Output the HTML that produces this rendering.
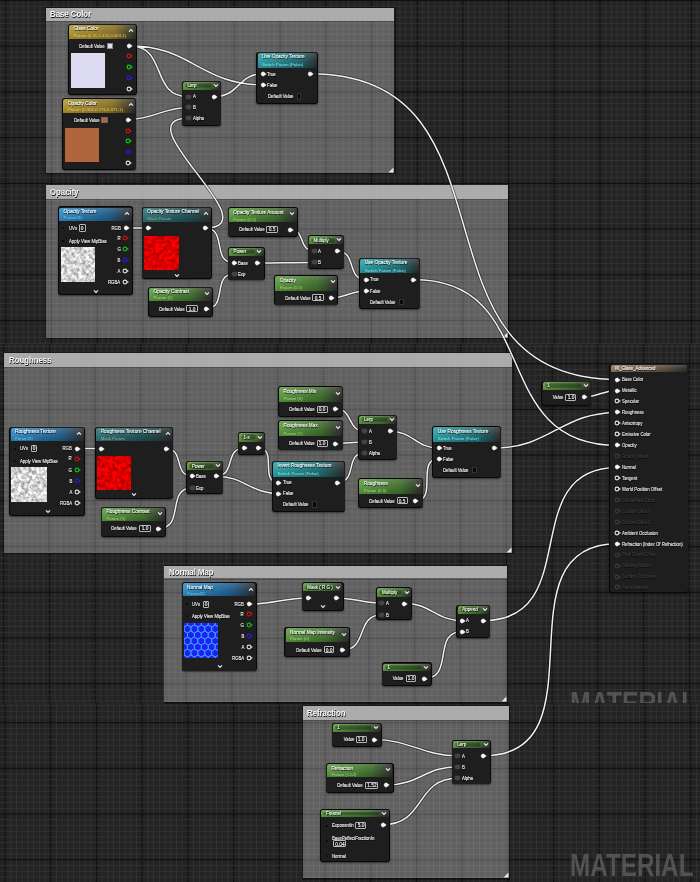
<!DOCTYPE html>
<html><head><meta charset="utf-8"><style>
html,body{margin:0;padding:0;}
body{width:700px;height:882px;overflow:hidden;position:relative;background:#232323;font-family:"Liberation Sans", sans-serif;}
div,svg{position:absolute;}
.t{white-space:nowrap;}
.L{left:0;top:0;width:700px;height:882px;will-change:transform;}
</style></head><body>
<svg style="left:0;top:0px" width="700" height="344"><line x1="-0.01" y1="0" x2="-0.01" y2="344" stroke="#383838" stroke-width="0.7"/><line x1="5.7" y1="0" x2="5.7" y2="344" stroke="#0f0f0f" stroke-width="1.0"/><line x1="11.41" y1="0" x2="11.41" y2="344" stroke="#383838" stroke-width="0.7"/><line x1="17.13" y1="0" x2="17.13" y2="344" stroke="#383838" stroke-width="0.7"/><line x1="22.84" y1="0" x2="22.84" y2="344" stroke="#383838" stroke-width="0.7"/><line x1="28.56" y1="0" x2="28.56" y2="344" stroke="#383838" stroke-width="0.7"/><line x1="34.27" y1="0" x2="34.27" y2="344" stroke="#383838" stroke-width="0.7"/><line x1="39.99" y1="0" x2="39.99" y2="344" stroke="#383838" stroke-width="0.7"/><line x1="45.7" y1="0" x2="45.7" y2="344" stroke="#383838" stroke-width="0.7"/><line x1="51.41" y1="0" x2="51.41" y2="344" stroke="#0f0f0f" stroke-width="1.0"/><line x1="57.13" y1="0" x2="57.13" y2="344" stroke="#383838" stroke-width="0.7"/><line x1="62.84" y1="0" x2="62.84" y2="344" stroke="#383838" stroke-width="0.7"/><line x1="68.56" y1="0" x2="68.56" y2="344" stroke="#383838" stroke-width="0.7"/><line x1="74.27" y1="0" x2="74.27" y2="344" stroke="#383838" stroke-width="0.7"/><line x1="79.99" y1="0" x2="79.99" y2="344" stroke="#383838" stroke-width="0.7"/><line x1="85.7" y1="0" x2="85.7" y2="344" stroke="#383838" stroke-width="0.7"/><line x1="91.41" y1="0" x2="91.41" y2="344" stroke="#383838" stroke-width="0.7"/><line x1="97.13" y1="0" x2="97.13" y2="344" stroke="#0f0f0f" stroke-width="1.0"/><line x1="102.84" y1="0" x2="102.84" y2="344" stroke="#383838" stroke-width="0.7"/><line x1="108.56" y1="0" x2="108.56" y2="344" stroke="#383838" stroke-width="0.7"/><line x1="114.27" y1="0" x2="114.27" y2="344" stroke="#383838" stroke-width="0.7"/><line x1="119.98" y1="0" x2="119.98" y2="344" stroke="#383838" stroke-width="0.7"/><line x1="125.7" y1="0" x2="125.7" y2="344" stroke="#383838" stroke-width="0.7"/><line x1="131.41" y1="0" x2="131.41" y2="344" stroke="#383838" stroke-width="0.7"/><line x1="137.13" y1="0" x2="137.13" y2="344" stroke="#383838" stroke-width="0.7"/><line x1="142.84" y1="0" x2="142.84" y2="344" stroke="#0f0f0f" stroke-width="1.0"/><line x1="148.56" y1="0" x2="148.56" y2="344" stroke="#383838" stroke-width="0.7"/><line x1="154.27" y1="0" x2="154.27" y2="344" stroke="#383838" stroke-width="0.7"/><line x1="159.98" y1="0" x2="159.98" y2="344" stroke="#383838" stroke-width="0.7"/><line x1="165.7" y1="0" x2="165.7" y2="344" stroke="#383838" stroke-width="0.7"/><line x1="171.41" y1="0" x2="171.41" y2="344" stroke="#383838" stroke-width="0.7"/><line x1="177.13" y1="0" x2="177.13" y2="344" stroke="#383838" stroke-width="0.7"/><line x1="182.84" y1="0" x2="182.84" y2="344" stroke="#383838" stroke-width="0.7"/><line x1="188.56" y1="0" x2="188.56" y2="344" stroke="#0f0f0f" stroke-width="1.0"/><line x1="194.27" y1="0" x2="194.27" y2="344" stroke="#383838" stroke-width="0.7"/><line x1="199.98" y1="0" x2="199.98" y2="344" stroke="#383838" stroke-width="0.7"/><line x1="205.7" y1="0" x2="205.7" y2="344" stroke="#383838" stroke-width="0.7"/><line x1="211.41" y1="0" x2="211.41" y2="344" stroke="#383838" stroke-width="0.7"/><line x1="217.13" y1="0" x2="217.13" y2="344" stroke="#383838" stroke-width="0.7"/><line x1="222.84" y1="0" x2="222.84" y2="344" stroke="#383838" stroke-width="0.7"/><line x1="228.56" y1="0" x2="228.56" y2="344" stroke="#383838" stroke-width="0.7"/><line x1="234.27" y1="0" x2="234.27" y2="344" stroke="#0f0f0f" stroke-width="1.0"/><line x1="239.98" y1="0" x2="239.98" y2="344" stroke="#383838" stroke-width="0.7"/><line x1="245.7" y1="0" x2="245.7" y2="344" stroke="#383838" stroke-width="0.7"/><line x1="251.41" y1="0" x2="251.41" y2="344" stroke="#383838" stroke-width="0.7"/><line x1="257.13" y1="0" x2="257.13" y2="344" stroke="#383838" stroke-width="0.7"/><line x1="262.84" y1="0" x2="262.84" y2="344" stroke="#383838" stroke-width="0.7"/><line x1="268.56" y1="0" x2="268.56" y2="344" stroke="#383838" stroke-width="0.7"/><line x1="274.27" y1="0" x2="274.27" y2="344" stroke="#383838" stroke-width="0.7"/><line x1="279.98" y1="0" x2="279.98" y2="344" stroke="#0f0f0f" stroke-width="1.0"/><line x1="285.7" y1="0" x2="285.7" y2="344" stroke="#383838" stroke-width="0.7"/><line x1="291.41" y1="0" x2="291.41" y2="344" stroke="#383838" stroke-width="0.7"/><line x1="297.13" y1="0" x2="297.13" y2="344" stroke="#383838" stroke-width="0.7"/><line x1="302.84" y1="0" x2="302.84" y2="344" stroke="#383838" stroke-width="0.7"/><line x1="308.56" y1="0" x2="308.56" y2="344" stroke="#383838" stroke-width="0.7"/><line x1="314.27" y1="0" x2="314.27" y2="344" stroke="#383838" stroke-width="0.7"/><line x1="319.98" y1="0" x2="319.98" y2="344" stroke="#383838" stroke-width="0.7"/><line x1="325.7" y1="0" x2="325.7" y2="344" stroke="#0f0f0f" stroke-width="1.0"/><line x1="331.41" y1="0" x2="331.41" y2="344" stroke="#383838" stroke-width="0.7"/><line x1="337.13" y1="0" x2="337.13" y2="344" stroke="#383838" stroke-width="0.7"/><line x1="342.84" y1="0" x2="342.84" y2="344" stroke="#383838" stroke-width="0.7"/><line x1="348.55" y1="0" x2="348.55" y2="344" stroke="#383838" stroke-width="0.7"/><line x1="354.27" y1="0" x2="354.27" y2="344" stroke="#383838" stroke-width="0.7"/><line x1="359.98" y1="0" x2="359.98" y2="344" stroke="#383838" stroke-width="0.7"/><line x1="365.7" y1="0" x2="365.7" y2="344" stroke="#383838" stroke-width="0.7"/><line x1="371.41" y1="0" x2="371.41" y2="344" stroke="#0f0f0f" stroke-width="1.0"/><line x1="377.13" y1="0" x2="377.13" y2="344" stroke="#383838" stroke-width="0.7"/><line x1="382.84" y1="0" x2="382.84" y2="344" stroke="#383838" stroke-width="0.7"/><line x1="388.55" y1="0" x2="388.55" y2="344" stroke="#383838" stroke-width="0.7"/><line x1="394.27" y1="0" x2="394.27" y2="344" stroke="#383838" stroke-width="0.7"/><line x1="399.98" y1="0" x2="399.98" y2="344" stroke="#383838" stroke-width="0.7"/><line x1="405.7" y1="0" x2="405.7" y2="344" stroke="#383838" stroke-width="0.7"/><line x1="411.41" y1="0" x2="411.41" y2="344" stroke="#383838" stroke-width="0.7"/><line x1="417.13" y1="0" x2="417.13" y2="344" stroke="#0f0f0f" stroke-width="1.0"/><line x1="422.84" y1="0" x2="422.84" y2="344" stroke="#383838" stroke-width="0.7"/><line x1="428.55" y1="0" x2="428.55" y2="344" stroke="#383838" stroke-width="0.7"/><line x1="434.27" y1="0" x2="434.27" y2="344" stroke="#383838" stroke-width="0.7"/><line x1="439.98" y1="0" x2="439.98" y2="344" stroke="#383838" stroke-width="0.7"/><line x1="445.7" y1="0" x2="445.7" y2="344" stroke="#383838" stroke-width="0.7"/><line x1="451.41" y1="0" x2="451.41" y2="344" stroke="#383838" stroke-width="0.7"/><line x1="457.13" y1="0" x2="457.13" y2="344" stroke="#383838" stroke-width="0.7"/><line x1="462.84" y1="0" x2="462.84" y2="344" stroke="#0f0f0f" stroke-width="1.0"/><line x1="468.55" y1="0" x2="468.55" y2="344" stroke="#383838" stroke-width="0.7"/><line x1="474.27" y1="0" x2="474.27" y2="344" stroke="#383838" stroke-width="0.7"/><line x1="479.98" y1="0" x2="479.98" y2="344" stroke="#383838" stroke-width="0.7"/><line x1="485.7" y1="0" x2="485.7" y2="344" stroke="#383838" stroke-width="0.7"/><line x1="491.41" y1="0" x2="491.41" y2="344" stroke="#383838" stroke-width="0.7"/><line x1="497.13" y1="0" x2="497.13" y2="344" stroke="#383838" stroke-width="0.7"/><line x1="502.84" y1="0" x2="502.84" y2="344" stroke="#383838" stroke-width="0.7"/><line x1="508.55" y1="0" x2="508.55" y2="344" stroke="#0f0f0f" stroke-width="1.0"/><line x1="514.27" y1="0" x2="514.27" y2="344" stroke="#383838" stroke-width="0.7"/><line x1="519.98" y1="0" x2="519.98" y2="344" stroke="#383838" stroke-width="0.7"/><line x1="525.7" y1="0" x2="525.7" y2="344" stroke="#383838" stroke-width="0.7"/><line x1="531.41" y1="0" x2="531.41" y2="344" stroke="#383838" stroke-width="0.7"/><line x1="537.13" y1="0" x2="537.13" y2="344" stroke="#383838" stroke-width="0.7"/><line x1="542.84" y1="0" x2="542.84" y2="344" stroke="#383838" stroke-width="0.7"/><line x1="548.55" y1="0" x2="548.55" y2="344" stroke="#383838" stroke-width="0.7"/><line x1="554.27" y1="0" x2="554.27" y2="344" stroke="#0f0f0f" stroke-width="1.0"/><line x1="559.98" y1="0" x2="559.98" y2="344" stroke="#383838" stroke-width="0.7"/><line x1="565.7" y1="0" x2="565.7" y2="344" stroke="#383838" stroke-width="0.7"/><line x1="571.41" y1="0" x2="571.41" y2="344" stroke="#383838" stroke-width="0.7"/><line x1="577.12" y1="0" x2="577.12" y2="344" stroke="#383838" stroke-width="0.7"/><line x1="582.84" y1="0" x2="582.84" y2="344" stroke="#383838" stroke-width="0.7"/><line x1="588.55" y1="0" x2="588.55" y2="344" stroke="#383838" stroke-width="0.7"/><line x1="594.27" y1="0" x2="594.27" y2="344" stroke="#383838" stroke-width="0.7"/><line x1="599.98" y1="0" x2="599.98" y2="344" stroke="#0f0f0f" stroke-width="1.0"/><line x1="605.7" y1="0" x2="605.7" y2="344" stroke="#383838" stroke-width="0.7"/><line x1="611.41" y1="0" x2="611.41" y2="344" stroke="#383838" stroke-width="0.7"/><line x1="617.12" y1="0" x2="617.12" y2="344" stroke="#383838" stroke-width="0.7"/><line x1="622.84" y1="0" x2="622.84" y2="344" stroke="#383838" stroke-width="0.7"/><line x1="628.55" y1="0" x2="628.55" y2="344" stroke="#383838" stroke-width="0.7"/><line x1="634.27" y1="0" x2="634.27" y2="344" stroke="#383838" stroke-width="0.7"/><line x1="639.98" y1="0" x2="639.98" y2="344" stroke="#383838" stroke-width="0.7"/><line x1="645.7" y1="0" x2="645.7" y2="344" stroke="#0f0f0f" stroke-width="1.0"/><line x1="651.41" y1="0" x2="651.41" y2="344" stroke="#383838" stroke-width="0.7"/><line x1="657.12" y1="0" x2="657.12" y2="344" stroke="#383838" stroke-width="0.7"/><line x1="662.84" y1="0" x2="662.84" y2="344" stroke="#383838" stroke-width="0.7"/><line x1="668.55" y1="0" x2="668.55" y2="344" stroke="#383838" stroke-width="0.7"/><line x1="674.27" y1="0" x2="674.27" y2="344" stroke="#383838" stroke-width="0.7"/><line x1="679.98" y1="0" x2="679.98" y2="344" stroke="#383838" stroke-width="0.7"/><line x1="685.7" y1="0" x2="685.7" y2="344" stroke="#383838" stroke-width="0.7"/><line x1="691.41" y1="0" x2="691.41" y2="344" stroke="#0f0f0f" stroke-width="1.0"/><line x1="697.12" y1="0" x2="697.12" y2="344" stroke="#383838" stroke-width="0.7"/><line x1="0" y1="0.5" x2="700" y2="0.5" stroke="#0f0f0f" stroke-width="1.0"/><line x1="0" y1="6.21" x2="700" y2="6.21" stroke="#383838" stroke-width="0.7"/><line x1="0" y1="11.93" x2="700" y2="11.93" stroke="#383838" stroke-width="0.7"/><line x1="0" y1="17.64" x2="700" y2="17.64" stroke="#383838" stroke-width="0.7"/><line x1="0" y1="23.36" x2="700" y2="23.36" stroke="#383838" stroke-width="0.7"/><line x1="0" y1="29.07" x2="700" y2="29.07" stroke="#383838" stroke-width="0.7"/><line x1="0" y1="34.79" x2="700" y2="34.79" stroke="#383838" stroke-width="0.7"/><line x1="0" y1="40.5" x2="700" y2="40.5" stroke="#383838" stroke-width="0.7"/><line x1="0" y1="46.21" x2="700" y2="46.21" stroke="#0f0f0f" stroke-width="1.0"/><line x1="0" y1="51.93" x2="700" y2="51.93" stroke="#383838" stroke-width="0.7"/><line x1="0" y1="57.64" x2="700" y2="57.64" stroke="#383838" stroke-width="0.7"/><line x1="0" y1="63.36" x2="700" y2="63.36" stroke="#383838" stroke-width="0.7"/><line x1="0" y1="69.07" x2="700" y2="69.07" stroke="#383838" stroke-width="0.7"/><line x1="0" y1="74.79" x2="700" y2="74.79" stroke="#383838" stroke-width="0.7"/><line x1="0" y1="80.5" x2="700" y2="80.5" stroke="#383838" stroke-width="0.7"/><line x1="0" y1="86.21" x2="700" y2="86.21" stroke="#383838" stroke-width="0.7"/><line x1="0" y1="91.93" x2="700" y2="91.93" stroke="#0f0f0f" stroke-width="1.0"/><line x1="0" y1="97.64" x2="700" y2="97.64" stroke="#383838" stroke-width="0.7"/><line x1="0" y1="103.36" x2="700" y2="103.36" stroke="#383838" stroke-width="0.7"/><line x1="0" y1="109.07" x2="700" y2="109.07" stroke="#383838" stroke-width="0.7"/><line x1="0" y1="114.78" x2="700" y2="114.78" stroke="#383838" stroke-width="0.7"/><line x1="0" y1="120.5" x2="700" y2="120.5" stroke="#383838" stroke-width="0.7"/><line x1="0" y1="126.21" x2="700" y2="126.21" stroke="#383838" stroke-width="0.7"/><line x1="0" y1="131.93" x2="700" y2="131.93" stroke="#383838" stroke-width="0.7"/><line x1="0" y1="137.64" x2="700" y2="137.64" stroke="#0f0f0f" stroke-width="1.0"/><line x1="0" y1="143.36" x2="700" y2="143.36" stroke="#383838" stroke-width="0.7"/><line x1="0" y1="149.07" x2="700" y2="149.07" stroke="#383838" stroke-width="0.7"/><line x1="0" y1="154.78" x2="700" y2="154.78" stroke="#383838" stroke-width="0.7"/><line x1="0" y1="160.5" x2="700" y2="160.5" stroke="#383838" stroke-width="0.7"/><line x1="0" y1="166.21" x2="700" y2="166.21" stroke="#383838" stroke-width="0.7"/><line x1="0" y1="171.93" x2="700" y2="171.93" stroke="#383838" stroke-width="0.7"/><line x1="0" y1="177.64" x2="700" y2="177.64" stroke="#383838" stroke-width="0.7"/><line x1="0" y1="183.36" x2="700" y2="183.36" stroke="#0f0f0f" stroke-width="1.0"/><line x1="0" y1="189.07" x2="700" y2="189.07" stroke="#383838" stroke-width="0.7"/><line x1="0" y1="194.78" x2="700" y2="194.78" stroke="#383838" stroke-width="0.7"/><line x1="0" y1="200.5" x2="700" y2="200.5" stroke="#383838" stroke-width="0.7"/><line x1="0" y1="206.21" x2="700" y2="206.21" stroke="#383838" stroke-width="0.7"/><line x1="0" y1="211.93" x2="700" y2="211.93" stroke="#383838" stroke-width="0.7"/><line x1="0" y1="217.64" x2="700" y2="217.64" stroke="#383838" stroke-width="0.7"/><line x1="0" y1="223.36" x2="700" y2="223.36" stroke="#383838" stroke-width="0.7"/><line x1="0" y1="229.07" x2="700" y2="229.07" stroke="#0f0f0f" stroke-width="1.0"/><line x1="0" y1="234.78" x2="700" y2="234.78" stroke="#383838" stroke-width="0.7"/><line x1="0" y1="240.5" x2="700" y2="240.5" stroke="#383838" stroke-width="0.7"/><line x1="0" y1="246.21" x2="700" y2="246.21" stroke="#383838" stroke-width="0.7"/><line x1="0" y1="251.93" x2="700" y2="251.93" stroke="#383838" stroke-width="0.7"/><line x1="0" y1="257.64" x2="700" y2="257.64" stroke="#383838" stroke-width="0.7"/><line x1="0" y1="263.36" x2="700" y2="263.36" stroke="#383838" stroke-width="0.7"/><line x1="0" y1="269.07" x2="700" y2="269.07" stroke="#383838" stroke-width="0.7"/><line x1="0" y1="274.78" x2="700" y2="274.78" stroke="#0f0f0f" stroke-width="1.0"/><line x1="0" y1="280.5" x2="700" y2="280.5" stroke="#383838" stroke-width="0.7"/><line x1="0" y1="286.21" x2="700" y2="286.21" stroke="#383838" stroke-width="0.7"/><line x1="0" y1="291.93" x2="700" y2="291.93" stroke="#383838" stroke-width="0.7"/><line x1="0" y1="297.64" x2="700" y2="297.64" stroke="#383838" stroke-width="0.7"/><line x1="0" y1="303.36" x2="700" y2="303.36" stroke="#383838" stroke-width="0.7"/><line x1="0" y1="309.07" x2="700" y2="309.07" stroke="#383838" stroke-width="0.7"/><line x1="0" y1="314.78" x2="700" y2="314.78" stroke="#383838" stroke-width="0.7"/><line x1="0" y1="320.5" x2="700" y2="320.5" stroke="#0f0f0f" stroke-width="1.0"/><line x1="0" y1="326.21" x2="700" y2="326.21" stroke="#383838" stroke-width="0.7"/><line x1="0" y1="331.93" x2="700" y2="331.93" stroke="#383838" stroke-width="0.7"/><line x1="0" y1="337.64" x2="700" y2="337.64" stroke="#383838" stroke-width="0.7"/><line x1="0" y1="343.35" x2="700" y2="343.35" stroke="#383838" stroke-width="0.7"/></svg><svg style="left:0;top:344px" width="700" height="359"><line x1="3.6" y1="0" x2="3.6" y2="359" stroke="#0f0f0f" stroke-width="1.0"/><line x1="9.31" y1="0" x2="9.31" y2="359" stroke="#383838" stroke-width="0.7"/><line x1="15.03" y1="0" x2="15.03" y2="359" stroke="#383838" stroke-width="0.7"/><line x1="20.74" y1="0" x2="20.74" y2="359" stroke="#383838" stroke-width="0.7"/><line x1="26.46" y1="0" x2="26.46" y2="359" stroke="#383838" stroke-width="0.7"/><line x1="32.17" y1="0" x2="32.17" y2="359" stroke="#383838" stroke-width="0.7"/><line x1="37.89" y1="0" x2="37.89" y2="359" stroke="#383838" stroke-width="0.7"/><line x1="43.6" y1="0" x2="43.6" y2="359" stroke="#383838" stroke-width="0.7"/><line x1="49.31" y1="0" x2="49.31" y2="359" stroke="#0f0f0f" stroke-width="1.0"/><line x1="55.03" y1="0" x2="55.03" y2="359" stroke="#383838" stroke-width="0.7"/><line x1="60.74" y1="0" x2="60.74" y2="359" stroke="#383838" stroke-width="0.7"/><line x1="66.46" y1="0" x2="66.46" y2="359" stroke="#383838" stroke-width="0.7"/><line x1="72.17" y1="0" x2="72.17" y2="359" stroke="#383838" stroke-width="0.7"/><line x1="77.89" y1="0" x2="77.89" y2="359" stroke="#383838" stroke-width="0.7"/><line x1="83.6" y1="0" x2="83.6" y2="359" stroke="#383838" stroke-width="0.7"/><line x1="89.31" y1="0" x2="89.31" y2="359" stroke="#383838" stroke-width="0.7"/><line x1="95.03" y1="0" x2="95.03" y2="359" stroke="#0f0f0f" stroke-width="1.0"/><line x1="100.74" y1="0" x2="100.74" y2="359" stroke="#383838" stroke-width="0.7"/><line x1="106.46" y1="0" x2="106.46" y2="359" stroke="#383838" stroke-width="0.7"/><line x1="112.17" y1="0" x2="112.17" y2="359" stroke="#383838" stroke-width="0.7"/><line x1="117.88" y1="0" x2="117.88" y2="359" stroke="#383838" stroke-width="0.7"/><line x1="123.6" y1="0" x2="123.6" y2="359" stroke="#383838" stroke-width="0.7"/><line x1="129.31" y1="0" x2="129.31" y2="359" stroke="#383838" stroke-width="0.7"/><line x1="135.03" y1="0" x2="135.03" y2="359" stroke="#383838" stroke-width="0.7"/><line x1="140.74" y1="0" x2="140.74" y2="359" stroke="#0f0f0f" stroke-width="1.0"/><line x1="146.46" y1="0" x2="146.46" y2="359" stroke="#383838" stroke-width="0.7"/><line x1="152.17" y1="0" x2="152.17" y2="359" stroke="#383838" stroke-width="0.7"/><line x1="157.88" y1="0" x2="157.88" y2="359" stroke="#383838" stroke-width="0.7"/><line x1="163.6" y1="0" x2="163.6" y2="359" stroke="#383838" stroke-width="0.7"/><line x1="169.31" y1="0" x2="169.31" y2="359" stroke="#383838" stroke-width="0.7"/><line x1="175.03" y1="0" x2="175.03" y2="359" stroke="#383838" stroke-width="0.7"/><line x1="180.74" y1="0" x2="180.74" y2="359" stroke="#383838" stroke-width="0.7"/><line x1="186.46" y1="0" x2="186.46" y2="359" stroke="#0f0f0f" stroke-width="1.0"/><line x1="192.17" y1="0" x2="192.17" y2="359" stroke="#383838" stroke-width="0.7"/><line x1="197.88" y1="0" x2="197.88" y2="359" stroke="#383838" stroke-width="0.7"/><line x1="203.6" y1="0" x2="203.6" y2="359" stroke="#383838" stroke-width="0.7"/><line x1="209.31" y1="0" x2="209.31" y2="359" stroke="#383838" stroke-width="0.7"/><line x1="215.03" y1="0" x2="215.03" y2="359" stroke="#383838" stroke-width="0.7"/><line x1="220.74" y1="0" x2="220.74" y2="359" stroke="#383838" stroke-width="0.7"/><line x1="226.46" y1="0" x2="226.46" y2="359" stroke="#383838" stroke-width="0.7"/><line x1="232.17" y1="0" x2="232.17" y2="359" stroke="#0f0f0f" stroke-width="1.0"/><line x1="237.88" y1="0" x2="237.88" y2="359" stroke="#383838" stroke-width="0.7"/><line x1="243.6" y1="0" x2="243.6" y2="359" stroke="#383838" stroke-width="0.7"/><line x1="249.31" y1="0" x2="249.31" y2="359" stroke="#383838" stroke-width="0.7"/><line x1="255.03" y1="0" x2="255.03" y2="359" stroke="#383838" stroke-width="0.7"/><line x1="260.74" y1="0" x2="260.74" y2="359" stroke="#383838" stroke-width="0.7"/><line x1="266.46" y1="0" x2="266.46" y2="359" stroke="#383838" stroke-width="0.7"/><line x1="272.17" y1="0" x2="272.17" y2="359" stroke="#383838" stroke-width="0.7"/><line x1="277.88" y1="0" x2="277.88" y2="359" stroke="#0f0f0f" stroke-width="1.0"/><line x1="283.6" y1="0" x2="283.6" y2="359" stroke="#383838" stroke-width="0.7"/><line x1="289.31" y1="0" x2="289.31" y2="359" stroke="#383838" stroke-width="0.7"/><line x1="295.03" y1="0" x2="295.03" y2="359" stroke="#383838" stroke-width="0.7"/><line x1="300.74" y1="0" x2="300.74" y2="359" stroke="#383838" stroke-width="0.7"/><line x1="306.46" y1="0" x2="306.46" y2="359" stroke="#383838" stroke-width="0.7"/><line x1="312.17" y1="0" x2="312.17" y2="359" stroke="#383838" stroke-width="0.7"/><line x1="317.88" y1="0" x2="317.88" y2="359" stroke="#383838" stroke-width="0.7"/><line x1="323.6" y1="0" x2="323.6" y2="359" stroke="#0f0f0f" stroke-width="1.0"/><line x1="329.31" y1="0" x2="329.31" y2="359" stroke="#383838" stroke-width="0.7"/><line x1="335.03" y1="0" x2="335.03" y2="359" stroke="#383838" stroke-width="0.7"/><line x1="340.74" y1="0" x2="340.74" y2="359" stroke="#383838" stroke-width="0.7"/><line x1="346.45" y1="0" x2="346.45" y2="359" stroke="#383838" stroke-width="0.7"/><line x1="352.17" y1="0" x2="352.17" y2="359" stroke="#383838" stroke-width="0.7"/><line x1="357.88" y1="0" x2="357.88" y2="359" stroke="#383838" stroke-width="0.7"/><line x1="363.6" y1="0" x2="363.6" y2="359" stroke="#383838" stroke-width="0.7"/><line x1="369.31" y1="0" x2="369.31" y2="359" stroke="#0f0f0f" stroke-width="1.0"/><line x1="375.03" y1="0" x2="375.03" y2="359" stroke="#383838" stroke-width="0.7"/><line x1="380.74" y1="0" x2="380.74" y2="359" stroke="#383838" stroke-width="0.7"/><line x1="386.45" y1="0" x2="386.45" y2="359" stroke="#383838" stroke-width="0.7"/><line x1="392.17" y1="0" x2="392.17" y2="359" stroke="#383838" stroke-width="0.7"/><line x1="397.88" y1="0" x2="397.88" y2="359" stroke="#383838" stroke-width="0.7"/><line x1="403.6" y1="0" x2="403.6" y2="359" stroke="#383838" stroke-width="0.7"/><line x1="409.31" y1="0" x2="409.31" y2="359" stroke="#383838" stroke-width="0.7"/><line x1="415.03" y1="0" x2="415.03" y2="359" stroke="#0f0f0f" stroke-width="1.0"/><line x1="420.74" y1="0" x2="420.74" y2="359" stroke="#383838" stroke-width="0.7"/><line x1="426.45" y1="0" x2="426.45" y2="359" stroke="#383838" stroke-width="0.7"/><line x1="432.17" y1="0" x2="432.17" y2="359" stroke="#383838" stroke-width="0.7"/><line x1="437.88" y1="0" x2="437.88" y2="359" stroke="#383838" stroke-width="0.7"/><line x1="443.6" y1="0" x2="443.6" y2="359" stroke="#383838" stroke-width="0.7"/><line x1="449.31" y1="0" x2="449.31" y2="359" stroke="#383838" stroke-width="0.7"/><line x1="455.03" y1="0" x2="455.03" y2="359" stroke="#383838" stroke-width="0.7"/><line x1="460.74" y1="0" x2="460.74" y2="359" stroke="#0f0f0f" stroke-width="1.0"/><line x1="466.45" y1="0" x2="466.45" y2="359" stroke="#383838" stroke-width="0.7"/><line x1="472.17" y1="0" x2="472.17" y2="359" stroke="#383838" stroke-width="0.7"/><line x1="477.88" y1="0" x2="477.88" y2="359" stroke="#383838" stroke-width="0.7"/><line x1="483.6" y1="0" x2="483.6" y2="359" stroke="#383838" stroke-width="0.7"/><line x1="489.31" y1="0" x2="489.31" y2="359" stroke="#383838" stroke-width="0.7"/><line x1="495.03" y1="0" x2="495.03" y2="359" stroke="#383838" stroke-width="0.7"/><line x1="500.74" y1="0" x2="500.74" y2="359" stroke="#383838" stroke-width="0.7"/><line x1="506.45" y1="0" x2="506.45" y2="359" stroke="#0f0f0f" stroke-width="1.0"/><line x1="512.17" y1="0" x2="512.17" y2="359" stroke="#383838" stroke-width="0.7"/><line x1="517.88" y1="0" x2="517.88" y2="359" stroke="#383838" stroke-width="0.7"/><line x1="523.6" y1="0" x2="523.6" y2="359" stroke="#383838" stroke-width="0.7"/><line x1="529.31" y1="0" x2="529.31" y2="359" stroke="#383838" stroke-width="0.7"/><line x1="535.03" y1="0" x2="535.03" y2="359" stroke="#383838" stroke-width="0.7"/><line x1="540.74" y1="0" x2="540.74" y2="359" stroke="#383838" stroke-width="0.7"/><line x1="546.45" y1="0" x2="546.45" y2="359" stroke="#383838" stroke-width="0.7"/><line x1="552.17" y1="0" x2="552.17" y2="359" stroke="#0f0f0f" stroke-width="1.0"/><line x1="557.88" y1="0" x2="557.88" y2="359" stroke="#383838" stroke-width="0.7"/><line x1="563.6" y1="0" x2="563.6" y2="359" stroke="#383838" stroke-width="0.7"/><line x1="569.31" y1="0" x2="569.31" y2="359" stroke="#383838" stroke-width="0.7"/><line x1="575.02" y1="0" x2="575.02" y2="359" stroke="#383838" stroke-width="0.7"/><line x1="580.74" y1="0" x2="580.74" y2="359" stroke="#383838" stroke-width="0.7"/><line x1="586.45" y1="0" x2="586.45" y2="359" stroke="#383838" stroke-width="0.7"/><line x1="592.17" y1="0" x2="592.17" y2="359" stroke="#383838" stroke-width="0.7"/><line x1="597.88" y1="0" x2="597.88" y2="359" stroke="#0f0f0f" stroke-width="1.0"/><line x1="603.6" y1="0" x2="603.6" y2="359" stroke="#383838" stroke-width="0.7"/><line x1="609.31" y1="0" x2="609.31" y2="359" stroke="#383838" stroke-width="0.7"/><line x1="615.02" y1="0" x2="615.02" y2="359" stroke="#383838" stroke-width="0.7"/><line x1="620.74" y1="0" x2="620.74" y2="359" stroke="#383838" stroke-width="0.7"/><line x1="626.45" y1="0" x2="626.45" y2="359" stroke="#383838" stroke-width="0.7"/><line x1="632.17" y1="0" x2="632.17" y2="359" stroke="#383838" stroke-width="0.7"/><line x1="637.88" y1="0" x2="637.88" y2="359" stroke="#383838" stroke-width="0.7"/><line x1="643.6" y1="0" x2="643.6" y2="359" stroke="#0f0f0f" stroke-width="1.0"/><line x1="649.31" y1="0" x2="649.31" y2="359" stroke="#383838" stroke-width="0.7"/><line x1="655.02" y1="0" x2="655.02" y2="359" stroke="#383838" stroke-width="0.7"/><line x1="660.74" y1="0" x2="660.74" y2="359" stroke="#383838" stroke-width="0.7"/><line x1="666.45" y1="0" x2="666.45" y2="359" stroke="#383838" stroke-width="0.7"/><line x1="672.17" y1="0" x2="672.17" y2="359" stroke="#383838" stroke-width="0.7"/><line x1="677.88" y1="0" x2="677.88" y2="359" stroke="#383838" stroke-width="0.7"/><line x1="683.6" y1="0" x2="683.6" y2="359" stroke="#383838" stroke-width="0.7"/><line x1="689.31" y1="0" x2="689.31" y2="359" stroke="#0f0f0f" stroke-width="1.0"/><line x1="695.02" y1="0" x2="695.02" y2="359" stroke="#383838" stroke-width="0.7"/><line x1="700.74" y1="0" x2="700.74" y2="359" stroke="#383838" stroke-width="0.7"/><line x1="0" y1="2.57" x2="700" y2="2.57" stroke="#383838" stroke-width="0.7"/><line x1="0" y1="8.28" x2="700" y2="8.28" stroke="#383838" stroke-width="0.7"/><line x1="0" y1="14" x2="700" y2="14" stroke="#383838" stroke-width="0.7"/><line x1="0" y1="19.71" x2="700" y2="19.71" stroke="#0f0f0f" stroke-width="1.0"/><line x1="0" y1="25.43" x2="700" y2="25.43" stroke="#383838" stroke-width="0.7"/><line x1="0" y1="31.14" x2="700" y2="31.14" stroke="#383838" stroke-width="0.7"/><line x1="0" y1="36.85" x2="700" y2="36.85" stroke="#383838" stroke-width="0.7"/><line x1="0" y1="42.57" x2="700" y2="42.57" stroke="#383838" stroke-width="0.7"/><line x1="0" y1="48.28" x2="700" y2="48.28" stroke="#383838" stroke-width="0.7"/><line x1="0" y1="54" x2="700" y2="54" stroke="#383838" stroke-width="0.7"/><line x1="0" y1="59.71" x2="700" y2="59.71" stroke="#383838" stroke-width="0.7"/><line x1="0" y1="65.43" x2="700" y2="65.43" stroke="#0f0f0f" stroke-width="1.0"/><line x1="0" y1="71.14" x2="700" y2="71.14" stroke="#383838" stroke-width="0.7"/><line x1="0" y1="76.85" x2="700" y2="76.85" stroke="#383838" stroke-width="0.7"/><line x1="0" y1="82.57" x2="700" y2="82.57" stroke="#383838" stroke-width="0.7"/><line x1="0" y1="88.28" x2="700" y2="88.28" stroke="#383838" stroke-width="0.7"/><line x1="0" y1="94" x2="700" y2="94" stroke="#383838" stroke-width="0.7"/><line x1="0" y1="99.71" x2="700" y2="99.71" stroke="#383838" stroke-width="0.7"/><line x1="0" y1="105.43" x2="700" y2="105.43" stroke="#383838" stroke-width="0.7"/><line x1="0" y1="111.14" x2="700" y2="111.14" stroke="#0f0f0f" stroke-width="1.0"/><line x1="0" y1="116.85" x2="700" y2="116.85" stroke="#383838" stroke-width="0.7"/><line x1="0" y1="122.57" x2="700" y2="122.57" stroke="#383838" stroke-width="0.7"/><line x1="0" y1="128.28" x2="700" y2="128.28" stroke="#383838" stroke-width="0.7"/><line x1="0" y1="134" x2="700" y2="134" stroke="#383838" stroke-width="0.7"/><line x1="0" y1="139.71" x2="700" y2="139.71" stroke="#383838" stroke-width="0.7"/><line x1="0" y1="145.43" x2="700" y2="145.43" stroke="#383838" stroke-width="0.7"/><line x1="0" y1="151.14" x2="700" y2="151.14" stroke="#383838" stroke-width="0.7"/><line x1="0" y1="156.85" x2="700" y2="156.85" stroke="#0f0f0f" stroke-width="1.0"/><line x1="0" y1="162.57" x2="700" y2="162.57" stroke="#383838" stroke-width="0.7"/><line x1="0" y1="168.28" x2="700" y2="168.28" stroke="#383838" stroke-width="0.7"/><line x1="0" y1="174" x2="700" y2="174" stroke="#383838" stroke-width="0.7"/><line x1="0" y1="179.71" x2="700" y2="179.71" stroke="#383838" stroke-width="0.7"/><line x1="0" y1="185.43" x2="700" y2="185.43" stroke="#383838" stroke-width="0.7"/><line x1="0" y1="191.14" x2="700" y2="191.14" stroke="#383838" stroke-width="0.7"/><line x1="0" y1="196.85" x2="700" y2="196.85" stroke="#383838" stroke-width="0.7"/><line x1="0" y1="202.57" x2="700" y2="202.57" stroke="#0f0f0f" stroke-width="1.0"/><line x1="0" y1="208.28" x2="700" y2="208.28" stroke="#383838" stroke-width="0.7"/><line x1="0" y1="214" x2="700" y2="214" stroke="#383838" stroke-width="0.7"/><line x1="0" y1="219.71" x2="700" y2="219.71" stroke="#383838" stroke-width="0.7"/><line x1="0" y1="225.42" x2="700" y2="225.42" stroke="#383838" stroke-width="0.7"/><line x1="0" y1="231.14" x2="700" y2="231.14" stroke="#383838" stroke-width="0.7"/><line x1="0" y1="236.85" x2="700" y2="236.85" stroke="#383838" stroke-width="0.7"/><line x1="0" y1="242.57" x2="700" y2="242.57" stroke="#383838" stroke-width="0.7"/><line x1="0" y1="248.28" x2="700" y2="248.28" stroke="#0f0f0f" stroke-width="1.0"/><line x1="0" y1="254" x2="700" y2="254" stroke="#383838" stroke-width="0.7"/><line x1="0" y1="259.71" x2="700" y2="259.71" stroke="#383838" stroke-width="0.7"/><line x1="0" y1="265.42" x2="700" y2="265.42" stroke="#383838" stroke-width="0.7"/><line x1="0" y1="271.14" x2="700" y2="271.14" stroke="#383838" stroke-width="0.7"/><line x1="0" y1="276.85" x2="700" y2="276.85" stroke="#383838" stroke-width="0.7"/><line x1="0" y1="282.57" x2="700" y2="282.57" stroke="#383838" stroke-width="0.7"/><line x1="0" y1="288.28" x2="700" y2="288.28" stroke="#383838" stroke-width="0.7"/><line x1="0" y1="294" x2="700" y2="294" stroke="#0f0f0f" stroke-width="1.0"/><line x1="0" y1="299.71" x2="700" y2="299.71" stroke="#383838" stroke-width="0.7"/><line x1="0" y1="305.42" x2="700" y2="305.42" stroke="#383838" stroke-width="0.7"/><line x1="0" y1="311.14" x2="700" y2="311.14" stroke="#383838" stroke-width="0.7"/><line x1="0" y1="316.85" x2="700" y2="316.85" stroke="#383838" stroke-width="0.7"/><line x1="0" y1="322.57" x2="700" y2="322.57" stroke="#383838" stroke-width="0.7"/><line x1="0" y1="328.28" x2="700" y2="328.28" stroke="#383838" stroke-width="0.7"/><line x1="0" y1="334" x2="700" y2="334" stroke="#383838" stroke-width="0.7"/><line x1="0" y1="339.71" x2="700" y2="339.71" stroke="#0f0f0f" stroke-width="1.0"/><line x1="0" y1="345.42" x2="700" y2="345.42" stroke="#383838" stroke-width="0.7"/><line x1="0" y1="351.14" x2="700" y2="351.14" stroke="#383838" stroke-width="0.7"/><line x1="0" y1="356.85" x2="700" y2="356.85" stroke="#383838" stroke-width="0.7"/></svg><svg style="left:0;top:703px" width="700" height="179"><line x1="-0.71" y1="0" x2="-0.71" y2="179" stroke="#383838" stroke-width="0.7"/><line x1="5" y1="0" x2="5" y2="179" stroke="#0f0f0f" stroke-width="1.0"/><line x1="10.71" y1="0" x2="10.71" y2="179" stroke="#383838" stroke-width="0.7"/><line x1="16.43" y1="0" x2="16.43" y2="179" stroke="#383838" stroke-width="0.7"/><line x1="22.14" y1="0" x2="22.14" y2="179" stroke="#383838" stroke-width="0.7"/><line x1="27.86" y1="0" x2="27.86" y2="179" stroke="#383838" stroke-width="0.7"/><line x1="33.57" y1="0" x2="33.57" y2="179" stroke="#383838" stroke-width="0.7"/><line x1="39.29" y1="0" x2="39.29" y2="179" stroke="#383838" stroke-width="0.7"/><line x1="45" y1="0" x2="45" y2="179" stroke="#383838" stroke-width="0.7"/><line x1="50.71" y1="0" x2="50.71" y2="179" stroke="#0f0f0f" stroke-width="1.0"/><line x1="56.43" y1="0" x2="56.43" y2="179" stroke="#383838" stroke-width="0.7"/><line x1="62.14" y1="0" x2="62.14" y2="179" stroke="#383838" stroke-width="0.7"/><line x1="67.86" y1="0" x2="67.86" y2="179" stroke="#383838" stroke-width="0.7"/><line x1="73.57" y1="0" x2="73.57" y2="179" stroke="#383838" stroke-width="0.7"/><line x1="79.29" y1="0" x2="79.29" y2="179" stroke="#383838" stroke-width="0.7"/><line x1="85" y1="0" x2="85" y2="179" stroke="#383838" stroke-width="0.7"/><line x1="90.71" y1="0" x2="90.71" y2="179" stroke="#383838" stroke-width="0.7"/><line x1="96.43" y1="0" x2="96.43" y2="179" stroke="#0f0f0f" stroke-width="1.0"/><line x1="102.14" y1="0" x2="102.14" y2="179" stroke="#383838" stroke-width="0.7"/><line x1="107.86" y1="0" x2="107.86" y2="179" stroke="#383838" stroke-width="0.7"/><line x1="113.57" y1="0" x2="113.57" y2="179" stroke="#383838" stroke-width="0.7"/><line x1="119.28" y1="0" x2="119.28" y2="179" stroke="#383838" stroke-width="0.7"/><line x1="125" y1="0" x2="125" y2="179" stroke="#383838" stroke-width="0.7"/><line x1="130.71" y1="0" x2="130.71" y2="179" stroke="#383838" stroke-width="0.7"/><line x1="136.43" y1="0" x2="136.43" y2="179" stroke="#383838" stroke-width="0.7"/><line x1="142.14" y1="0" x2="142.14" y2="179" stroke="#0f0f0f" stroke-width="1.0"/><line x1="147.86" y1="0" x2="147.86" y2="179" stroke="#383838" stroke-width="0.7"/><line x1="153.57" y1="0" x2="153.57" y2="179" stroke="#383838" stroke-width="0.7"/><line x1="159.28" y1="0" x2="159.28" y2="179" stroke="#383838" stroke-width="0.7"/><line x1="165" y1="0" x2="165" y2="179" stroke="#383838" stroke-width="0.7"/><line x1="170.71" y1="0" x2="170.71" y2="179" stroke="#383838" stroke-width="0.7"/><line x1="176.43" y1="0" x2="176.43" y2="179" stroke="#383838" stroke-width="0.7"/><line x1="182.14" y1="0" x2="182.14" y2="179" stroke="#383838" stroke-width="0.7"/><line x1="187.86" y1="0" x2="187.86" y2="179" stroke="#0f0f0f" stroke-width="1.0"/><line x1="193.57" y1="0" x2="193.57" y2="179" stroke="#383838" stroke-width="0.7"/><line x1="199.28" y1="0" x2="199.28" y2="179" stroke="#383838" stroke-width="0.7"/><line x1="205" y1="0" x2="205" y2="179" stroke="#383838" stroke-width="0.7"/><line x1="210.71" y1="0" x2="210.71" y2="179" stroke="#383838" stroke-width="0.7"/><line x1="216.43" y1="0" x2="216.43" y2="179" stroke="#383838" stroke-width="0.7"/><line x1="222.14" y1="0" x2="222.14" y2="179" stroke="#383838" stroke-width="0.7"/><line x1="227.86" y1="0" x2="227.86" y2="179" stroke="#383838" stroke-width="0.7"/><line x1="233.57" y1="0" x2="233.57" y2="179" stroke="#0f0f0f" stroke-width="1.0"/><line x1="239.28" y1="0" x2="239.28" y2="179" stroke="#383838" stroke-width="0.7"/><line x1="245" y1="0" x2="245" y2="179" stroke="#383838" stroke-width="0.7"/><line x1="250.71" y1="0" x2="250.71" y2="179" stroke="#383838" stroke-width="0.7"/><line x1="256.43" y1="0" x2="256.43" y2="179" stroke="#383838" stroke-width="0.7"/><line x1="262.14" y1="0" x2="262.14" y2="179" stroke="#383838" stroke-width="0.7"/><line x1="267.86" y1="0" x2="267.86" y2="179" stroke="#383838" stroke-width="0.7"/><line x1="273.57" y1="0" x2="273.57" y2="179" stroke="#383838" stroke-width="0.7"/><line x1="279.28" y1="0" x2="279.28" y2="179" stroke="#0f0f0f" stroke-width="1.0"/><line x1="285" y1="0" x2="285" y2="179" stroke="#383838" stroke-width="0.7"/><line x1="290.71" y1="0" x2="290.71" y2="179" stroke="#383838" stroke-width="0.7"/><line x1="296.43" y1="0" x2="296.43" y2="179" stroke="#383838" stroke-width="0.7"/><line x1="302.14" y1="0" x2="302.14" y2="179" stroke="#383838" stroke-width="0.7"/><line x1="307.86" y1="0" x2="307.86" y2="179" stroke="#383838" stroke-width="0.7"/><line x1="313.57" y1="0" x2="313.57" y2="179" stroke="#383838" stroke-width="0.7"/><line x1="319.28" y1="0" x2="319.28" y2="179" stroke="#383838" stroke-width="0.7"/><line x1="325" y1="0" x2="325" y2="179" stroke="#0f0f0f" stroke-width="1.0"/><line x1="330.71" y1="0" x2="330.71" y2="179" stroke="#383838" stroke-width="0.7"/><line x1="336.43" y1="0" x2="336.43" y2="179" stroke="#383838" stroke-width="0.7"/><line x1="342.14" y1="0" x2="342.14" y2="179" stroke="#383838" stroke-width="0.7"/><line x1="347.85" y1="0" x2="347.85" y2="179" stroke="#383838" stroke-width="0.7"/><line x1="353.57" y1="0" x2="353.57" y2="179" stroke="#383838" stroke-width="0.7"/><line x1="359.28" y1="0" x2="359.28" y2="179" stroke="#383838" stroke-width="0.7"/><line x1="365" y1="0" x2="365" y2="179" stroke="#383838" stroke-width="0.7"/><line x1="370.71" y1="0" x2="370.71" y2="179" stroke="#0f0f0f" stroke-width="1.0"/><line x1="376.43" y1="0" x2="376.43" y2="179" stroke="#383838" stroke-width="0.7"/><line x1="382.14" y1="0" x2="382.14" y2="179" stroke="#383838" stroke-width="0.7"/><line x1="387.85" y1="0" x2="387.85" y2="179" stroke="#383838" stroke-width="0.7"/><line x1="393.57" y1="0" x2="393.57" y2="179" stroke="#383838" stroke-width="0.7"/><line x1="399.28" y1="0" x2="399.28" y2="179" stroke="#383838" stroke-width="0.7"/><line x1="405" y1="0" x2="405" y2="179" stroke="#383838" stroke-width="0.7"/><line x1="410.71" y1="0" x2="410.71" y2="179" stroke="#383838" stroke-width="0.7"/><line x1="416.43" y1="0" x2="416.43" y2="179" stroke="#0f0f0f" stroke-width="1.0"/><line x1="422.14" y1="0" x2="422.14" y2="179" stroke="#383838" stroke-width="0.7"/><line x1="427.85" y1="0" x2="427.85" y2="179" stroke="#383838" stroke-width="0.7"/><line x1="433.57" y1="0" x2="433.57" y2="179" stroke="#383838" stroke-width="0.7"/><line x1="439.28" y1="0" x2="439.28" y2="179" stroke="#383838" stroke-width="0.7"/><line x1="445" y1="0" x2="445" y2="179" stroke="#383838" stroke-width="0.7"/><line x1="450.71" y1="0" x2="450.71" y2="179" stroke="#383838" stroke-width="0.7"/><line x1="456.43" y1="0" x2="456.43" y2="179" stroke="#383838" stroke-width="0.7"/><line x1="462.14" y1="0" x2="462.14" y2="179" stroke="#0f0f0f" stroke-width="1.0"/><line x1="467.85" y1="0" x2="467.85" y2="179" stroke="#383838" stroke-width="0.7"/><line x1="473.57" y1="0" x2="473.57" y2="179" stroke="#383838" stroke-width="0.7"/><line x1="479.28" y1="0" x2="479.28" y2="179" stroke="#383838" stroke-width="0.7"/><line x1="485" y1="0" x2="485" y2="179" stroke="#383838" stroke-width="0.7"/><line x1="490.71" y1="0" x2="490.71" y2="179" stroke="#383838" stroke-width="0.7"/><line x1="496.43" y1="0" x2="496.43" y2="179" stroke="#383838" stroke-width="0.7"/><line x1="502.14" y1="0" x2="502.14" y2="179" stroke="#383838" stroke-width="0.7"/><line x1="507.85" y1="0" x2="507.85" y2="179" stroke="#0f0f0f" stroke-width="1.0"/><line x1="513.57" y1="0" x2="513.57" y2="179" stroke="#383838" stroke-width="0.7"/><line x1="519.28" y1="0" x2="519.28" y2="179" stroke="#383838" stroke-width="0.7"/><line x1="525" y1="0" x2="525" y2="179" stroke="#383838" stroke-width="0.7"/><line x1="530.71" y1="0" x2="530.71" y2="179" stroke="#383838" stroke-width="0.7"/><line x1="536.43" y1="0" x2="536.43" y2="179" stroke="#383838" stroke-width="0.7"/><line x1="542.14" y1="0" x2="542.14" y2="179" stroke="#383838" stroke-width="0.7"/><line x1="547.85" y1="0" x2="547.85" y2="179" stroke="#383838" stroke-width="0.7"/><line x1="553.57" y1="0" x2="553.57" y2="179" stroke="#0f0f0f" stroke-width="1.0"/><line x1="559.28" y1="0" x2="559.28" y2="179" stroke="#383838" stroke-width="0.7"/><line x1="565" y1="0" x2="565" y2="179" stroke="#383838" stroke-width="0.7"/><line x1="570.71" y1="0" x2="570.71" y2="179" stroke="#383838" stroke-width="0.7"/><line x1="576.42" y1="0" x2="576.42" y2="179" stroke="#383838" stroke-width="0.7"/><line x1="582.14" y1="0" x2="582.14" y2="179" stroke="#383838" stroke-width="0.7"/><line x1="587.85" y1="0" x2="587.85" y2="179" stroke="#383838" stroke-width="0.7"/><line x1="593.57" y1="0" x2="593.57" y2="179" stroke="#383838" stroke-width="0.7"/><line x1="599.28" y1="0" x2="599.28" y2="179" stroke="#0f0f0f" stroke-width="1.0"/><line x1="605" y1="0" x2="605" y2="179" stroke="#383838" stroke-width="0.7"/><line x1="610.71" y1="0" x2="610.71" y2="179" stroke="#383838" stroke-width="0.7"/><line x1="616.42" y1="0" x2="616.42" y2="179" stroke="#383838" stroke-width="0.7"/><line x1="622.14" y1="0" x2="622.14" y2="179" stroke="#383838" stroke-width="0.7"/><line x1="627.85" y1="0" x2="627.85" y2="179" stroke="#383838" stroke-width="0.7"/><line x1="633.57" y1="0" x2="633.57" y2="179" stroke="#383838" stroke-width="0.7"/><line x1="639.28" y1="0" x2="639.28" y2="179" stroke="#383838" stroke-width="0.7"/><line x1="645" y1="0" x2="645" y2="179" stroke="#0f0f0f" stroke-width="1.0"/><line x1="650.71" y1="0" x2="650.71" y2="179" stroke="#383838" stroke-width="0.7"/><line x1="656.42" y1="0" x2="656.42" y2="179" stroke="#383838" stroke-width="0.7"/><line x1="662.14" y1="0" x2="662.14" y2="179" stroke="#383838" stroke-width="0.7"/><line x1="667.85" y1="0" x2="667.85" y2="179" stroke="#383838" stroke-width="0.7"/><line x1="673.57" y1="0" x2="673.57" y2="179" stroke="#383838" stroke-width="0.7"/><line x1="679.28" y1="0" x2="679.28" y2="179" stroke="#383838" stroke-width="0.7"/><line x1="685" y1="0" x2="685" y2="179" stroke="#383838" stroke-width="0.7"/><line x1="690.71" y1="0" x2="690.71" y2="179" stroke="#0f0f0f" stroke-width="1.0"/><line x1="696.42" y1="0" x2="696.42" y2="179" stroke="#383838" stroke-width="0.7"/><line x1="0" y1="2.47" x2="700" y2="2.47" stroke="#383838" stroke-width="0.7"/><line x1="0" y1="8.18" x2="700" y2="8.18" stroke="#383838" stroke-width="0.7"/><line x1="0" y1="13.9" x2="700" y2="13.9" stroke="#383838" stroke-width="0.7"/><line x1="0" y1="19.61" x2="700" y2="19.61" stroke="#0f0f0f" stroke-width="1.0"/><line x1="0" y1="25.32" x2="700" y2="25.32" stroke="#383838" stroke-width="0.7"/><line x1="0" y1="31.04" x2="700" y2="31.04" stroke="#383838" stroke-width="0.7"/><line x1="0" y1="36.75" x2="700" y2="36.75" stroke="#383838" stroke-width="0.7"/><line x1="0" y1="42.47" x2="700" y2="42.47" stroke="#383838" stroke-width="0.7"/><line x1="0" y1="48.18" x2="700" y2="48.18" stroke="#383838" stroke-width="0.7"/><line x1="0" y1="53.9" x2="700" y2="53.9" stroke="#383838" stroke-width="0.7"/><line x1="0" y1="59.61" x2="700" y2="59.61" stroke="#383838" stroke-width="0.7"/><line x1="0" y1="65.32" x2="700" y2="65.32" stroke="#0f0f0f" stroke-width="1.0"/><line x1="0" y1="71.04" x2="700" y2="71.04" stroke="#383838" stroke-width="0.7"/><line x1="0" y1="76.75" x2="700" y2="76.75" stroke="#383838" stroke-width="0.7"/><line x1="0" y1="82.47" x2="700" y2="82.47" stroke="#383838" stroke-width="0.7"/><line x1="0" y1="88.18" x2="700" y2="88.18" stroke="#383838" stroke-width="0.7"/><line x1="0" y1="93.9" x2="700" y2="93.9" stroke="#383838" stroke-width="0.7"/><line x1="0" y1="99.61" x2="700" y2="99.61" stroke="#383838" stroke-width="0.7"/><line x1="0" y1="105.32" x2="700" y2="105.32" stroke="#383838" stroke-width="0.7"/><line x1="0" y1="111.04" x2="700" y2="111.04" stroke="#0f0f0f" stroke-width="1.0"/><line x1="0" y1="116.75" x2="700" y2="116.75" stroke="#383838" stroke-width="0.7"/><line x1="0" y1="122.47" x2="700" y2="122.47" stroke="#383838" stroke-width="0.7"/><line x1="0" y1="128.18" x2="700" y2="128.18" stroke="#383838" stroke-width="0.7"/><line x1="0" y1="133.89" x2="700" y2="133.89" stroke="#383838" stroke-width="0.7"/><line x1="0" y1="139.61" x2="700" y2="139.61" stroke="#383838" stroke-width="0.7"/><line x1="0" y1="145.32" x2="700" y2="145.32" stroke="#383838" stroke-width="0.7"/><line x1="0" y1="151.04" x2="700" y2="151.04" stroke="#383838" stroke-width="0.7"/><line x1="0" y1="156.75" x2="700" y2="156.75" stroke="#0f0f0f" stroke-width="1.0"/><line x1="0" y1="162.47" x2="700" y2="162.47" stroke="#383838" stroke-width="0.7"/><line x1="0" y1="168.18" x2="700" y2="168.18" stroke="#383838" stroke-width="0.7"/><line x1="0" y1="173.89" x2="700" y2="173.89" stroke="#383838" stroke-width="0.7"/><line x1="0" y1="179.61" x2="700" y2="179.61" stroke="#383838" stroke-width="0.7"/></svg>
<div class="L">
<div style="left:560px;top:680px;width:140px;height:23px;overflow:hidden;"><div class="t" id="wm1" style="left:9.8px;top:8px;font-size:31px;line-height:31px;font-weight:bold;color:rgba(120,120,120,.55);transform:scaleX(0.8);transform-origin:0 0;">MATERIAL</div></div>
<div class="t" id="wm2" style="left:570px;top:850px;font-size:31px;line-height:31px;font-weight:bold;color:rgba(120,120,120,.55);transform:scaleX(0.782);transform-origin:0 0;">MATERIAL</div>
</div>
<div class="L"><div style="left:44.9px;top:6.8px;width:351px;height:167.5px;background:rgba(0,0,0,.45)"></div><div style="left:45.7px;top:7.6px;width:348.6px;height:165.1px;background:rgba(190,190,190,.45)"></div><svg style="left:45.7px;top:21.2px" width="348.6" height="151.5" viewBox="45.7 21.2 348.6 151.5"><line x1="45.7" y1="21.2" x2="45.7" y2="172.7" stroke="rgba(255,255,255,.07)" stroke-width="0.7"/><line x1="51.41" y1="21.2" x2="51.41" y2="172.7" stroke="rgba(0,0,0,.12)" stroke-width="1.0"/><line x1="57.13" y1="21.2" x2="57.13" y2="172.7" stroke="rgba(255,255,255,.07)" stroke-width="0.7"/><line x1="62.84" y1="21.2" x2="62.84" y2="172.7" stroke="rgba(255,255,255,.07)" stroke-width="0.7"/><line x1="68.56" y1="21.2" x2="68.56" y2="172.7" stroke="rgba(255,255,255,.07)" stroke-width="0.7"/><line x1="74.27" y1="21.2" x2="74.27" y2="172.7" stroke="rgba(255,255,255,.07)" stroke-width="0.7"/><line x1="79.99" y1="21.2" x2="79.99" y2="172.7" stroke="rgba(255,255,255,.07)" stroke-width="0.7"/><line x1="85.7" y1="21.2" x2="85.7" y2="172.7" stroke="rgba(255,255,255,.07)" stroke-width="0.7"/><line x1="91.41" y1="21.2" x2="91.41" y2="172.7" stroke="rgba(255,255,255,.07)" stroke-width="0.7"/><line x1="97.13" y1="21.2" x2="97.13" y2="172.7" stroke="rgba(0,0,0,.12)" stroke-width="1.0"/><line x1="102.84" y1="21.2" x2="102.84" y2="172.7" stroke="rgba(255,255,255,.07)" stroke-width="0.7"/><line x1="108.56" y1="21.2" x2="108.56" y2="172.7" stroke="rgba(255,255,255,.07)" stroke-width="0.7"/><line x1="114.27" y1="21.2" x2="114.27" y2="172.7" stroke="rgba(255,255,255,.07)" stroke-width="0.7"/><line x1="119.98" y1="21.2" x2="119.98" y2="172.7" stroke="rgba(255,255,255,.07)" stroke-width="0.7"/><line x1="125.7" y1="21.2" x2="125.7" y2="172.7" stroke="rgba(255,255,255,.07)" stroke-width="0.7"/><line x1="131.41" y1="21.2" x2="131.41" y2="172.7" stroke="rgba(255,255,255,.07)" stroke-width="0.7"/><line x1="137.13" y1="21.2" x2="137.13" y2="172.7" stroke="rgba(255,255,255,.07)" stroke-width="0.7"/><line x1="142.84" y1="21.2" x2="142.84" y2="172.7" stroke="rgba(0,0,0,.12)" stroke-width="1.0"/><line x1="148.56" y1="21.2" x2="148.56" y2="172.7" stroke="rgba(255,255,255,.07)" stroke-width="0.7"/><line x1="154.27" y1="21.2" x2="154.27" y2="172.7" stroke="rgba(255,255,255,.07)" stroke-width="0.7"/><line x1="159.98" y1="21.2" x2="159.98" y2="172.7" stroke="rgba(255,255,255,.07)" stroke-width="0.7"/><line x1="165.7" y1="21.2" x2="165.7" y2="172.7" stroke="rgba(255,255,255,.07)" stroke-width="0.7"/><line x1="171.41" y1="21.2" x2="171.41" y2="172.7" stroke="rgba(255,255,255,.07)" stroke-width="0.7"/><line x1="177.13" y1="21.2" x2="177.13" y2="172.7" stroke="rgba(255,255,255,.07)" stroke-width="0.7"/><line x1="182.84" y1="21.2" x2="182.84" y2="172.7" stroke="rgba(255,255,255,.07)" stroke-width="0.7"/><line x1="188.56" y1="21.2" x2="188.56" y2="172.7" stroke="rgba(0,0,0,.12)" stroke-width="1.0"/><line x1="194.27" y1="21.2" x2="194.27" y2="172.7" stroke="rgba(255,255,255,.07)" stroke-width="0.7"/><line x1="199.98" y1="21.2" x2="199.98" y2="172.7" stroke="rgba(255,255,255,.07)" stroke-width="0.7"/><line x1="205.7" y1="21.2" x2="205.7" y2="172.7" stroke="rgba(255,255,255,.07)" stroke-width="0.7"/><line x1="211.41" y1="21.2" x2="211.41" y2="172.7" stroke="rgba(255,255,255,.07)" stroke-width="0.7"/><line x1="217.13" y1="21.2" x2="217.13" y2="172.7" stroke="rgba(255,255,255,.07)" stroke-width="0.7"/><line x1="222.84" y1="21.2" x2="222.84" y2="172.7" stroke="rgba(255,255,255,.07)" stroke-width="0.7"/><line x1="228.56" y1="21.2" x2="228.56" y2="172.7" stroke="rgba(255,255,255,.07)" stroke-width="0.7"/><line x1="234.27" y1="21.2" x2="234.27" y2="172.7" stroke="rgba(0,0,0,.12)" stroke-width="1.0"/><line x1="239.98" y1="21.2" x2="239.98" y2="172.7" stroke="rgba(255,255,255,.07)" stroke-width="0.7"/><line x1="245.7" y1="21.2" x2="245.7" y2="172.7" stroke="rgba(255,255,255,.07)" stroke-width="0.7"/><line x1="251.41" y1="21.2" x2="251.41" y2="172.7" stroke="rgba(255,255,255,.07)" stroke-width="0.7"/><line x1="257.13" y1="21.2" x2="257.13" y2="172.7" stroke="rgba(255,255,255,.07)" stroke-width="0.7"/><line x1="262.84" y1="21.2" x2="262.84" y2="172.7" stroke="rgba(255,255,255,.07)" stroke-width="0.7"/><line x1="268.56" y1="21.2" x2="268.56" y2="172.7" stroke="rgba(255,255,255,.07)" stroke-width="0.7"/><line x1="274.27" y1="21.2" x2="274.27" y2="172.7" stroke="rgba(255,255,255,.07)" stroke-width="0.7"/><line x1="279.98" y1="21.2" x2="279.98" y2="172.7" stroke="rgba(0,0,0,.12)" stroke-width="1.0"/><line x1="285.7" y1="21.2" x2="285.7" y2="172.7" stroke="rgba(255,255,255,.07)" stroke-width="0.7"/><line x1="291.41" y1="21.2" x2="291.41" y2="172.7" stroke="rgba(255,255,255,.07)" stroke-width="0.7"/><line x1="297.13" y1="21.2" x2="297.13" y2="172.7" stroke="rgba(255,255,255,.07)" stroke-width="0.7"/><line x1="302.84" y1="21.2" x2="302.84" y2="172.7" stroke="rgba(255,255,255,.07)" stroke-width="0.7"/><line x1="308.56" y1="21.2" x2="308.56" y2="172.7" stroke="rgba(255,255,255,.07)" stroke-width="0.7"/><line x1="314.27" y1="21.2" x2="314.27" y2="172.7" stroke="rgba(255,255,255,.07)" stroke-width="0.7"/><line x1="319.98" y1="21.2" x2="319.98" y2="172.7" stroke="rgba(255,255,255,.07)" stroke-width="0.7"/><line x1="325.7" y1="21.2" x2="325.7" y2="172.7" stroke="rgba(0,0,0,.12)" stroke-width="1.0"/><line x1="331.41" y1="21.2" x2="331.41" y2="172.7" stroke="rgba(255,255,255,.07)" stroke-width="0.7"/><line x1="337.13" y1="21.2" x2="337.13" y2="172.7" stroke="rgba(255,255,255,.07)" stroke-width="0.7"/><line x1="342.84" y1="21.2" x2="342.84" y2="172.7" stroke="rgba(255,255,255,.07)" stroke-width="0.7"/><line x1="348.55" y1="21.2" x2="348.55" y2="172.7" stroke="rgba(255,255,255,.07)" stroke-width="0.7"/><line x1="354.27" y1="21.2" x2="354.27" y2="172.7" stroke="rgba(255,255,255,.07)" stroke-width="0.7"/><line x1="359.98" y1="21.2" x2="359.98" y2="172.7" stroke="rgba(255,255,255,.07)" stroke-width="0.7"/><line x1="365.7" y1="21.2" x2="365.7" y2="172.7" stroke="rgba(255,255,255,.07)" stroke-width="0.7"/><line x1="371.41" y1="21.2" x2="371.41" y2="172.7" stroke="rgba(0,0,0,.12)" stroke-width="1.0"/><line x1="377.13" y1="21.2" x2="377.13" y2="172.7" stroke="rgba(255,255,255,.07)" stroke-width="0.7"/><line x1="382.84" y1="21.2" x2="382.84" y2="172.7" stroke="rgba(255,255,255,.07)" stroke-width="0.7"/><line x1="388.55" y1="21.2" x2="388.55" y2="172.7" stroke="rgba(255,255,255,.07)" stroke-width="0.7"/><line x1="394.27" y1="21.2" x2="394.27" y2="172.7" stroke="rgba(255,255,255,.07)" stroke-width="0.7"/><line x1="45.7" y1="23.36" x2="394.3" y2="23.36" stroke="rgba(255,255,255,.07)" stroke-width="0.7"/><line x1="45.7" y1="29.07" x2="394.3" y2="29.07" stroke="rgba(255,255,255,.07)" stroke-width="0.7"/><line x1="45.7" y1="34.79" x2="394.3" y2="34.79" stroke="rgba(255,255,255,.07)" stroke-width="0.7"/><line x1="45.7" y1="40.5" x2="394.3" y2="40.5" stroke="rgba(255,255,255,.07)" stroke-width="0.7"/><line x1="45.7" y1="46.21" x2="394.3" y2="46.21" stroke="rgba(0,0,0,.12)" stroke-width="1.0"/><line x1="45.7" y1="51.93" x2="394.3" y2="51.93" stroke="rgba(255,255,255,.07)" stroke-width="0.7"/><line x1="45.7" y1="57.64" x2="394.3" y2="57.64" stroke="rgba(255,255,255,.07)" stroke-width="0.7"/><line x1="45.7" y1="63.36" x2="394.3" y2="63.36" stroke="rgba(255,255,255,.07)" stroke-width="0.7"/><line x1="45.7" y1="69.07" x2="394.3" y2="69.07" stroke="rgba(255,255,255,.07)" stroke-width="0.7"/><line x1="45.7" y1="74.79" x2="394.3" y2="74.79" stroke="rgba(255,255,255,.07)" stroke-width="0.7"/><line x1="45.7" y1="80.5" x2="394.3" y2="80.5" stroke="rgba(255,255,255,.07)" stroke-width="0.7"/><line x1="45.7" y1="86.21" x2="394.3" y2="86.21" stroke="rgba(255,255,255,.07)" stroke-width="0.7"/><line x1="45.7" y1="91.93" x2="394.3" y2="91.93" stroke="rgba(0,0,0,.12)" stroke-width="1.0"/><line x1="45.7" y1="97.64" x2="394.3" y2="97.64" stroke="rgba(255,255,255,.07)" stroke-width="0.7"/><line x1="45.7" y1="103.36" x2="394.3" y2="103.36" stroke="rgba(255,255,255,.07)" stroke-width="0.7"/><line x1="45.7" y1="109.07" x2="394.3" y2="109.07" stroke="rgba(255,255,255,.07)" stroke-width="0.7"/><line x1="45.7" y1="114.78" x2="394.3" y2="114.78" stroke="rgba(255,255,255,.07)" stroke-width="0.7"/><line x1="45.7" y1="120.5" x2="394.3" y2="120.5" stroke="rgba(255,255,255,.07)" stroke-width="0.7"/><line x1="45.7" y1="126.21" x2="394.3" y2="126.21" stroke="rgba(255,255,255,.07)" stroke-width="0.7"/><line x1="45.7" y1="131.93" x2="394.3" y2="131.93" stroke="rgba(255,255,255,.07)" stroke-width="0.7"/><line x1="45.7" y1="137.64" x2="394.3" y2="137.64" stroke="rgba(0,0,0,.12)" stroke-width="1.0"/><line x1="45.7" y1="143.36" x2="394.3" y2="143.36" stroke="rgba(255,255,255,.07)" stroke-width="0.7"/><line x1="45.7" y1="149.07" x2="394.3" y2="149.07" stroke="rgba(255,255,255,.07)" stroke-width="0.7"/><line x1="45.7" y1="154.78" x2="394.3" y2="154.78" stroke="rgba(255,255,255,.07)" stroke-width="0.7"/><line x1="45.7" y1="160.5" x2="394.3" y2="160.5" stroke="rgba(255,255,255,.07)" stroke-width="0.7"/><line x1="45.7" y1="166.21" x2="394.3" y2="166.21" stroke="rgba(255,255,255,.07)" stroke-width="0.7"/><line x1="45.7" y1="171.93" x2="394.3" y2="171.93" stroke="rgba(255,255,255,.07)" stroke-width="0.7"/></svg><div style="left:45.7px;top:7.6px;width:348.6px;height:13.6px;background:rgba(178,178,178,.92)"></div><div style="left:45.7px;top:21.2px;width:348.6px;height:1px;background:rgba(0,0,0,.18)"></div><div class="t" style="left:49.9px;top:9.41px;font-size:8.3px;line-height:10.38px;color:#f8f8f8;font-weight:bold;transform:scaleX(0.94);transform-origin:0 50%;text-shadow:0.5px 0.6px 0.5px #111;">Base Color</div><svg style="left:388.3px;top:166.7px" width="6" height="6"><path d="M5.5 0.5 L5.5 5.5 L0.5 5.5Z" fill="#e8e8e8"/></svg><div style="left:45.1px;top:184.6px;width:464.4px;height:154.9px;background:rgba(0,0,0,.45)"></div><div style="left:45.9px;top:185.4px;width:462px;height:152.5px;background:rgba(190,190,190,.45)"></div><svg style="left:45.9px;top:199px" width="462" height="138.9" viewBox="45.9 199 462 138.9"><line x1="45.7" y1="199" x2="45.7" y2="337.9" stroke="rgba(255,255,255,.07)" stroke-width="0.7"/><line x1="51.41" y1="199" x2="51.41" y2="337.9" stroke="rgba(0,0,0,.12)" stroke-width="1.0"/><line x1="57.13" y1="199" x2="57.13" y2="337.9" stroke="rgba(255,255,255,.07)" stroke-width="0.7"/><line x1="62.84" y1="199" x2="62.84" y2="337.9" stroke="rgba(255,255,255,.07)" stroke-width="0.7"/><line x1="68.56" y1="199" x2="68.56" y2="337.9" stroke="rgba(255,255,255,.07)" stroke-width="0.7"/><line x1="74.27" y1="199" x2="74.27" y2="337.9" stroke="rgba(255,255,255,.07)" stroke-width="0.7"/><line x1="79.99" y1="199" x2="79.99" y2="337.9" stroke="rgba(255,255,255,.07)" stroke-width="0.7"/><line x1="85.7" y1="199" x2="85.7" y2="337.9" stroke="rgba(255,255,255,.07)" stroke-width="0.7"/><line x1="91.41" y1="199" x2="91.41" y2="337.9" stroke="rgba(255,255,255,.07)" stroke-width="0.7"/><line x1="97.13" y1="199" x2="97.13" y2="337.9" stroke="rgba(0,0,0,.12)" stroke-width="1.0"/><line x1="102.84" y1="199" x2="102.84" y2="337.9" stroke="rgba(255,255,255,.07)" stroke-width="0.7"/><line x1="108.56" y1="199" x2="108.56" y2="337.9" stroke="rgba(255,255,255,.07)" stroke-width="0.7"/><line x1="114.27" y1="199" x2="114.27" y2="337.9" stroke="rgba(255,255,255,.07)" stroke-width="0.7"/><line x1="119.98" y1="199" x2="119.98" y2="337.9" stroke="rgba(255,255,255,.07)" stroke-width="0.7"/><line x1="125.7" y1="199" x2="125.7" y2="337.9" stroke="rgba(255,255,255,.07)" stroke-width="0.7"/><line x1="131.41" y1="199" x2="131.41" y2="337.9" stroke="rgba(255,255,255,.07)" stroke-width="0.7"/><line x1="137.13" y1="199" x2="137.13" y2="337.9" stroke="rgba(255,255,255,.07)" stroke-width="0.7"/><line x1="142.84" y1="199" x2="142.84" y2="337.9" stroke="rgba(0,0,0,.12)" stroke-width="1.0"/><line x1="148.56" y1="199" x2="148.56" y2="337.9" stroke="rgba(255,255,255,.07)" stroke-width="0.7"/><line x1="154.27" y1="199" x2="154.27" y2="337.9" stroke="rgba(255,255,255,.07)" stroke-width="0.7"/><line x1="159.98" y1="199" x2="159.98" y2="337.9" stroke="rgba(255,255,255,.07)" stroke-width="0.7"/><line x1="165.7" y1="199" x2="165.7" y2="337.9" stroke="rgba(255,255,255,.07)" stroke-width="0.7"/><line x1="171.41" y1="199" x2="171.41" y2="337.9" stroke="rgba(255,255,255,.07)" stroke-width="0.7"/><line x1="177.13" y1="199" x2="177.13" y2="337.9" stroke="rgba(255,255,255,.07)" stroke-width="0.7"/><line x1="182.84" y1="199" x2="182.84" y2="337.9" stroke="rgba(255,255,255,.07)" stroke-width="0.7"/><line x1="188.56" y1="199" x2="188.56" y2="337.9" stroke="rgba(0,0,0,.12)" stroke-width="1.0"/><line x1="194.27" y1="199" x2="194.27" y2="337.9" stroke="rgba(255,255,255,.07)" stroke-width="0.7"/><line x1="199.98" y1="199" x2="199.98" y2="337.9" stroke="rgba(255,255,255,.07)" stroke-width="0.7"/><line x1="205.7" y1="199" x2="205.7" y2="337.9" stroke="rgba(255,255,255,.07)" stroke-width="0.7"/><line x1="211.41" y1="199" x2="211.41" y2="337.9" stroke="rgba(255,255,255,.07)" stroke-width="0.7"/><line x1="217.13" y1="199" x2="217.13" y2="337.9" stroke="rgba(255,255,255,.07)" stroke-width="0.7"/><line x1="222.84" y1="199" x2="222.84" y2="337.9" stroke="rgba(255,255,255,.07)" stroke-width="0.7"/><line x1="228.56" y1="199" x2="228.56" y2="337.9" stroke="rgba(255,255,255,.07)" stroke-width="0.7"/><line x1="234.27" y1="199" x2="234.27" y2="337.9" stroke="rgba(0,0,0,.12)" stroke-width="1.0"/><line x1="239.98" y1="199" x2="239.98" y2="337.9" stroke="rgba(255,255,255,.07)" stroke-width="0.7"/><line x1="245.7" y1="199" x2="245.7" y2="337.9" stroke="rgba(255,255,255,.07)" stroke-width="0.7"/><line x1="251.41" y1="199" x2="251.41" y2="337.9" stroke="rgba(255,255,255,.07)" stroke-width="0.7"/><line x1="257.13" y1="199" x2="257.13" y2="337.9" stroke="rgba(255,255,255,.07)" stroke-width="0.7"/><line x1="262.84" y1="199" x2="262.84" y2="337.9" stroke="rgba(255,255,255,.07)" stroke-width="0.7"/><line x1="268.56" y1="199" x2="268.56" y2="337.9" stroke="rgba(255,255,255,.07)" stroke-width="0.7"/><line x1="274.27" y1="199" x2="274.27" y2="337.9" stroke="rgba(255,255,255,.07)" stroke-width="0.7"/><line x1="279.98" y1="199" x2="279.98" y2="337.9" stroke="rgba(0,0,0,.12)" stroke-width="1.0"/><line x1="285.7" y1="199" x2="285.7" y2="337.9" stroke="rgba(255,255,255,.07)" stroke-width="0.7"/><line x1="291.41" y1="199" x2="291.41" y2="337.9" stroke="rgba(255,255,255,.07)" stroke-width="0.7"/><line x1="297.13" y1="199" x2="297.13" y2="337.9" stroke="rgba(255,255,255,.07)" stroke-width="0.7"/><line x1="302.84" y1="199" x2="302.84" y2="337.9" stroke="rgba(255,255,255,.07)" stroke-width="0.7"/><line x1="308.56" y1="199" x2="308.56" y2="337.9" stroke="rgba(255,255,255,.07)" stroke-width="0.7"/><line x1="314.27" y1="199" x2="314.27" y2="337.9" stroke="rgba(255,255,255,.07)" stroke-width="0.7"/><line x1="319.98" y1="199" x2="319.98" y2="337.9" stroke="rgba(255,255,255,.07)" stroke-width="0.7"/><line x1="325.7" y1="199" x2="325.7" y2="337.9" stroke="rgba(0,0,0,.12)" stroke-width="1.0"/><line x1="331.41" y1="199" x2="331.41" y2="337.9" stroke="rgba(255,255,255,.07)" stroke-width="0.7"/><line x1="337.13" y1="199" x2="337.13" y2="337.9" stroke="rgba(255,255,255,.07)" stroke-width="0.7"/><line x1="342.84" y1="199" x2="342.84" y2="337.9" stroke="rgba(255,255,255,.07)" stroke-width="0.7"/><line x1="348.55" y1="199" x2="348.55" y2="337.9" stroke="rgba(255,255,255,.07)" stroke-width="0.7"/><line x1="354.27" y1="199" x2="354.27" y2="337.9" stroke="rgba(255,255,255,.07)" stroke-width="0.7"/><line x1="359.98" y1="199" x2="359.98" y2="337.9" stroke="rgba(255,255,255,.07)" stroke-width="0.7"/><line x1="365.7" y1="199" x2="365.7" y2="337.9" stroke="rgba(255,255,255,.07)" stroke-width="0.7"/><line x1="371.41" y1="199" x2="371.41" y2="337.9" stroke="rgba(0,0,0,.12)" stroke-width="1.0"/><line x1="377.13" y1="199" x2="377.13" y2="337.9" stroke="rgba(255,255,255,.07)" stroke-width="0.7"/><line x1="382.84" y1="199" x2="382.84" y2="337.9" stroke="rgba(255,255,255,.07)" stroke-width="0.7"/><line x1="388.55" y1="199" x2="388.55" y2="337.9" stroke="rgba(255,255,255,.07)" stroke-width="0.7"/><line x1="394.27" y1="199" x2="394.27" y2="337.9" stroke="rgba(255,255,255,.07)" stroke-width="0.7"/><line x1="399.98" y1="199" x2="399.98" y2="337.9" stroke="rgba(255,255,255,.07)" stroke-width="0.7"/><line x1="405.7" y1="199" x2="405.7" y2="337.9" stroke="rgba(255,255,255,.07)" stroke-width="0.7"/><line x1="411.41" y1="199" x2="411.41" y2="337.9" stroke="rgba(255,255,255,.07)" stroke-width="0.7"/><line x1="417.13" y1="199" x2="417.13" y2="337.9" stroke="rgba(0,0,0,.12)" stroke-width="1.0"/><line x1="422.84" y1="199" x2="422.84" y2="337.9" stroke="rgba(255,255,255,.07)" stroke-width="0.7"/><line x1="428.55" y1="199" x2="428.55" y2="337.9" stroke="rgba(255,255,255,.07)" stroke-width="0.7"/><line x1="434.27" y1="199" x2="434.27" y2="337.9" stroke="rgba(255,255,255,.07)" stroke-width="0.7"/><line x1="439.98" y1="199" x2="439.98" y2="337.9" stroke="rgba(255,255,255,.07)" stroke-width="0.7"/><line x1="445.7" y1="199" x2="445.7" y2="337.9" stroke="rgba(255,255,255,.07)" stroke-width="0.7"/><line x1="451.41" y1="199" x2="451.41" y2="337.9" stroke="rgba(255,255,255,.07)" stroke-width="0.7"/><line x1="457.13" y1="199" x2="457.13" y2="337.9" stroke="rgba(255,255,255,.07)" stroke-width="0.7"/><line x1="462.84" y1="199" x2="462.84" y2="337.9" stroke="rgba(0,0,0,.12)" stroke-width="1.0"/><line x1="468.55" y1="199" x2="468.55" y2="337.9" stroke="rgba(255,255,255,.07)" stroke-width="0.7"/><line x1="474.27" y1="199" x2="474.27" y2="337.9" stroke="rgba(255,255,255,.07)" stroke-width="0.7"/><line x1="479.98" y1="199" x2="479.98" y2="337.9" stroke="rgba(255,255,255,.07)" stroke-width="0.7"/><line x1="485.7" y1="199" x2="485.7" y2="337.9" stroke="rgba(255,255,255,.07)" stroke-width="0.7"/><line x1="491.41" y1="199" x2="491.41" y2="337.9" stroke="rgba(255,255,255,.07)" stroke-width="0.7"/><line x1="497.13" y1="199" x2="497.13" y2="337.9" stroke="rgba(255,255,255,.07)" stroke-width="0.7"/><line x1="502.84" y1="199" x2="502.84" y2="337.9" stroke="rgba(255,255,255,.07)" stroke-width="0.7"/><line x1="508.55" y1="199" x2="508.55" y2="337.9" stroke="rgba(0,0,0,.12)" stroke-width="1.0"/><line x1="45.9" y1="200.5" x2="507.9" y2="200.5" stroke="rgba(255,255,255,.07)" stroke-width="0.7"/><line x1="45.9" y1="206.21" x2="507.9" y2="206.21" stroke="rgba(255,255,255,.07)" stroke-width="0.7"/><line x1="45.9" y1="211.93" x2="507.9" y2="211.93" stroke="rgba(255,255,255,.07)" stroke-width="0.7"/><line x1="45.9" y1="217.64" x2="507.9" y2="217.64" stroke="rgba(255,255,255,.07)" stroke-width="0.7"/><line x1="45.9" y1="223.36" x2="507.9" y2="223.36" stroke="rgba(255,255,255,.07)" stroke-width="0.7"/><line x1="45.9" y1="229.07" x2="507.9" y2="229.07" stroke="rgba(0,0,0,.12)" stroke-width="1.0"/><line x1="45.9" y1="234.78" x2="507.9" y2="234.78" stroke="rgba(255,255,255,.07)" stroke-width="0.7"/><line x1="45.9" y1="240.5" x2="507.9" y2="240.5" stroke="rgba(255,255,255,.07)" stroke-width="0.7"/><line x1="45.9" y1="246.21" x2="507.9" y2="246.21" stroke="rgba(255,255,255,.07)" stroke-width="0.7"/><line x1="45.9" y1="251.93" x2="507.9" y2="251.93" stroke="rgba(255,255,255,.07)" stroke-width="0.7"/><line x1="45.9" y1="257.64" x2="507.9" y2="257.64" stroke="rgba(255,255,255,.07)" stroke-width="0.7"/><line x1="45.9" y1="263.36" x2="507.9" y2="263.36" stroke="rgba(255,255,255,.07)" stroke-width="0.7"/><line x1="45.9" y1="269.07" x2="507.9" y2="269.07" stroke="rgba(255,255,255,.07)" stroke-width="0.7"/><line x1="45.9" y1="274.78" x2="507.9" y2="274.78" stroke="rgba(0,0,0,.12)" stroke-width="1.0"/><line x1="45.9" y1="280.5" x2="507.9" y2="280.5" stroke="rgba(255,255,255,.07)" stroke-width="0.7"/><line x1="45.9" y1="286.21" x2="507.9" y2="286.21" stroke="rgba(255,255,255,.07)" stroke-width="0.7"/><line x1="45.9" y1="291.93" x2="507.9" y2="291.93" stroke="rgba(255,255,255,.07)" stroke-width="0.7"/><line x1="45.9" y1="297.64" x2="507.9" y2="297.64" stroke="rgba(255,255,255,.07)" stroke-width="0.7"/><line x1="45.9" y1="303.36" x2="507.9" y2="303.36" stroke="rgba(255,255,255,.07)" stroke-width="0.7"/><line x1="45.9" y1="309.07" x2="507.9" y2="309.07" stroke="rgba(255,255,255,.07)" stroke-width="0.7"/><line x1="45.9" y1="314.78" x2="507.9" y2="314.78" stroke="rgba(255,255,255,.07)" stroke-width="0.7"/><line x1="45.9" y1="320.5" x2="507.9" y2="320.5" stroke="rgba(0,0,0,.12)" stroke-width="1.0"/><line x1="45.9" y1="326.21" x2="507.9" y2="326.21" stroke="rgba(255,255,255,.07)" stroke-width="0.7"/><line x1="45.9" y1="331.93" x2="507.9" y2="331.93" stroke="rgba(255,255,255,.07)" stroke-width="0.7"/><line x1="45.9" y1="337.64" x2="507.9" y2="337.64" stroke="rgba(255,255,255,.07)" stroke-width="0.7"/></svg><div style="left:45.9px;top:185.4px;width:462px;height:13.6px;background:rgba(178,178,178,.92)"></div><div style="left:45.9px;top:199px;width:462px;height:1px;background:rgba(0,0,0,.18)"></div><div class="t" style="left:50.1px;top:187.21px;font-size:8.3px;line-height:10.38px;color:#f8f8f8;font-weight:bold;transform:scaleX(0.94);transform-origin:0 50%;text-shadow:0.5px 0.6px 0.5px #111;">Opacity</div><svg style="left:501.9px;top:331.9px" width="6" height="6"><path d="M5.5 0.5 L5.5 5.5 L0.5 5.5Z" fill="#e8e8e8"/></svg><div style="left:3.5px;top:352.2px;width:510.1px;height:201.9px;background:rgba(0,0,0,.45)"></div><div style="left:4.3px;top:353px;width:507.7px;height:199.5px;background:rgba(190,190,190,.45)"></div><svg style="left:4.3px;top:367.2px" width="507.7" height="185.3" viewBox="4.3 367.2 507.7 185.3"><line x1="3.6" y1="367.2" x2="3.6" y2="552.5" stroke="rgba(0,0,0,.12)" stroke-width="1.0"/><line x1="9.31" y1="367.2" x2="9.31" y2="552.5" stroke="rgba(255,255,255,.07)" stroke-width="0.7"/><line x1="15.03" y1="367.2" x2="15.03" y2="552.5" stroke="rgba(255,255,255,.07)" stroke-width="0.7"/><line x1="20.74" y1="367.2" x2="20.74" y2="552.5" stroke="rgba(255,255,255,.07)" stroke-width="0.7"/><line x1="26.46" y1="367.2" x2="26.46" y2="552.5" stroke="rgba(255,255,255,.07)" stroke-width="0.7"/><line x1="32.17" y1="367.2" x2="32.17" y2="552.5" stroke="rgba(255,255,255,.07)" stroke-width="0.7"/><line x1="37.89" y1="367.2" x2="37.89" y2="552.5" stroke="rgba(255,255,255,.07)" stroke-width="0.7"/><line x1="43.6" y1="367.2" x2="43.6" y2="552.5" stroke="rgba(255,255,255,.07)" stroke-width="0.7"/><line x1="49.31" y1="367.2" x2="49.31" y2="552.5" stroke="rgba(0,0,0,.12)" stroke-width="1.0"/><line x1="55.03" y1="367.2" x2="55.03" y2="552.5" stroke="rgba(255,255,255,.07)" stroke-width="0.7"/><line x1="60.74" y1="367.2" x2="60.74" y2="552.5" stroke="rgba(255,255,255,.07)" stroke-width="0.7"/><line x1="66.46" y1="367.2" x2="66.46" y2="552.5" stroke="rgba(255,255,255,.07)" stroke-width="0.7"/><line x1="72.17" y1="367.2" x2="72.17" y2="552.5" stroke="rgba(255,255,255,.07)" stroke-width="0.7"/><line x1="77.89" y1="367.2" x2="77.89" y2="552.5" stroke="rgba(255,255,255,.07)" stroke-width="0.7"/><line x1="83.6" y1="367.2" x2="83.6" y2="552.5" stroke="rgba(255,255,255,.07)" stroke-width="0.7"/><line x1="89.31" y1="367.2" x2="89.31" y2="552.5" stroke="rgba(255,255,255,.07)" stroke-width="0.7"/><line x1="95.03" y1="367.2" x2="95.03" y2="552.5" stroke="rgba(0,0,0,.12)" stroke-width="1.0"/><line x1="100.74" y1="367.2" x2="100.74" y2="552.5" stroke="rgba(255,255,255,.07)" stroke-width="0.7"/><line x1="106.46" y1="367.2" x2="106.46" y2="552.5" stroke="rgba(255,255,255,.07)" stroke-width="0.7"/><line x1="112.17" y1="367.2" x2="112.17" y2="552.5" stroke="rgba(255,255,255,.07)" stroke-width="0.7"/><line x1="117.88" y1="367.2" x2="117.88" y2="552.5" stroke="rgba(255,255,255,.07)" stroke-width="0.7"/><line x1="123.6" y1="367.2" x2="123.6" y2="552.5" stroke="rgba(255,255,255,.07)" stroke-width="0.7"/><line x1="129.31" y1="367.2" x2="129.31" y2="552.5" stroke="rgba(255,255,255,.07)" stroke-width="0.7"/><line x1="135.03" y1="367.2" x2="135.03" y2="552.5" stroke="rgba(255,255,255,.07)" stroke-width="0.7"/><line x1="140.74" y1="367.2" x2="140.74" y2="552.5" stroke="rgba(0,0,0,.12)" stroke-width="1.0"/><line x1="146.46" y1="367.2" x2="146.46" y2="552.5" stroke="rgba(255,255,255,.07)" stroke-width="0.7"/><line x1="152.17" y1="367.2" x2="152.17" y2="552.5" stroke="rgba(255,255,255,.07)" stroke-width="0.7"/><line x1="157.88" y1="367.2" x2="157.88" y2="552.5" stroke="rgba(255,255,255,.07)" stroke-width="0.7"/><line x1="163.6" y1="367.2" x2="163.6" y2="552.5" stroke="rgba(255,255,255,.07)" stroke-width="0.7"/><line x1="169.31" y1="367.2" x2="169.31" y2="552.5" stroke="rgba(255,255,255,.07)" stroke-width="0.7"/><line x1="175.03" y1="367.2" x2="175.03" y2="552.5" stroke="rgba(255,255,255,.07)" stroke-width="0.7"/><line x1="180.74" y1="367.2" x2="180.74" y2="552.5" stroke="rgba(255,255,255,.07)" stroke-width="0.7"/><line x1="186.46" y1="367.2" x2="186.46" y2="552.5" stroke="rgba(0,0,0,.12)" stroke-width="1.0"/><line x1="192.17" y1="367.2" x2="192.17" y2="552.5" stroke="rgba(255,255,255,.07)" stroke-width="0.7"/><line x1="197.88" y1="367.2" x2="197.88" y2="552.5" stroke="rgba(255,255,255,.07)" stroke-width="0.7"/><line x1="203.6" y1="367.2" x2="203.6" y2="552.5" stroke="rgba(255,255,255,.07)" stroke-width="0.7"/><line x1="209.31" y1="367.2" x2="209.31" y2="552.5" stroke="rgba(255,255,255,.07)" stroke-width="0.7"/><line x1="215.03" y1="367.2" x2="215.03" y2="552.5" stroke="rgba(255,255,255,.07)" stroke-width="0.7"/><line x1="220.74" y1="367.2" x2="220.74" y2="552.5" stroke="rgba(255,255,255,.07)" stroke-width="0.7"/><line x1="226.46" y1="367.2" x2="226.46" y2="552.5" stroke="rgba(255,255,255,.07)" stroke-width="0.7"/><line x1="232.17" y1="367.2" x2="232.17" y2="552.5" stroke="rgba(0,0,0,.12)" stroke-width="1.0"/><line x1="237.88" y1="367.2" x2="237.88" y2="552.5" stroke="rgba(255,255,255,.07)" stroke-width="0.7"/><line x1="243.6" y1="367.2" x2="243.6" y2="552.5" stroke="rgba(255,255,255,.07)" stroke-width="0.7"/><line x1="249.31" y1="367.2" x2="249.31" y2="552.5" stroke="rgba(255,255,255,.07)" stroke-width="0.7"/><line x1="255.03" y1="367.2" x2="255.03" y2="552.5" stroke="rgba(255,255,255,.07)" stroke-width="0.7"/><line x1="260.74" y1="367.2" x2="260.74" y2="552.5" stroke="rgba(255,255,255,.07)" stroke-width="0.7"/><line x1="266.46" y1="367.2" x2="266.46" y2="552.5" stroke="rgba(255,255,255,.07)" stroke-width="0.7"/><line x1="272.17" y1="367.2" x2="272.17" y2="552.5" stroke="rgba(255,255,255,.07)" stroke-width="0.7"/><line x1="277.88" y1="367.2" x2="277.88" y2="552.5" stroke="rgba(0,0,0,.12)" stroke-width="1.0"/><line x1="283.6" y1="367.2" x2="283.6" y2="552.5" stroke="rgba(255,255,255,.07)" stroke-width="0.7"/><line x1="289.31" y1="367.2" x2="289.31" y2="552.5" stroke="rgba(255,255,255,.07)" stroke-width="0.7"/><line x1="295.03" y1="367.2" x2="295.03" y2="552.5" stroke="rgba(255,255,255,.07)" stroke-width="0.7"/><line x1="300.74" y1="367.2" x2="300.74" y2="552.5" stroke="rgba(255,255,255,.07)" stroke-width="0.7"/><line x1="306.46" y1="367.2" x2="306.46" y2="552.5" stroke="rgba(255,255,255,.07)" stroke-width="0.7"/><line x1="312.17" y1="367.2" x2="312.17" y2="552.5" stroke="rgba(255,255,255,.07)" stroke-width="0.7"/><line x1="317.88" y1="367.2" x2="317.88" y2="552.5" stroke="rgba(255,255,255,.07)" stroke-width="0.7"/><line x1="323.6" y1="367.2" x2="323.6" y2="552.5" stroke="rgba(0,0,0,.12)" stroke-width="1.0"/><line x1="329.31" y1="367.2" x2="329.31" y2="552.5" stroke="rgba(255,255,255,.07)" stroke-width="0.7"/><line x1="335.03" y1="367.2" x2="335.03" y2="552.5" stroke="rgba(255,255,255,.07)" stroke-width="0.7"/><line x1="340.74" y1="367.2" x2="340.74" y2="552.5" stroke="rgba(255,255,255,.07)" stroke-width="0.7"/><line x1="346.45" y1="367.2" x2="346.45" y2="552.5" stroke="rgba(255,255,255,.07)" stroke-width="0.7"/><line x1="352.17" y1="367.2" x2="352.17" y2="552.5" stroke="rgba(255,255,255,.07)" stroke-width="0.7"/><line x1="357.88" y1="367.2" x2="357.88" y2="552.5" stroke="rgba(255,255,255,.07)" stroke-width="0.7"/><line x1="363.6" y1="367.2" x2="363.6" y2="552.5" stroke="rgba(255,255,255,.07)" stroke-width="0.7"/><line x1="369.31" y1="367.2" x2="369.31" y2="552.5" stroke="rgba(0,0,0,.12)" stroke-width="1.0"/><line x1="375.03" y1="367.2" x2="375.03" y2="552.5" stroke="rgba(255,255,255,.07)" stroke-width="0.7"/><line x1="380.74" y1="367.2" x2="380.74" y2="552.5" stroke="rgba(255,255,255,.07)" stroke-width="0.7"/><line x1="386.45" y1="367.2" x2="386.45" y2="552.5" stroke="rgba(255,255,255,.07)" stroke-width="0.7"/><line x1="392.17" y1="367.2" x2="392.17" y2="552.5" stroke="rgba(255,255,255,.07)" stroke-width="0.7"/><line x1="397.88" y1="367.2" x2="397.88" y2="552.5" stroke="rgba(255,255,255,.07)" stroke-width="0.7"/><line x1="403.6" y1="367.2" x2="403.6" y2="552.5" stroke="rgba(255,255,255,.07)" stroke-width="0.7"/><line x1="409.31" y1="367.2" x2="409.31" y2="552.5" stroke="rgba(255,255,255,.07)" stroke-width="0.7"/><line x1="415.03" y1="367.2" x2="415.03" y2="552.5" stroke="rgba(0,0,0,.12)" stroke-width="1.0"/><line x1="420.74" y1="367.2" x2="420.74" y2="552.5" stroke="rgba(255,255,255,.07)" stroke-width="0.7"/><line x1="426.45" y1="367.2" x2="426.45" y2="552.5" stroke="rgba(255,255,255,.07)" stroke-width="0.7"/><line x1="432.17" y1="367.2" x2="432.17" y2="552.5" stroke="rgba(255,255,255,.07)" stroke-width="0.7"/><line x1="437.88" y1="367.2" x2="437.88" y2="552.5" stroke="rgba(255,255,255,.07)" stroke-width="0.7"/><line x1="443.6" y1="367.2" x2="443.6" y2="552.5" stroke="rgba(255,255,255,.07)" stroke-width="0.7"/><line x1="449.31" y1="367.2" x2="449.31" y2="552.5" stroke="rgba(255,255,255,.07)" stroke-width="0.7"/><line x1="455.03" y1="367.2" x2="455.03" y2="552.5" stroke="rgba(255,255,255,.07)" stroke-width="0.7"/><line x1="460.74" y1="367.2" x2="460.74" y2="552.5" stroke="rgba(0,0,0,.12)" stroke-width="1.0"/><line x1="466.45" y1="367.2" x2="466.45" y2="552.5" stroke="rgba(255,255,255,.07)" stroke-width="0.7"/><line x1="472.17" y1="367.2" x2="472.17" y2="552.5" stroke="rgba(255,255,255,.07)" stroke-width="0.7"/><line x1="477.88" y1="367.2" x2="477.88" y2="552.5" stroke="rgba(255,255,255,.07)" stroke-width="0.7"/><line x1="483.6" y1="367.2" x2="483.6" y2="552.5" stroke="rgba(255,255,255,.07)" stroke-width="0.7"/><line x1="489.31" y1="367.2" x2="489.31" y2="552.5" stroke="rgba(255,255,255,.07)" stroke-width="0.7"/><line x1="495.03" y1="367.2" x2="495.03" y2="552.5" stroke="rgba(255,255,255,.07)" stroke-width="0.7"/><line x1="500.74" y1="367.2" x2="500.74" y2="552.5" stroke="rgba(255,255,255,.07)" stroke-width="0.7"/><line x1="506.45" y1="367.2" x2="506.45" y2="552.5" stroke="rgba(0,0,0,.12)" stroke-width="1.0"/><line x1="512.17" y1="367.2" x2="512.17" y2="552.5" stroke="rgba(255,255,255,.07)" stroke-width="0.7"/><line x1="4.3" y1="369.43" x2="512" y2="369.43" stroke="rgba(255,255,255,.07)" stroke-width="0.7"/><line x1="4.3" y1="375.14" x2="512" y2="375.14" stroke="rgba(255,255,255,.07)" stroke-width="0.7"/><line x1="4.3" y1="380.85" x2="512" y2="380.85" stroke="rgba(255,255,255,.07)" stroke-width="0.7"/><line x1="4.3" y1="386.57" x2="512" y2="386.57" stroke="rgba(255,255,255,.07)" stroke-width="0.7"/><line x1="4.3" y1="392.28" x2="512" y2="392.28" stroke="rgba(255,255,255,.07)" stroke-width="0.7"/><line x1="4.3" y1="398" x2="512" y2="398" stroke="rgba(255,255,255,.07)" stroke-width="0.7"/><line x1="4.3" y1="403.71" x2="512" y2="403.71" stroke="rgba(255,255,255,.07)" stroke-width="0.7"/><line x1="4.3" y1="409.43" x2="512" y2="409.43" stroke="rgba(0,0,0,.12)" stroke-width="1.0"/><line x1="4.3" y1="415.14" x2="512" y2="415.14" stroke="rgba(255,255,255,.07)" stroke-width="0.7"/><line x1="4.3" y1="420.85" x2="512" y2="420.85" stroke="rgba(255,255,255,.07)" stroke-width="0.7"/><line x1="4.3" y1="426.57" x2="512" y2="426.57" stroke="rgba(255,255,255,.07)" stroke-width="0.7"/><line x1="4.3" y1="432.28" x2="512" y2="432.28" stroke="rgba(255,255,255,.07)" stroke-width="0.7"/><line x1="4.3" y1="438" x2="512" y2="438" stroke="rgba(255,255,255,.07)" stroke-width="0.7"/><line x1="4.3" y1="443.71" x2="512" y2="443.71" stroke="rgba(255,255,255,.07)" stroke-width="0.7"/><line x1="4.3" y1="449.43" x2="512" y2="449.43" stroke="rgba(255,255,255,.07)" stroke-width="0.7"/><line x1="4.3" y1="455.14" x2="512" y2="455.14" stroke="rgba(0,0,0,.12)" stroke-width="1.0"/><line x1="4.3" y1="460.85" x2="512" y2="460.85" stroke="rgba(255,255,255,.07)" stroke-width="0.7"/><line x1="4.3" y1="466.57" x2="512" y2="466.57" stroke="rgba(255,255,255,.07)" stroke-width="0.7"/><line x1="4.3" y1="472.28" x2="512" y2="472.28" stroke="rgba(255,255,255,.07)" stroke-width="0.7"/><line x1="4.3" y1="478" x2="512" y2="478" stroke="rgba(255,255,255,.07)" stroke-width="0.7"/><line x1="4.3" y1="483.71" x2="512" y2="483.71" stroke="rgba(255,255,255,.07)" stroke-width="0.7"/><line x1="4.3" y1="489.43" x2="512" y2="489.43" stroke="rgba(255,255,255,.07)" stroke-width="0.7"/><line x1="4.3" y1="495.14" x2="512" y2="495.14" stroke="rgba(255,255,255,.07)" stroke-width="0.7"/><line x1="4.3" y1="500.85" x2="512" y2="500.85" stroke="rgba(0,0,0,.12)" stroke-width="1.0"/><line x1="4.3" y1="506.57" x2="512" y2="506.57" stroke="rgba(255,255,255,.07)" stroke-width="0.7"/><line x1="4.3" y1="512.28" x2="512" y2="512.28" stroke="rgba(255,255,255,.07)" stroke-width="0.7"/><line x1="4.3" y1="518" x2="512" y2="518" stroke="rgba(255,255,255,.07)" stroke-width="0.7"/><line x1="4.3" y1="523.71" x2="512" y2="523.71" stroke="rgba(255,255,255,.07)" stroke-width="0.7"/><line x1="4.3" y1="529.43" x2="512" y2="529.43" stroke="rgba(255,255,255,.07)" stroke-width="0.7"/><line x1="4.3" y1="535.14" x2="512" y2="535.14" stroke="rgba(255,255,255,.07)" stroke-width="0.7"/><line x1="4.3" y1="540.85" x2="512" y2="540.85" stroke="rgba(255,255,255,.07)" stroke-width="0.7"/><line x1="4.3" y1="546.57" x2="512" y2="546.57" stroke="rgba(0,0,0,.12)" stroke-width="1.0"/><line x1="4.3" y1="552.28" x2="512" y2="552.28" stroke="rgba(255,255,255,.07)" stroke-width="0.7"/></svg><div style="left:4.3px;top:353px;width:507.7px;height:14.2px;background:rgba(178,178,178,.92)"></div><div style="left:4.3px;top:367.2px;width:507.7px;height:1px;background:rgba(0,0,0,.18)"></div><div class="t" style="left:8.5px;top:355.11px;font-size:8.3px;line-height:10.38px;color:#f8f8f8;font-weight:bold;transform:scaleX(0.94);transform-origin:0 50%;text-shadow:0.5px 0.6px 0.5px #111;">Roughness</div><svg style="left:506px;top:546.5px" width="6" height="6"><path d="M5.5 0.5 L5.5 5.5 L0.5 5.5Z" fill="#e8e8e8"/></svg><div style="left:163.6px;top:564.8px;width:344.8px;height:139px;background:rgba(0,0,0,.45)"></div><div style="left:164.4px;top:565.6px;width:342.4px;height:136.6px;background:rgba(190,190,190,.45)"></div><svg style="left:164.4px;top:578.5px" width="342.4" height="123.7" viewBox="164.4 578.5 342.4 123.7"><line x1="163.6" y1="578.5" x2="163.6" y2="702.2" stroke="rgba(255,255,255,.07)" stroke-width="0.7"/><line x1="169.31" y1="578.5" x2="169.31" y2="702.2" stroke="rgba(255,255,255,.07)" stroke-width="0.7"/><line x1="175.03" y1="578.5" x2="175.03" y2="702.2" stroke="rgba(255,255,255,.07)" stroke-width="0.7"/><line x1="180.74" y1="578.5" x2="180.74" y2="702.2" stroke="rgba(255,255,255,.07)" stroke-width="0.7"/><line x1="186.46" y1="578.5" x2="186.46" y2="702.2" stroke="rgba(0,0,0,.12)" stroke-width="1.0"/><line x1="192.17" y1="578.5" x2="192.17" y2="702.2" stroke="rgba(255,255,255,.07)" stroke-width="0.7"/><line x1="197.88" y1="578.5" x2="197.88" y2="702.2" stroke="rgba(255,255,255,.07)" stroke-width="0.7"/><line x1="203.6" y1="578.5" x2="203.6" y2="702.2" stroke="rgba(255,255,255,.07)" stroke-width="0.7"/><line x1="209.31" y1="578.5" x2="209.31" y2="702.2" stroke="rgba(255,255,255,.07)" stroke-width="0.7"/><line x1="215.03" y1="578.5" x2="215.03" y2="702.2" stroke="rgba(255,255,255,.07)" stroke-width="0.7"/><line x1="220.74" y1="578.5" x2="220.74" y2="702.2" stroke="rgba(255,255,255,.07)" stroke-width="0.7"/><line x1="226.46" y1="578.5" x2="226.46" y2="702.2" stroke="rgba(255,255,255,.07)" stroke-width="0.7"/><line x1="232.17" y1="578.5" x2="232.17" y2="702.2" stroke="rgba(0,0,0,.12)" stroke-width="1.0"/><line x1="237.88" y1="578.5" x2="237.88" y2="702.2" stroke="rgba(255,255,255,.07)" stroke-width="0.7"/><line x1="243.6" y1="578.5" x2="243.6" y2="702.2" stroke="rgba(255,255,255,.07)" stroke-width="0.7"/><line x1="249.31" y1="578.5" x2="249.31" y2="702.2" stroke="rgba(255,255,255,.07)" stroke-width="0.7"/><line x1="255.03" y1="578.5" x2="255.03" y2="702.2" stroke="rgba(255,255,255,.07)" stroke-width="0.7"/><line x1="260.74" y1="578.5" x2="260.74" y2="702.2" stroke="rgba(255,255,255,.07)" stroke-width="0.7"/><line x1="266.46" y1="578.5" x2="266.46" y2="702.2" stroke="rgba(255,255,255,.07)" stroke-width="0.7"/><line x1="272.17" y1="578.5" x2="272.17" y2="702.2" stroke="rgba(255,255,255,.07)" stroke-width="0.7"/><line x1="277.88" y1="578.5" x2="277.88" y2="702.2" stroke="rgba(0,0,0,.12)" stroke-width="1.0"/><line x1="283.6" y1="578.5" x2="283.6" y2="702.2" stroke="rgba(255,255,255,.07)" stroke-width="0.7"/><line x1="289.31" y1="578.5" x2="289.31" y2="702.2" stroke="rgba(255,255,255,.07)" stroke-width="0.7"/><line x1="295.03" y1="578.5" x2="295.03" y2="702.2" stroke="rgba(255,255,255,.07)" stroke-width="0.7"/><line x1="300.74" y1="578.5" x2="300.74" y2="702.2" stroke="rgba(255,255,255,.07)" stroke-width="0.7"/><line x1="306.46" y1="578.5" x2="306.46" y2="702.2" stroke="rgba(255,255,255,.07)" stroke-width="0.7"/><line x1="312.17" y1="578.5" x2="312.17" y2="702.2" stroke="rgba(255,255,255,.07)" stroke-width="0.7"/><line x1="317.88" y1="578.5" x2="317.88" y2="702.2" stroke="rgba(255,255,255,.07)" stroke-width="0.7"/><line x1="323.6" y1="578.5" x2="323.6" y2="702.2" stroke="rgba(0,0,0,.12)" stroke-width="1.0"/><line x1="329.31" y1="578.5" x2="329.31" y2="702.2" stroke="rgba(255,255,255,.07)" stroke-width="0.7"/><line x1="335.03" y1="578.5" x2="335.03" y2="702.2" stroke="rgba(255,255,255,.07)" stroke-width="0.7"/><line x1="340.74" y1="578.5" x2="340.74" y2="702.2" stroke="rgba(255,255,255,.07)" stroke-width="0.7"/><line x1="346.45" y1="578.5" x2="346.45" y2="702.2" stroke="rgba(255,255,255,.07)" stroke-width="0.7"/><line x1="352.17" y1="578.5" x2="352.17" y2="702.2" stroke="rgba(255,255,255,.07)" stroke-width="0.7"/><line x1="357.88" y1="578.5" x2="357.88" y2="702.2" stroke="rgba(255,255,255,.07)" stroke-width="0.7"/><line x1="363.6" y1="578.5" x2="363.6" y2="702.2" stroke="rgba(255,255,255,.07)" stroke-width="0.7"/><line x1="369.31" y1="578.5" x2="369.31" y2="702.2" stroke="rgba(0,0,0,.12)" stroke-width="1.0"/><line x1="375.03" y1="578.5" x2="375.03" y2="702.2" stroke="rgba(255,255,255,.07)" stroke-width="0.7"/><line x1="380.74" y1="578.5" x2="380.74" y2="702.2" stroke="rgba(255,255,255,.07)" stroke-width="0.7"/><line x1="386.45" y1="578.5" x2="386.45" y2="702.2" stroke="rgba(255,255,255,.07)" stroke-width="0.7"/><line x1="392.17" y1="578.5" x2="392.17" y2="702.2" stroke="rgba(255,255,255,.07)" stroke-width="0.7"/><line x1="397.88" y1="578.5" x2="397.88" y2="702.2" stroke="rgba(255,255,255,.07)" stroke-width="0.7"/><line x1="403.6" y1="578.5" x2="403.6" y2="702.2" stroke="rgba(255,255,255,.07)" stroke-width="0.7"/><line x1="409.31" y1="578.5" x2="409.31" y2="702.2" stroke="rgba(255,255,255,.07)" stroke-width="0.7"/><line x1="415.03" y1="578.5" x2="415.03" y2="702.2" stroke="rgba(0,0,0,.12)" stroke-width="1.0"/><line x1="420.74" y1="578.5" x2="420.74" y2="702.2" stroke="rgba(255,255,255,.07)" stroke-width="0.7"/><line x1="426.45" y1="578.5" x2="426.45" y2="702.2" stroke="rgba(255,255,255,.07)" stroke-width="0.7"/><line x1="432.17" y1="578.5" x2="432.17" y2="702.2" stroke="rgba(255,255,255,.07)" stroke-width="0.7"/><line x1="437.88" y1="578.5" x2="437.88" y2="702.2" stroke="rgba(255,255,255,.07)" stroke-width="0.7"/><line x1="443.6" y1="578.5" x2="443.6" y2="702.2" stroke="rgba(255,255,255,.07)" stroke-width="0.7"/><line x1="449.31" y1="578.5" x2="449.31" y2="702.2" stroke="rgba(255,255,255,.07)" stroke-width="0.7"/><line x1="455.03" y1="578.5" x2="455.03" y2="702.2" stroke="rgba(255,255,255,.07)" stroke-width="0.7"/><line x1="460.74" y1="578.5" x2="460.74" y2="702.2" stroke="rgba(0,0,0,.12)" stroke-width="1.0"/><line x1="466.45" y1="578.5" x2="466.45" y2="702.2" stroke="rgba(255,255,255,.07)" stroke-width="0.7"/><line x1="472.17" y1="578.5" x2="472.17" y2="702.2" stroke="rgba(255,255,255,.07)" stroke-width="0.7"/><line x1="477.88" y1="578.5" x2="477.88" y2="702.2" stroke="rgba(255,255,255,.07)" stroke-width="0.7"/><line x1="483.6" y1="578.5" x2="483.6" y2="702.2" stroke="rgba(255,255,255,.07)" stroke-width="0.7"/><line x1="489.31" y1="578.5" x2="489.31" y2="702.2" stroke="rgba(255,255,255,.07)" stroke-width="0.7"/><line x1="495.03" y1="578.5" x2="495.03" y2="702.2" stroke="rgba(255,255,255,.07)" stroke-width="0.7"/><line x1="500.74" y1="578.5" x2="500.74" y2="702.2" stroke="rgba(255,255,255,.07)" stroke-width="0.7"/><line x1="506.45" y1="578.5" x2="506.45" y2="702.2" stroke="rgba(0,0,0,.12)" stroke-width="1.0"/><line x1="164.4" y1="580.85" x2="506.8" y2="580.85" stroke="rgba(255,255,255,.07)" stroke-width="0.7"/><line x1="164.4" y1="586.57" x2="506.8" y2="586.57" stroke="rgba(255,255,255,.07)" stroke-width="0.7"/><line x1="164.4" y1="592.28" x2="506.8" y2="592.28" stroke="rgba(0,0,0,.12)" stroke-width="1.0"/><line x1="164.4" y1="598" x2="506.8" y2="598" stroke="rgba(255,255,255,.07)" stroke-width="0.7"/><line x1="164.4" y1="603.71" x2="506.8" y2="603.71" stroke="rgba(255,255,255,.07)" stroke-width="0.7"/><line x1="164.4" y1="609.42" x2="506.8" y2="609.42" stroke="rgba(255,255,255,.07)" stroke-width="0.7"/><line x1="164.4" y1="615.14" x2="506.8" y2="615.14" stroke="rgba(255,255,255,.07)" stroke-width="0.7"/><line x1="164.4" y1="620.85" x2="506.8" y2="620.85" stroke="rgba(255,255,255,.07)" stroke-width="0.7"/><line x1="164.4" y1="626.57" x2="506.8" y2="626.57" stroke="rgba(255,255,255,.07)" stroke-width="0.7"/><line x1="164.4" y1="632.28" x2="506.8" y2="632.28" stroke="rgba(255,255,255,.07)" stroke-width="0.7"/><line x1="164.4" y1="638" x2="506.8" y2="638" stroke="rgba(0,0,0,.12)" stroke-width="1.0"/><line x1="164.4" y1="643.71" x2="506.8" y2="643.71" stroke="rgba(255,255,255,.07)" stroke-width="0.7"/><line x1="164.4" y1="649.42" x2="506.8" y2="649.42" stroke="rgba(255,255,255,.07)" stroke-width="0.7"/><line x1="164.4" y1="655.14" x2="506.8" y2="655.14" stroke="rgba(255,255,255,.07)" stroke-width="0.7"/><line x1="164.4" y1="660.85" x2="506.8" y2="660.85" stroke="rgba(255,255,255,.07)" stroke-width="0.7"/><line x1="164.4" y1="666.57" x2="506.8" y2="666.57" stroke="rgba(255,255,255,.07)" stroke-width="0.7"/><line x1="164.4" y1="672.28" x2="506.8" y2="672.28" stroke="rgba(255,255,255,.07)" stroke-width="0.7"/><line x1="164.4" y1="678" x2="506.8" y2="678" stroke="rgba(255,255,255,.07)" stroke-width="0.7"/><line x1="164.4" y1="683.71" x2="506.8" y2="683.71" stroke="rgba(0,0,0,.12)" stroke-width="1.0"/><line x1="164.4" y1="689.42" x2="506.8" y2="689.42" stroke="rgba(255,255,255,.07)" stroke-width="0.7"/><line x1="164.4" y1="695.14" x2="506.8" y2="695.14" stroke="rgba(255,255,255,.07)" stroke-width="0.7"/><line x1="164.4" y1="700.85" x2="506.8" y2="700.85" stroke="rgba(255,255,255,.07)" stroke-width="0.7"/></svg><div style="left:164.4px;top:565.6px;width:342.4px;height:12.9px;background:rgba(178,178,178,.92)"></div><div style="left:164.4px;top:578.5px;width:342.4px;height:1px;background:rgba(0,0,0,.18)"></div><div class="t" style="left:168.6px;top:567.06px;font-size:8.3px;line-height:10.38px;color:#f8f8f8;font-weight:bold;transform:scaleX(0.94);transform-origin:0 50%;text-shadow:0.5px 0.6px 0.5px #111;">Normal Map</div><svg style="left:500.8px;top:696.2px" width="6" height="6"><path d="M5.5 0.5 L5.5 5.5 L0.5 5.5Z" fill="#e8e8e8"/></svg><div style="left:302px;top:705.4px;width:208.4px;height:174.2px;background:rgba(0,0,0,.45)"></div><div style="left:302.8px;top:706.2px;width:206px;height:171.8px;background:rgba(190,190,190,.45)"></div><svg style="left:302.8px;top:719.6px" width="206" height="158.4" viewBox="302.8 719.6 206 158.4"><line x1="302.14" y1="719.6" x2="302.14" y2="878" stroke="rgba(255,255,255,.07)" stroke-width="0.7"/><line x1="307.86" y1="719.6" x2="307.86" y2="878" stroke="rgba(255,255,255,.07)" stroke-width="0.7"/><line x1="313.57" y1="719.6" x2="313.57" y2="878" stroke="rgba(255,255,255,.07)" stroke-width="0.7"/><line x1="319.28" y1="719.6" x2="319.28" y2="878" stroke="rgba(255,255,255,.07)" stroke-width="0.7"/><line x1="325" y1="719.6" x2="325" y2="878" stroke="rgba(0,0,0,.12)" stroke-width="1.0"/><line x1="330.71" y1="719.6" x2="330.71" y2="878" stroke="rgba(255,255,255,.07)" stroke-width="0.7"/><line x1="336.43" y1="719.6" x2="336.43" y2="878" stroke="rgba(255,255,255,.07)" stroke-width="0.7"/><line x1="342.14" y1="719.6" x2="342.14" y2="878" stroke="rgba(255,255,255,.07)" stroke-width="0.7"/><line x1="347.85" y1="719.6" x2="347.85" y2="878" stroke="rgba(255,255,255,.07)" stroke-width="0.7"/><line x1="353.57" y1="719.6" x2="353.57" y2="878" stroke="rgba(255,255,255,.07)" stroke-width="0.7"/><line x1="359.28" y1="719.6" x2="359.28" y2="878" stroke="rgba(255,255,255,.07)" stroke-width="0.7"/><line x1="365" y1="719.6" x2="365" y2="878" stroke="rgba(255,255,255,.07)" stroke-width="0.7"/><line x1="370.71" y1="719.6" x2="370.71" y2="878" stroke="rgba(0,0,0,.12)" stroke-width="1.0"/><line x1="376.43" y1="719.6" x2="376.43" y2="878" stroke="rgba(255,255,255,.07)" stroke-width="0.7"/><line x1="382.14" y1="719.6" x2="382.14" y2="878" stroke="rgba(255,255,255,.07)" stroke-width="0.7"/><line x1="387.85" y1="719.6" x2="387.85" y2="878" stroke="rgba(255,255,255,.07)" stroke-width="0.7"/><line x1="393.57" y1="719.6" x2="393.57" y2="878" stroke="rgba(255,255,255,.07)" stroke-width="0.7"/><line x1="399.28" y1="719.6" x2="399.28" y2="878" stroke="rgba(255,255,255,.07)" stroke-width="0.7"/><line x1="405" y1="719.6" x2="405" y2="878" stroke="rgba(255,255,255,.07)" stroke-width="0.7"/><line x1="410.71" y1="719.6" x2="410.71" y2="878" stroke="rgba(255,255,255,.07)" stroke-width="0.7"/><line x1="416.43" y1="719.6" x2="416.43" y2="878" stroke="rgba(0,0,0,.12)" stroke-width="1.0"/><line x1="422.14" y1="719.6" x2="422.14" y2="878" stroke="rgba(255,255,255,.07)" stroke-width="0.7"/><line x1="427.85" y1="719.6" x2="427.85" y2="878" stroke="rgba(255,255,255,.07)" stroke-width="0.7"/><line x1="433.57" y1="719.6" x2="433.57" y2="878" stroke="rgba(255,255,255,.07)" stroke-width="0.7"/><line x1="439.28" y1="719.6" x2="439.28" y2="878" stroke="rgba(255,255,255,.07)" stroke-width="0.7"/><line x1="445" y1="719.6" x2="445" y2="878" stroke="rgba(255,255,255,.07)" stroke-width="0.7"/><line x1="450.71" y1="719.6" x2="450.71" y2="878" stroke="rgba(255,255,255,.07)" stroke-width="0.7"/><line x1="456.43" y1="719.6" x2="456.43" y2="878" stroke="rgba(255,255,255,.07)" stroke-width="0.7"/><line x1="462.14" y1="719.6" x2="462.14" y2="878" stroke="rgba(0,0,0,.12)" stroke-width="1.0"/><line x1="467.85" y1="719.6" x2="467.85" y2="878" stroke="rgba(255,255,255,.07)" stroke-width="0.7"/><line x1="473.57" y1="719.6" x2="473.57" y2="878" stroke="rgba(255,255,255,.07)" stroke-width="0.7"/><line x1="479.28" y1="719.6" x2="479.28" y2="878" stroke="rgba(255,255,255,.07)" stroke-width="0.7"/><line x1="485" y1="719.6" x2="485" y2="878" stroke="rgba(255,255,255,.07)" stroke-width="0.7"/><line x1="490.71" y1="719.6" x2="490.71" y2="878" stroke="rgba(255,255,255,.07)" stroke-width="0.7"/><line x1="496.43" y1="719.6" x2="496.43" y2="878" stroke="rgba(255,255,255,.07)" stroke-width="0.7"/><line x1="502.14" y1="719.6" x2="502.14" y2="878" stroke="rgba(255,255,255,.07)" stroke-width="0.7"/><line x1="507.85" y1="719.6" x2="507.85" y2="878" stroke="rgba(0,0,0,.12)" stroke-width="1.0"/><line x1="302.8" y1="722.61" x2="508.8" y2="722.61" stroke="rgba(0,0,0,.12)" stroke-width="1.0"/><line x1="302.8" y1="728.32" x2="508.8" y2="728.32" stroke="rgba(255,255,255,.07)" stroke-width="0.7"/><line x1="302.8" y1="734.04" x2="508.8" y2="734.04" stroke="rgba(255,255,255,.07)" stroke-width="0.7"/><line x1="302.8" y1="739.75" x2="508.8" y2="739.75" stroke="rgba(255,255,255,.07)" stroke-width="0.7"/><line x1="302.8" y1="745.47" x2="508.8" y2="745.47" stroke="rgba(255,255,255,.07)" stroke-width="0.7"/><line x1="302.8" y1="751.18" x2="508.8" y2="751.18" stroke="rgba(255,255,255,.07)" stroke-width="0.7"/><line x1="302.8" y1="756.9" x2="508.8" y2="756.9" stroke="rgba(255,255,255,.07)" stroke-width="0.7"/><line x1="302.8" y1="762.61" x2="508.8" y2="762.61" stroke="rgba(255,255,255,.07)" stroke-width="0.7"/><line x1="302.8" y1="768.32" x2="508.8" y2="768.32" stroke="rgba(0,0,0,.12)" stroke-width="1.0"/><line x1="302.8" y1="774.04" x2="508.8" y2="774.04" stroke="rgba(255,255,255,.07)" stroke-width="0.7"/><line x1="302.8" y1="779.75" x2="508.8" y2="779.75" stroke="rgba(255,255,255,.07)" stroke-width="0.7"/><line x1="302.8" y1="785.47" x2="508.8" y2="785.47" stroke="rgba(255,255,255,.07)" stroke-width="0.7"/><line x1="302.8" y1="791.18" x2="508.8" y2="791.18" stroke="rgba(255,255,255,.07)" stroke-width="0.7"/><line x1="302.8" y1="796.9" x2="508.8" y2="796.9" stroke="rgba(255,255,255,.07)" stroke-width="0.7"/><line x1="302.8" y1="802.61" x2="508.8" y2="802.61" stroke="rgba(255,255,255,.07)" stroke-width="0.7"/><line x1="302.8" y1="808.32" x2="508.8" y2="808.32" stroke="rgba(255,255,255,.07)" stroke-width="0.7"/><line x1="302.8" y1="814.04" x2="508.8" y2="814.04" stroke="rgba(0,0,0,.12)" stroke-width="1.0"/><line x1="302.8" y1="819.75" x2="508.8" y2="819.75" stroke="rgba(255,255,255,.07)" stroke-width="0.7"/><line x1="302.8" y1="825.47" x2="508.8" y2="825.47" stroke="rgba(255,255,255,.07)" stroke-width="0.7"/><line x1="302.8" y1="831.18" x2="508.8" y2="831.18" stroke="rgba(255,255,255,.07)" stroke-width="0.7"/><line x1="302.8" y1="836.89" x2="508.8" y2="836.89" stroke="rgba(255,255,255,.07)" stroke-width="0.7"/><line x1="302.8" y1="842.61" x2="508.8" y2="842.61" stroke="rgba(255,255,255,.07)" stroke-width="0.7"/><line x1="302.8" y1="848.32" x2="508.8" y2="848.32" stroke="rgba(255,255,255,.07)" stroke-width="0.7"/><line x1="302.8" y1="854.04" x2="508.8" y2="854.04" stroke="rgba(255,255,255,.07)" stroke-width="0.7"/><line x1="302.8" y1="859.75" x2="508.8" y2="859.75" stroke="rgba(0,0,0,.12)" stroke-width="1.0"/><line x1="302.8" y1="865.47" x2="508.8" y2="865.47" stroke="rgba(255,255,255,.07)" stroke-width="0.7"/><line x1="302.8" y1="871.18" x2="508.8" y2="871.18" stroke="rgba(255,255,255,.07)" stroke-width="0.7"/><line x1="302.8" y1="876.89" x2="508.8" y2="876.89" stroke="rgba(255,255,255,.07)" stroke-width="0.7"/></svg><div style="left:302.8px;top:706.2px;width:206px;height:13.4px;background:rgba(178,178,178,.92)"></div><div style="left:302.8px;top:719.6px;width:206px;height:1px;background:rgba(0,0,0,.18)"></div><div class="t" style="left:307px;top:707.91px;font-size:8.3px;line-height:10.38px;color:#f8f8f8;font-weight:bold;transform:scaleX(0.94);transform-origin:0 50%;text-shadow:0.5px 0.6px 0.5px #111;">Refraction</div><svg style="left:502.8px;top:872px" width="6" height="6"><path d="M5.5 0.5 L5.5 5.5 L0.5 5.5Z" fill="#e8e8e8"/></svg></div>
<svg style="left:0;top:0" width="700" height="882"><path d="M129.1 45.7 C168.48 45.7 149.22 96.6 188.6 96.6 M129.1 45.7 C190.84 45.7 201.26 84.9 263 84.9 M128.6 119.4 C154.28 119.4 162.92 107.4 188.6 107.4 M214.3 96.6 C239.84 96.6 237.46 73.7 263 73.7 M310.6 73.7 C529.09 73.7 399.01 379.4 617.5 379.4 M125.7 228 C133.87 228 140.43 228 148.6 228 M204.9 228 C227.73 228 211.17 262.9 234 262.9 M205.7 308.7 C228.21 308.7 211.49 273.9 234 273.9 M290 229.3 C306.3 229.3 297.7 251 314 251 M257.3 262.9 C277.7 262.9 293.6 262.4 314 262.4 M336.9 251 C357.59 251 345.61 279.6 366.3 279.6 M331.1 297.9 C346.22 297.9 351.18 290.7 366.3 290.7 M413.1 279.6 C545.14 279.6 485.46 445.4 617.5 445.4 M77.1 448.6 C85.77 448.6 92.73 448.6 101.4 448.6 M165.7 448.6 C185.03 448.6 172.97 476.2 192.3 476.2 M158.6 528.6 C185.17 528.6 165.73 487.8 192.3 487.8 M216 476.2 C236.19 476.2 224.11 447.9 244.3 447.9 M216 476.2 C244.43 476.2 250.07 493.4 278.5 493.4 M258.4 447.9 C277.87 447.9 259.03 482.4 278.5 482.4 M335.6 409.1 C353.9 409.1 346.5 431.2 364.8 431.2 M335.6 443.3 C346.48 443.3 353.92 442 364.8 442 M337.4 482.4 C357.73 482.4 344.47 452.8 364.8 452.8 M390 431.2 C413.4 431.2 415.4 448 438.8 448 M415.2 500.8 C438.6 500.8 415.4 458.8 438.8 458.8 M494 448 C550.75 448 560.75 412.4 617.5 412.4 M582.8 397.2 C597.6 397.2 602.7 390.4 617.5 390.4 M249.3 604.1 C272.59 604.1 285.11 597.9 308.4 597.9 M336.4 597.9 C354.55 597.9 363.75 603.3 381.9 603.3 M342.1 649.9 C368.85 649.9 355.15 614.7 381.9 614.7 M404.3 603.3 C431.09 603.3 435.31 620.6 462.1 620.6 M424.3 678.4 C454.55 678.4 431.85 631.4 462.1 631.4 M483.2 620.6 C585.74 620.6 514.96 467.4 617.5 467.4 M374.2 739.6 C409.76 739.6 422.24 755.7 457.8 755.7 M386.1 785.2 C418.27 785.2 425.63 766.7 457.8 766.7 M383 824.5 C426.16 824.5 414.64 778.3 457.8 778.3 M483.6 755.7 C606.97 755.7 494.13 543.7 617.5 543.7 M204.9 228 C272.9 228 120.6 118.3 188.6 118.3" stroke="rgba(0,0,0,.5)" stroke-width="3" fill="none"/><path d="M129.1 45.7 C168.48 45.7 149.22 96.6 188.6 96.6 M129.1 45.7 C190.84 45.7 201.26 84.9 263 84.9 M128.6 119.4 C154.28 119.4 162.92 107.4 188.6 107.4 M214.3 96.6 C239.84 96.6 237.46 73.7 263 73.7 M310.6 73.7 C529.09 73.7 399.01 379.4 617.5 379.4 M125.7 228 C133.87 228 140.43 228 148.6 228 M204.9 228 C227.73 228 211.17 262.9 234 262.9 M205.7 308.7 C228.21 308.7 211.49 273.9 234 273.9 M290 229.3 C306.3 229.3 297.7 251 314 251 M257.3 262.9 C277.7 262.9 293.6 262.4 314 262.4 M336.9 251 C357.59 251 345.61 279.6 366.3 279.6 M331.1 297.9 C346.22 297.9 351.18 290.7 366.3 290.7 M413.1 279.6 C545.14 279.6 485.46 445.4 617.5 445.4 M77.1 448.6 C85.77 448.6 92.73 448.6 101.4 448.6 M165.7 448.6 C185.03 448.6 172.97 476.2 192.3 476.2 M158.6 528.6 C185.17 528.6 165.73 487.8 192.3 487.8 M216 476.2 C236.19 476.2 224.11 447.9 244.3 447.9 M216 476.2 C244.43 476.2 250.07 493.4 278.5 493.4 M258.4 447.9 C277.87 447.9 259.03 482.4 278.5 482.4 M335.6 409.1 C353.9 409.1 346.5 431.2 364.8 431.2 M335.6 443.3 C346.48 443.3 353.92 442 364.8 442 M337.4 482.4 C357.73 482.4 344.47 452.8 364.8 452.8 M390 431.2 C413.4 431.2 415.4 448 438.8 448 M415.2 500.8 C438.6 500.8 415.4 458.8 438.8 458.8 M494 448 C550.75 448 560.75 412.4 617.5 412.4 M582.8 397.2 C597.6 397.2 602.7 390.4 617.5 390.4 M249.3 604.1 C272.59 604.1 285.11 597.9 308.4 597.9 M336.4 597.9 C354.55 597.9 363.75 603.3 381.9 603.3 M342.1 649.9 C368.85 649.9 355.15 614.7 381.9 614.7 M404.3 603.3 C431.09 603.3 435.31 620.6 462.1 620.6 M424.3 678.4 C454.55 678.4 431.85 631.4 462.1 631.4 M483.2 620.6 C585.74 620.6 514.96 467.4 617.5 467.4 M374.2 739.6 C409.76 739.6 422.24 755.7 457.8 755.7 M386.1 785.2 C418.27 785.2 425.63 766.7 457.8 766.7 M383 824.5 C426.16 824.5 414.64 778.3 457.8 778.3 M483.6 755.7 C606.97 755.7 494.13 543.7 617.5 543.7 M204.9 228 C272.9 228 120.6 118.3 188.6 118.3" stroke="#efefef" stroke-width="1.5" fill="none" stroke-linecap="round"/></svg>
<div class="L"><div style="left:68px;top:23.7px;width:68.9px;height:71.4px;background:#080808;border-radius:3px;box-shadow:0 1px 2px rgba(0,0,0,.5)"></div><div style="left:68.6px;top:24.3px;width:67.7px;height:70px;background:#1e1e1e;border-radius:2.5px"></div><div style="left:69.1px;top:24.8px;width:66.7px;height:13.8px;border-radius:2px 2px 0 0;background:linear-gradient(to bottom,rgba(255,255,255,.16),rgba(255,255,255,.04) 50%,rgba(0,0,0,.12)),linear-gradient(to right,#ae9430 0%,#846c20 68%,#2a2a2a 100%)"></div><div class="t" style="left:73.6px;top:26.43px;font-size:4.75px;line-height:5.94px;color:#f4f4f4;font-weight:normal;text-shadow:0.4px 0.5px 0.5px #000;-webkit-text-stroke:0.12px #f4f4f4;">Glass Color</div><div class="t" style="left:73.6px;top:32.91px;font-size:4.3px;line-height:5.38px;color:#e0cc80;font-weight:normal;">Param (0.41,0.424,0.463,1)</div><svg style="left:128.3px;top:28.1px" width="6" height="5"><path d="M1 3.6 L3 1.6 L5 3.6" stroke="#eee" stroke-width="1.2" fill="none"/></svg><div class="t" style="right:595px;top:42.58px;font-size:5px;line-height:6.25px;color:#f4f4f4;font-weight:normal;transform:scaleX(0.86);transform-origin:100% 50%;text-shadow:0.4px 0.5px 0.5px #000;-webkit-text-stroke:0.12px #f4f4f4;">Default Value</div><div style="left:107px;top:42.6px;width:6.4px;height:6.4px;background:#dcdcf2;border:0.5px solid #888;box-sizing:border-box"></div><div style="left:70.6px;top:52.9px;width:34.4px;height:35.1px;background:#dddcf3"></div><svg style="left:125.9px;top:42.9px" width="8" height="6"><path d="M0.7 3 A2.4 2.3 0 0 1 4.9 1.4 L6.8 3 L4.9 4.6 A2.4 2.3 0 0 1 0.7 3Z" fill="#f8f8f8" stroke="rgba(0,0,0,.55)" stroke-width=".7"/></svg><svg style="left:125.6px;top:53px" width="8" height="6"><circle cx="3" cy="3" r="1.9" stroke="#e01010" stroke-width="1.1" fill="none"/><path d="M5.2 1.7 L6.8 3 L5.2 4.3Z" fill="#e01010"/></svg><svg style="left:125.6px;top:64px" width="8" height="6"><circle cx="3" cy="3" r="1.9" stroke="#10d010" stroke-width="1.1" fill="none"/><path d="M5.2 1.7 L6.8 3 L5.2 4.3Z" fill="#10d010"/></svg><svg style="left:125.6px;top:74.7px" width="8" height="6"><circle cx="3" cy="3" r="1.9" stroke="#2020e0" stroke-width="1.1" fill="none"/><path d="M5.2 1.7 L6.8 3 L5.2 4.3Z" fill="#2020e0"/></svg><svg style="left:125.6px;top:86px" width="8" height="6"><circle cx="3" cy="3" r="1.9" stroke="#e8e8e8" stroke-width="1.1" fill="none"/><path d="M5.2 1.7 L6.8 3 L5.2 4.3Z" fill="#e8e8e8"/></svg><div style="left:62.3px;top:98px;width:74px;height:71.8px;background:#080808;border-radius:3px;box-shadow:0 1px 2px rgba(0,0,0,.5)"></div><div style="left:62.9px;top:98.6px;width:72.8px;height:70.4px;background:#1e1e1e;border-radius:2.5px"></div><div style="left:63.4px;top:99.1px;width:71.8px;height:13.9px;border-radius:2px 2px 0 0;background:linear-gradient(to bottom,rgba(255,255,255,.16),rgba(255,255,255,.04) 50%,rgba(0,0,0,.12)),linear-gradient(to right,#ae9430 0%,#846c20 68%,#2a2a2a 100%)"></div><div class="t" style="left:67.9px;top:100.73px;font-size:4.75px;line-height:5.94px;color:#f4f4f4;font-weight:normal;text-shadow:0.4px 0.5px 0.5px #000;-webkit-text-stroke:0.12px #f4f4f4;">Opacity Color</div><div class="t" style="left:67.9px;top:107.31px;font-size:4.3px;line-height:5.38px;color:#e0cc80;font-weight:normal;">Param (0.302,0.176,0.071,1)</div><svg style="left:127.7px;top:102.4px" width="6" height="5"><path d="M1 3.6 L3 1.6 L5 3.6" stroke="#eee" stroke-width="1.2" fill="none"/></svg><div class="t" style="right:600.5px;top:116.88px;font-size:5px;line-height:6.25px;color:#f4f4f4;font-weight:normal;transform:scaleX(0.86);transform-origin:100% 50%;text-shadow:0.4px 0.5px 0.5px #000;-webkit-text-stroke:0.12px #f4f4f4;">Default Value</div><div style="left:101.4px;top:116.8px;width:6.6px;height:6.5px;background:#b5663a;border:0.5px solid #666;box-sizing:border-box"></div><div style="left:64.9px;top:127.7px;width:34.5px;height:34.6px;background:#b1653c"></div><svg style="left:125.4px;top:116.6px" width="8" height="6"><path d="M0.7 3 A2.4 2.3 0 0 1 4.9 1.4 L6.8 3 L4.9 4.6 A2.4 2.3 0 0 1 0.7 3Z" fill="#f8f8f8" stroke="rgba(0,0,0,.55)" stroke-width=".7"/></svg><svg style="left:125.1px;top:127.6px" width="8" height="6"><circle cx="3" cy="3" r="1.9" stroke="#e01010" stroke-width="1.1" fill="none"/><path d="M5.2 1.7 L6.8 3 L5.2 4.3Z" fill="#e01010"/></svg><svg style="left:125.1px;top:138.4px" width="8" height="6"><circle cx="3" cy="3" r="1.9" stroke="#10d010" stroke-width="1.1" fill="none"/><path d="M5.2 1.7 L6.8 3 L5.2 4.3Z" fill="#10d010"/></svg><svg style="left:125.1px;top:149.3px" width="8" height="6"><circle cx="3" cy="3" r="1.9" stroke="#2020e0" stroke-width="1.1" fill="none"/><path d="M5.2 1.7 L6.8 3 L5.2 4.3Z" fill="#2020e0"/></svg><svg style="left:125.1px;top:160.4px" width="8" height="6"><circle cx="3" cy="3" r="1.9" stroke="#e8e8e8" stroke-width="1.1" fill="none"/><path d="M5.2 1.7 L6.8 3 L5.2 4.3Z" fill="#e8e8e8"/></svg><div style="left:181.7px;top:80.8px;width:39.5px;height:44.9px;background:#080808;border-radius:3px;box-shadow:0 1px 2px rgba(0,0,0,.5)"></div><div style="left:182.3px;top:81.4px;width:38.3px;height:43.5px;background:#1e1e1e;border-radius:2.5px"></div><div style="left:182.8px;top:81.9px;width:37.3px;height:8.1px;border-radius:2px 2px 0 0;background:linear-gradient(to bottom,rgba(255,255,255,.16),rgba(255,255,255,.04) 50%,rgba(0,0,0,.12)),linear-gradient(to right,#5c9a40 0%,#3c6a2a 68%,#2a2a2a 100%)"></div><div style="left:184.8px;top:83.2px;width:26.8px;height:5.2px;background:rgba(0,0,0,.32);border-radius:3px;box-shadow:inset 0 0 0 0.5px rgba(255,255,255,.12)"></div><div class="t" style="left:187.5px;top:83.49px;font-size:4.5px;line-height:5.62px;color:#f4f4f4;font-weight:normal;text-shadow:0.4px 0.5px 0.5px #000;-webkit-text-stroke:0.12px #f4f4f4;">Lerp</div><svg style="left:212.6px;top:83.2px" width="6" height="5"><path d="M1 1.4 L3 3.4 L5 1.4" stroke="#eee" stroke-width="1.2" fill="none"/></svg><svg style="left:185.1px;top:93.6px" width="8" height="6"><ellipse cx="3.5" cy="3" rx="2.9" ry="2.4" fill="#434343"/></svg><svg style="left:185.1px;top:104.4px" width="8" height="6"><ellipse cx="3.5" cy="3" rx="2.9" ry="2.4" fill="#434343"/></svg><svg style="left:185.1px;top:115.3px" width="8" height="6"><ellipse cx="3.5" cy="3" rx="2.9" ry="2.4" fill="#434343"/></svg><div class="t" style="left:192.5px;top:93.47px;font-size:5px;line-height:6.25px;color:#f4f4f4;font-weight:normal;transform:scaleX(0.86);transform-origin:0 50%;text-shadow:0.4px 0.5px 0.5px #000;-webkit-text-stroke:0.12px #f4f4f4;">A</div><div class="t" style="left:192.5px;top:104.28px;font-size:5px;line-height:6.25px;color:#f4f4f4;font-weight:normal;transform:scaleX(0.86);transform-origin:0 50%;text-shadow:0.4px 0.5px 0.5px #000;-webkit-text-stroke:0.12px #f4f4f4;">B</div><div class="t" style="left:192.5px;top:115.17px;font-size:5px;line-height:6.25px;color:#f4f4f4;font-weight:normal;transform:scaleX(0.86);transform-origin:0 50%;text-shadow:0.4px 0.5px 0.5px #000;-webkit-text-stroke:0.12px #f4f4f4;">Alpha</div><svg style="left:211.1px;top:93.8px" width="8" height="6"><path d="M0.7 3 A2.4 2.3 0 0 1 4.9 1.4 L6.8 3 L4.9 4.6 A2.4 2.3 0 0 1 0.7 3Z" fill="#f8f8f8" stroke="rgba(0,0,0,.55)" stroke-width=".7"/></svg><div style="left:256.4px;top:51.7px;width:61.2px;height:52px;background:#080808;border-radius:3px;box-shadow:0 1px 2px rgba(0,0,0,.5)"></div><div style="left:257px;top:52.3px;width:60px;height:50.6px;background:#1e1e1e;border-radius:2.5px"></div><div style="left:257.5px;top:52.8px;width:59px;height:14.9px;border-radius:2px 2px 0 0;background:linear-gradient(to bottom,rgba(255,255,255,.16),rgba(255,255,255,.04) 50%,rgba(0,0,0,.12)),linear-gradient(to right,#2a9fa6 0%,#17686e 68%,#2a2a2a 100%)"></div><div class="t" style="left:262px;top:54.43px;font-size:4.75px;line-height:5.94px;color:#f4f4f4;font-weight:normal;text-shadow:0.4px 0.5px 0.5px #000;-webkit-text-stroke:0.12px #f4f4f4;">Use Opacity Texture</div><div class="t" style="left:262px;top:62.01px;font-size:4.3px;line-height:5.38px;color:#90e0e6;font-weight:normal;">Switch Param (False)</div><svg style="left:259.8px;top:70.9px" width="8" height="6"><path d="M0.7 3 A2.4 2.3 0 0 1 4.9 1.4 L6.8 3 L4.9 4.6 A2.4 2.3 0 0 1 0.7 3Z" fill="#f8f8f8" stroke="rgba(0,0,0,.55)" stroke-width=".7"/></svg><div class="t" style="left:267px;top:70.58px;font-size:5px;line-height:6.25px;color:#f4f4f4;font-weight:normal;transform:scaleX(0.86);transform-origin:0 50%;text-shadow:0.4px 0.5px 0.5px #000;-webkit-text-stroke:0.12px #f4f4f4;">True</div><svg style="left:259.8px;top:82.1px" width="8" height="6"><path d="M0.7 3 A2.4 2.3 0 0 1 4.9 1.4 L6.8 3 L4.9 4.6 A2.4 2.3 0 0 1 0.7 3Z" fill="#f8f8f8" stroke="rgba(0,0,0,.55)" stroke-width=".7"/></svg><div class="t" style="left:267px;top:81.78px;font-size:5px;line-height:6.25px;color:#f4f4f4;font-weight:normal;transform:scaleX(0.86);transform-origin:0 50%;text-shadow:0.4px 0.5px 0.5px #000;-webkit-text-stroke:0.12px #f4f4f4;">False</div><div class="t" style="left:267.5px;top:93.17px;font-size:5px;line-height:6.25px;color:#f4f4f4;font-weight:normal;transform:scaleX(0.86);transform-origin:0 50%;text-shadow:0.4px 0.5px 0.5px #000;-webkit-text-stroke:0.12px #f4f4f4;">Default Value</div><div style="left:296.5px;top:93px;width:4.5px;height:6.5px;background:#080808;border:0.5px solid #333;box-sizing:border-box"></div><svg style="left:307.4px;top:70.9px" width="8" height="6"><path d="M0.7 3 A2.4 2.3 0 0 1 4.9 1.4 L6.8 3 L4.9 4.6 A2.4 2.3 0 0 1 0.7 3Z" fill="#f8f8f8" stroke="rgba(0,0,0,.55)" stroke-width=".7"/></svg><div style="left:58px;top:206.4px;width:74.9px;height:88.8px;background:#080808;border-radius:3px;box-shadow:0 1px 2px rgba(0,0,0,.5)"></div><div style="left:58.6px;top:207px;width:73.7px;height:87.4px;background:#1e1e1e;border-radius:2.5px"></div><div style="left:59.1px;top:207.5px;width:72.7px;height:13.2px;border-radius:2px 2px 0 0;background:linear-gradient(to bottom,rgba(255,255,255,.16),rgba(255,255,255,.04) 50%,rgba(0,0,0,.12)),linear-gradient(to right,#2f8cc6 0%,#1d5b88 68%,#2a2a2a 100%)"></div><div class="t" style="left:63.6px;top:209.13px;font-size:4.75px;line-height:5.94px;color:#f4f4f4;font-weight:normal;text-shadow:0.4px 0.5px 0.5px #000;-webkit-text-stroke:0.12px #f4f4f4;">Opacity Texture</div><div class="t" style="left:63.6px;top:215.01px;font-size:4.3px;line-height:5.38px;color:#7cc0ee;font-weight:normal;">Param2D</div><svg style="left:124.3px;top:210.8px" width="6" height="5"><path d="M1 3.6 L3 1.6 L5 3.6" stroke="#eee" stroke-width="1.2" fill="none"/></svg><svg style="left:61.1px;top:226px" width="4" height="4"><circle cx="2" cy="2" r="1.1" fill="#0c0c0c"/></svg><div class="t" style="left:68.8px;top:224.88px;font-size:5px;line-height:6.25px;color:#f4f4f4;font-weight:normal;transform:scaleX(0.86);transform-origin:0 50%;text-shadow:0.4px 0.5px 0.5px #000;-webkit-text-stroke:0.12px #f4f4f4;">UVs</div><div style="left:79.1px;top:224.4px;width:6.6px;height:7.2px;border:0.7px solid #b8b8b8;border-radius:1px;box-sizing:border-box;background:#151515"></div><div class="t" style="left:-17.6px;width:200px;text-align:center;top:224.85px;font-size:5.2px;line-height:6.5px;color:#f0f0f0;font-weight:normal;transform:scaleX(0.92);transform-origin:50% 50%;-webkit-text-stroke:0.15px #f0f0f0;">0</div><svg style="left:61.1px;top:238.7px" width="4" height="4"><circle cx="2" cy="2" r="1.1" fill="#0c0c0c"/></svg><div class="t" style="left:68.8px;top:237.57px;font-size:5px;line-height:6.25px;color:#f4f4f4;font-weight:normal;transform:scaleX(0.86);transform-origin:0 50%;text-shadow:0.4px 0.5px 0.5px #000;-webkit-text-stroke:0.12px #f4f4f4;">Apply View MipBias</div><svg style="left:60.6px;top:247.3px" width="34.4" height="34.3"><filter id="fn1" x="0" y="0" width="100%" height="100%" color-interpolation-filters="sRGB"><feTurbulence type="fractalNoise" baseFrequency="0.28" numOctaves="3" seed="7"/><feColorMatrix type="matrix" values="0.9 0 0 0 0.38  0.9 0 0 0 0.38  0.9 0 0 0 0.38  0 0 0 0 1"/></filter><rect width="100%" height="100%" filter="url(#fn1)"/></svg><div class="t" style="right:579.5px;top:224.88px;font-size:5px;line-height:6.25px;color:#f4f4f4;font-weight:normal;transform:scaleX(0.86);transform-origin:100% 50%;text-shadow:0.4px 0.5px 0.5px #000;-webkit-text-stroke:0.12px #f4f4f4;">RGB</div><svg style="left:122.5px;top:225.2px" width="8" height="6"><path d="M0.7 3 A2.4 2.3 0 0 1 4.9 1.4 L6.8 3 L4.9 4.6 A2.4 2.3 0 0 1 0.7 3Z" fill="#f8f8f8" stroke="rgba(0,0,0,.55)" stroke-width=".7"/></svg><div class="t" style="right:579.5px;top:235.28px;font-size:5px;line-height:6.25px;color:#f4f4f4;font-weight:normal;transform:scaleX(0.86);transform-origin:100% 50%;text-shadow:0.4px 0.5px 0.5px #000;-webkit-text-stroke:0.12px #f4f4f4;">R</div><svg style="left:122.2px;top:235.4px" width="8" height="6"><circle cx="3" cy="3" r="1.9" stroke="#d01010" stroke-width="1.1" fill="none"/><path d="M5.2 1.7 L6.8 3 L5.2 4.3Z" fill="#d01010"/></svg><div class="t" style="right:579.5px;top:246.18px;font-size:5px;line-height:6.25px;color:#f4f4f4;font-weight:normal;transform:scaleX(0.86);transform-origin:100% 50%;text-shadow:0.4px 0.5px 0.5px #000;-webkit-text-stroke:0.12px #f4f4f4;">G</div><svg style="left:122.2px;top:246.3px" width="8" height="6"><circle cx="3" cy="3" r="1.9" stroke="#10c010" stroke-width="1.1" fill="none"/><path d="M5.2 1.7 L6.8 3 L5.2 4.3Z" fill="#10c010"/></svg><div class="t" style="right:579.5px;top:256.98px;font-size:5px;line-height:6.25px;color:#f4f4f4;font-weight:normal;transform:scaleX(0.86);transform-origin:100% 50%;text-shadow:0.4px 0.5px 0.5px #000;-webkit-text-stroke:0.12px #f4f4f4;">B</div><svg style="left:122.2px;top:257.1px" width="8" height="6"><circle cx="3" cy="3" r="1.9" stroke="#2020d8" stroke-width="1.1" fill="none"/><path d="M5.2 1.7 L6.8 3 L5.2 4.3Z" fill="#2020d8"/></svg><div class="t" style="right:579.5px;top:268.18px;font-size:5px;line-height:6.25px;color:#f4f4f4;font-weight:normal;transform:scaleX(0.86);transform-origin:100% 50%;text-shadow:0.4px 0.5px 0.5px #000;-webkit-text-stroke:0.12px #f4f4f4;">A</div><svg style="left:122.2px;top:268.3px" width="8" height="6"><circle cx="3" cy="3" r="1.9" stroke="#e0e0e0" stroke-width="1.1" fill="none"/><path d="M5.2 1.7 L6.8 3 L5.2 4.3Z" fill="#e0e0e0"/></svg><div class="t" style="right:579.5px;top:279.27px;font-size:5px;line-height:6.25px;color:#f4f4f4;font-weight:normal;transform:scaleX(0.86);transform-origin:100% 50%;text-shadow:0.4px 0.5px 0.5px #000;-webkit-text-stroke:0.12px #f4f4f4;">RGBA</div><svg style="left:122.2px;top:279.4px" width="8" height="6"><circle cx="3" cy="3" r="1.9" stroke="#e0e0e0" stroke-width="1.1" fill="none"/><path d="M5.2 1.7 L6.8 3 L5.2 4.3Z" fill="#e0e0e0"/></svg><svg style="left:92.95px;top:288.8px" width="6" height="5"><path d="M1 1.4 L3 3.4 L5 1.4" stroke="#eee" stroke-width="1.2" fill="none"/></svg><div style="left:141.7px;top:206.7px;width:70.3px;height:72.5px;background:#080808;border-radius:3px;box-shadow:0 1px 2px rgba(0,0,0,.5)"></div><div style="left:142.3px;top:207.3px;width:69.1px;height:71.1px;background:#1e1e1e;border-radius:2.5px"></div><div style="left:142.8px;top:207.8px;width:68.1px;height:13.8px;border-radius:2px 2px 0 0;background:linear-gradient(to bottom,rgba(255,255,255,.16),rgba(255,255,255,.04) 50%,rgba(0,0,0,.12)),linear-gradient(to right,#2e7378 0%,#1c4a4e 68%,#2a2a2a 100%)"></div><div class="t" style="left:147.3px;top:209.43px;font-size:4.75px;line-height:5.94px;color:#f4f4f4;font-weight:normal;text-shadow:0.4px 0.5px 0.5px #000;-webkit-text-stroke:0.12px #f4f4f4;">Opacity Texture Channel</div><div class="t" style="left:147.3px;top:215.91px;font-size:4.3px;line-height:5.38px;color:#98b088;font-weight:normal;">Mask Param</div><svg style="left:203.4px;top:211.1px" width="6" height="5"><path d="M1 3.6 L3 1.6 L5 3.6" stroke="#eee" stroke-width="1.2" fill="none"/></svg><svg style="left:145.4px;top:225.2px" width="8" height="6"><path d="M0.7 3 A2.4 2.3 0 0 1 4.9 1.4 L6.8 3 L4.9 4.6 A2.4 2.3 0 0 1 0.7 3Z" fill="#f8f8f8" stroke="rgba(0,0,0,.55)" stroke-width=".7"/></svg><svg style="left:201.7px;top:225.2px" width="8" height="6"><path d="M0.7 3 A2.4 2.3 0 0 1 4.9 1.4 L6.8 3 L4.9 4.6 A2.4 2.3 0 0 1 0.7 3Z" fill="#f8f8f8" stroke="rgba(0,0,0,.55)" stroke-width=".7"/></svg><svg style="left:144.3px;top:235.9px" width="34.3" height="34.2"><filter id="fn2" x="0" y="0" width="100%" height="100%" color-interpolation-filters="sRGB"><feTurbulence type="fractalNoise" baseFrequency="0.25" numOctaves="3" seed="10"/><feColorMatrix type="matrix" values="0.9 0 0 0 0.42  0 0 0 0 0.0  0 0 0 0 0.0  0 0 0 0 1"/></filter><rect width="100%" height="100%" filter="url(#fn2)"/></svg><svg style="left:174px;top:272.5px" width="6" height="5"><path d="M1 1.4 L3 3.4 L5 1.4" stroke="#eee" stroke-width="1.2" fill="none"/></svg><div style="left:148px;top:286.7px;width:64.9px;height:30px;background:#080808;border-radius:3px;box-shadow:0 1px 2px rgba(0,0,0,.5)"></div><div style="left:148.6px;top:287.3px;width:63.7px;height:28.6px;background:#1e1e1e;border-radius:2.5px"></div><div style="left:149.1px;top:287.8px;width:62.7px;height:12.9px;border-radius:2px 2px 0 0;background:linear-gradient(to bottom,rgba(255,255,255,.16),rgba(255,255,255,.04) 50%,rgba(0,0,0,.12)),linear-gradient(to right,#5c9a40 0%,#3c6a2a 68%,#2a2a2a 100%)"></div><div class="t" style="left:153.6px;top:289.43px;font-size:4.75px;line-height:5.94px;color:#f4f4f4;font-weight:normal;text-shadow:0.4px 0.5px 0.5px #000;-webkit-text-stroke:0.12px #f4f4f4;">Opacity Contrast</div><div class="t" style="left:153.6px;top:295.01px;font-size:4.3px;line-height:5.38px;color:#a8d888;font-weight:normal;">Param (1)</div><svg style="left:204.3px;top:291.1px" width="6" height="5"><path d="M1 1.4 L3 3.4 L5 1.4" stroke="#eee" stroke-width="1.2" fill="none"/></svg><div class="t" style="right:515.5px;top:305.57px;font-size:5px;line-height:6.25px;color:#f4f4f4;font-weight:normal;transform:scaleX(0.86);transform-origin:100% 50%;text-shadow:0.4px 0.5px 0.5px #000;-webkit-text-stroke:0.12px #f4f4f4;">Default Value</div><div style="left:186.3px;top:305.1px;width:11.4px;height:7.2px;border:0.7px solid #b8b8b8;border-radius:1px;box-sizing:border-box;background:#151515"></div><div class="t" style="left:92px;width:200px;text-align:center;top:305.55px;font-size:5.2px;line-height:6.5px;color:#f0f0f0;font-weight:normal;transform:scaleX(0.92);transform-origin:50% 50%;-webkit-text-stroke:0.15px #f0f0f0;">1.0</div><svg style="left:202.5px;top:305.9px" width="8" height="6"><path d="M0.7 3 A2.4 2.3 0 0 1 4.9 1.4 L6.8 3 L4.9 4.6 A2.4 2.3 0 0 1 0.7 3Z" fill="#f8f8f8" stroke="rgba(0,0,0,.55)" stroke-width=".7"/></svg><div style="left:227.7px;top:207px;width:70.2px;height:29.5px;background:#080808;border-radius:3px;box-shadow:0 1px 2px rgba(0,0,0,.5)"></div><div style="left:228.3px;top:207.6px;width:69px;height:28.1px;background:#1e1e1e;border-radius:2.5px"></div><div style="left:228.8px;top:208.1px;width:68px;height:14.3px;border-radius:2px 2px 0 0;background:linear-gradient(to bottom,rgba(255,255,255,.16),rgba(255,255,255,.04) 50%,rgba(0,0,0,.12)),linear-gradient(to right,#5c9a40 0%,#3c6a2a 68%,#2a2a2a 100%)"></div><div class="t" style="left:233.3px;top:209.73px;font-size:4.75px;line-height:5.94px;color:#f4f4f4;font-weight:normal;text-shadow:0.4px 0.5px 0.5px #000;-webkit-text-stroke:0.12px #f4f4f4;">Opacity Texture Amount</div><div class="t" style="left:233.3px;top:216.71px;font-size:4.3px;line-height:5.38px;color:#a8d888;font-weight:normal;">Param (0.5)</div><svg style="left:289.3px;top:211.4px" width="6" height="5"><path d="M1 1.4 L3 3.4 L5 1.4" stroke="#eee" stroke-width="1.2" fill="none"/></svg><div class="t" style="right:435.5px;top:226.18px;font-size:5px;line-height:6.25px;color:#f4f4f4;font-weight:normal;transform:scaleX(0.86);transform-origin:100% 50%;text-shadow:0.4px 0.5px 0.5px #000;-webkit-text-stroke:0.12px #f4f4f4;">Default Value</div><div style="left:266px;top:225.7px;width:11.9px;height:7.2px;border:0.7px solid #b8b8b8;border-radius:1px;box-sizing:border-box;background:#151515"></div><div class="t" style="left:171.95px;width:200px;text-align:center;top:226.15px;font-size:5.2px;line-height:6.5px;color:#f0f0f0;font-weight:normal;transform:scaleX(0.92);transform-origin:50% 50%;-webkit-text-stroke:0.15px #f0f0f0;">0.5</div><svg style="left:286.8px;top:226.5px" width="8" height="6"><path d="M0.7 3 A2.4 2.3 0 0 1 4.9 1.4 L6.8 3 L4.9 4.6 A2.4 2.3 0 0 1 0.7 3Z" fill="#f8f8f8" stroke="rgba(0,0,0,.55)" stroke-width=".7"/></svg><div style="left:227.7px;top:247px;width:37.1px;height:33.4px;background:#080808;border-radius:3px;box-shadow:0 1px 2px rgba(0,0,0,.5)"></div><div style="left:228.3px;top:247.6px;width:35.9px;height:32px;background:#1e1e1e;border-radius:2.5px"></div><div style="left:228.8px;top:248.1px;width:34.9px;height:7.5px;border-radius:2px 2px 0 0;background:linear-gradient(to bottom,rgba(255,255,255,.16),rgba(255,255,255,.04) 50%,rgba(0,0,0,.12)),linear-gradient(to right,#5c9a40 0%,#3c6a2a 68%,#2a2a2a 100%)"></div><div style="left:230.8px;top:249.4px;width:24.4px;height:4.6px;background:rgba(0,0,0,.32);border-radius:3px;box-shadow:inset 0 0 0 0.5px rgba(255,255,255,.12)"></div><div class="t" style="left:233.5px;top:249.39px;font-size:4.5px;line-height:5.62px;color:#f4f4f4;font-weight:normal;text-shadow:0.4px 0.5px 0.5px #000;-webkit-text-stroke:0.12px #f4f4f4;">Power</div><svg style="left:256.2px;top:249.1px" width="6" height="5"><path d="M1 1.4 L3 3.4 L5 1.4" stroke="#eee" stroke-width="1.2" fill="none"/></svg><svg style="left:230.8px;top:260.1px" width="8" height="6"><path d="M0.7 3 A2.4 2.3 0 0 1 4.9 1.4 L6.8 3 L4.9 4.6 A2.4 2.3 0 0 1 0.7 3Z" fill="#f8f8f8" stroke="rgba(0,0,0,.55)" stroke-width=".7"/></svg><div class="t" style="left:238px;top:259.77px;font-size:5px;line-height:6.25px;color:#f4f4f4;font-weight:normal;transform:scaleX(0.86);transform-origin:0 50%;text-shadow:0.4px 0.5px 0.5px #000;-webkit-text-stroke:0.12px #f4f4f4;">Base</div><svg style="left:254.1px;top:260.1px" width="8" height="6"><path d="M0.7 3 A2.4 2.3 0 0 1 4.9 1.4 L6.8 3 L4.9 4.6 A2.4 2.3 0 0 1 0.7 3Z" fill="#f8f8f8" stroke="rgba(0,0,0,.55)" stroke-width=".7"/></svg><svg style="left:230.5px;top:270.9px" width="8" height="6"><ellipse cx="3.5" cy="3" rx="2.9" ry="2.4" fill="#434343"/></svg><div class="t" style="left:238px;top:270.77px;font-size:5px;line-height:6.25px;color:#f4f4f4;font-weight:normal;transform:scaleX(0.86);transform-origin:0 50%;text-shadow:0.4px 0.5px 0.5px #000;-webkit-text-stroke:0.12px #f4f4f4;">Exp</div><div style="left:307.7px;top:235.1px;width:36.6px;height:33.8px;background:#080808;border-radius:3px;box-shadow:0 1px 2px rgba(0,0,0,.5)"></div><div style="left:308.3px;top:235.7px;width:35.4px;height:32.4px;background:#1e1e1e;border-radius:2.5px"></div><div style="left:308.8px;top:236.2px;width:34.4px;height:7.9px;border-radius:2px 2px 0 0;background:linear-gradient(to bottom,rgba(255,255,255,.16),rgba(255,255,255,.04) 50%,rgba(0,0,0,.12)),linear-gradient(to right,#5c9a40 0%,#3c6a2a 68%,#2a2a2a 100%)"></div><div style="left:310.8px;top:237.5px;width:23.9px;height:5px;background:rgba(0,0,0,.32);border-radius:3px;box-shadow:inset 0 0 0 0.5px rgba(255,255,255,.12)"></div><div class="t" style="left:313.5px;top:237.69px;font-size:4.5px;line-height:5.62px;color:#f4f4f4;font-weight:normal;text-shadow:0.4px 0.5px 0.5px #000;-webkit-text-stroke:0.12px #f4f4f4;">Multiply</div><svg style="left:335.7px;top:237.4px" width="6" height="5"><path d="M1 1.4 L3 3.4 L5 1.4" stroke="#eee" stroke-width="1.2" fill="none"/></svg><svg style="left:310.5px;top:248px" width="8" height="6"><ellipse cx="3.5" cy="3" rx="2.9" ry="2.4" fill="#434343"/></svg><div class="t" style="left:318px;top:247.88px;font-size:5px;line-height:6.25px;color:#f4f4f4;font-weight:normal;transform:scaleX(0.86);transform-origin:0 50%;text-shadow:0.4px 0.5px 0.5px #000;-webkit-text-stroke:0.12px #f4f4f4;">A</div><svg style="left:310.5px;top:259.4px" width="8" height="6"><ellipse cx="3.5" cy="3" rx="2.9" ry="2.4" fill="#434343"/></svg><div class="t" style="left:318px;top:259.27px;font-size:5px;line-height:6.25px;color:#f4f4f4;font-weight:normal;transform:scaleX(0.86);transform-origin:0 50%;text-shadow:0.4px 0.5px 0.5px #000;-webkit-text-stroke:0.12px #f4f4f4;">B</div><svg style="left:333.7px;top:248.2px" width="8" height="6"><path d="M0.7 3 A2.4 2.3 0 0 1 4.9 1.4 L6.8 3 L4.9 4.6 A2.4 2.3 0 0 1 0.7 3Z" fill="#f8f8f8" stroke="rgba(0,0,0,.55)" stroke-width=".7"/></svg><div style="left:274.1px;top:274.9px;width:64px;height:30.6px;background:#080808;border-radius:3px;box-shadow:0 1px 2px rgba(0,0,0,.5)"></div><div style="left:274.7px;top:275.5px;width:62.8px;height:29.2px;background:#1e1e1e;border-radius:2.5px"></div><div style="left:275.2px;top:276px;width:61.8px;height:14.5px;border-radius:2px 2px 0 0;background:linear-gradient(to bottom,rgba(255,255,255,.16),rgba(255,255,255,.04) 50%,rgba(0,0,0,.12)),linear-gradient(to right,#5c9a40 0%,#3c6a2a 68%,#2a2a2a 100%)"></div><div class="t" style="left:279.7px;top:277.63px;font-size:4.75px;line-height:5.94px;color:#f4f4f4;font-weight:normal;text-shadow:0.4px 0.5px 0.5px #000;-webkit-text-stroke:0.12px #f4f4f4;">Opacity</div><div class="t" style="left:279.7px;top:284.81px;font-size:4.3px;line-height:5.38px;color:#a8d888;font-weight:normal;">Param (0.5)</div><svg style="left:329.5px;top:279.3px" width="6" height="5"><path d="M1 1.4 L3 3.4 L5 1.4" stroke="#eee" stroke-width="1.2" fill="none"/></svg><div class="t" style="right:389.5px;top:294.77px;font-size:5px;line-height:6.25px;color:#f4f4f4;font-weight:normal;transform:scaleX(0.86);transform-origin:100% 50%;text-shadow:0.4px 0.5px 0.5px #000;-webkit-text-stroke:0.12px #f4f4f4;">Default Value</div><div style="left:312.4px;top:294.3px;width:11.2px;height:7.2px;border:0.7px solid #b8b8b8;border-radius:1px;box-sizing:border-box;background:#151515"></div><div class="t" style="left:218px;width:200px;text-align:center;top:294.75px;font-size:5.2px;line-height:6.5px;color:#f0f0f0;font-weight:normal;transform:scaleX(0.92);transform-origin:50% 50%;-webkit-text-stroke:0.15px #f0f0f0;">0.5</div><svg style="left:327.9px;top:295.1px" width="8" height="6"><path d="M0.7 3 A2.4 2.3 0 0 1 4.9 1.4 L6.8 3 L4.9 4.6 A2.4 2.3 0 0 1 0.7 3Z" fill="#f8f8f8" stroke="rgba(0,0,0,.55)" stroke-width=".7"/></svg><div style="left:359.1px;top:257.6px;width:61.4px;height:51.4px;background:#080808;border-radius:3px;box-shadow:0 1px 2px rgba(0,0,0,.5)"></div><div style="left:359.7px;top:258.2px;width:60.2px;height:50px;background:#1e1e1e;border-radius:2.5px"></div><div style="left:360.2px;top:258.7px;width:59.2px;height:14.8px;border-radius:2px 2px 0 0;background:linear-gradient(to bottom,rgba(255,255,255,.16),rgba(255,255,255,.04) 50%,rgba(0,0,0,.12)),linear-gradient(to right,#2a9fa6 0%,#17686e 68%,#2a2a2a 100%)"></div><div class="t" style="left:364.7px;top:260.33px;font-size:4.75px;line-height:5.94px;color:#f4f4f4;font-weight:normal;text-shadow:0.4px 0.5px 0.5px #000;-webkit-text-stroke:0.12px #f4f4f4;">Use Opacity Texture</div><div class="t" style="left:364.7px;top:267.81px;font-size:4.3px;line-height:5.38px;color:#90e0e6;font-weight:normal;">Switch Param (False)</div><svg style="left:363.1px;top:276.8px" width="8" height="6"><path d="M0.7 3 A2.4 2.3 0 0 1 4.9 1.4 L6.8 3 L4.9 4.6 A2.4 2.3 0 0 1 0.7 3Z" fill="#f8f8f8" stroke="rgba(0,0,0,.55)" stroke-width=".7"/></svg><div class="t" style="left:370.3px;top:276.48px;font-size:5px;line-height:6.25px;color:#f4f4f4;font-weight:normal;transform:scaleX(0.86);transform-origin:0 50%;text-shadow:0.4px 0.5px 0.5px #000;-webkit-text-stroke:0.12px #f4f4f4;">True</div><svg style="left:363.1px;top:287.9px" width="8" height="6"><path d="M0.7 3 A2.4 2.3 0 0 1 4.9 1.4 L6.8 3 L4.9 4.6 A2.4 2.3 0 0 1 0.7 3Z" fill="#f8f8f8" stroke="rgba(0,0,0,.55)" stroke-width=".7"/></svg><div class="t" style="left:370.3px;top:287.57px;font-size:5px;line-height:6.25px;color:#f4f4f4;font-weight:normal;transform:scaleX(0.86);transform-origin:0 50%;text-shadow:0.4px 0.5px 0.5px #000;-webkit-text-stroke:0.12px #f4f4f4;">False</div><div class="t" style="left:370.2px;top:298.77px;font-size:5px;line-height:6.25px;color:#f4f4f4;font-weight:normal;transform:scaleX(0.86);transform-origin:0 50%;text-shadow:0.4px 0.5px 0.5px #000;-webkit-text-stroke:0.12px #f4f4f4;">Default Value</div><div style="left:399.2px;top:298.6px;width:4.5px;height:6.4px;background:#080808;border:0.5px solid #333;box-sizing:border-box"></div><svg style="left:409.9px;top:276.8px" width="8" height="6"><path d="M0.7 3 A2.4 2.3 0 0 1 4.9 1.4 L6.8 3 L4.9 4.6 A2.4 2.3 0 0 1 0.7 3Z" fill="#f8f8f8" stroke="rgba(0,0,0,.55)" stroke-width=".7"/></svg><div style="left:9.4px;top:426.5px;width:75.5px;height:89.4px;background:#080808;border-radius:3px;box-shadow:0 1px 2px rgba(0,0,0,.5)"></div><div style="left:10px;top:427.1px;width:74.3px;height:88px;background:#1e1e1e;border-radius:2.5px"></div><div style="left:10.5px;top:427.6px;width:73.3px;height:13.8px;border-radius:2px 2px 0 0;background:linear-gradient(to bottom,rgba(255,255,255,.16),rgba(255,255,255,.04) 50%,rgba(0,0,0,.12)),linear-gradient(to right,#2f8cc6 0%,#1d5b88 68%,#2a2a2a 100%)"></div><div class="t" style="left:15px;top:429.23px;font-size:4.75px;line-height:5.94px;color:#f4f4f4;font-weight:normal;text-shadow:0.4px 0.5px 0.5px #000;-webkit-text-stroke:0.12px #f4f4f4;">Roughness Texture</div><div class="t" style="left:15px;top:435.71px;font-size:4.3px;line-height:5.38px;color:#7cc0ee;font-weight:normal;">Param2D</div><svg style="left:76.3px;top:430.9px" width="6" height="5"><path d="M1 3.6 L3 1.6 L5 3.6" stroke="#eee" stroke-width="1.2" fill="none"/></svg><svg style="left:12.5px;top:446.6px" width="4" height="4"><circle cx="2" cy="2" r="1.1" fill="#0c0c0c"/></svg><div class="t" style="left:20.2px;top:445.48px;font-size:5px;line-height:6.25px;color:#f4f4f4;font-weight:normal;transform:scaleX(0.86);transform-origin:0 50%;text-shadow:0.4px 0.5px 0.5px #000;-webkit-text-stroke:0.12px #f4f4f4;">UVs</div><div style="left:30.5px;top:445px;width:6.6px;height:7.2px;border:0.7px solid #b8b8b8;border-radius:1px;box-sizing:border-box;background:#151515"></div><div class="t" style="left:-66.2px;width:200px;text-align:center;top:445.45px;font-size:5.2px;line-height:6.5px;color:#f0f0f0;font-weight:normal;transform:scaleX(0.92);transform-origin:50% 50%;-webkit-text-stroke:0.15px #f0f0f0;">0</div><svg style="left:12.5px;top:458.9px" width="4" height="4"><circle cx="2" cy="2" r="1.1" fill="#0c0c0c"/></svg><div class="t" style="left:20.2px;top:457.77px;font-size:5px;line-height:6.25px;color:#f4f4f4;font-weight:normal;transform:scaleX(0.86);transform-origin:0 50%;text-shadow:0.4px 0.5px 0.5px #000;-webkit-text-stroke:0.12px #f4f4f4;">Apply View MipBias</div><svg style="left:11.4px;top:467px" width="35.2" height="35"><filter id="fn3" x="0" y="0" width="100%" height="100%" color-interpolation-filters="sRGB"><feTurbulence type="fractalNoise" baseFrequency="0.28" numOctaves="3" seed="21"/><feColorMatrix type="matrix" values="0.9 0 0 0 0.38  0.9 0 0 0 0.38  0.9 0 0 0 0.38  0 0 0 0 1"/></filter><rect width="100%" height="100%" filter="url(#fn3)"/></svg><div class="t" style="right:628.1px;top:445.48px;font-size:5px;line-height:6.25px;color:#f4f4f4;font-weight:normal;transform:scaleX(0.86);transform-origin:100% 50%;text-shadow:0.4px 0.5px 0.5px #000;-webkit-text-stroke:0.12px #f4f4f4;">RGB</div><svg style="left:73.9px;top:445.8px" width="8" height="6"><path d="M0.7 3 A2.4 2.3 0 0 1 4.9 1.4 L6.8 3 L4.9 4.6 A2.4 2.3 0 0 1 0.7 3Z" fill="#f8f8f8" stroke="rgba(0,0,0,.55)" stroke-width=".7"/></svg><div class="t" style="right:628.1px;top:455.48px;font-size:5px;line-height:6.25px;color:#f4f4f4;font-weight:normal;transform:scaleX(0.86);transform-origin:100% 50%;text-shadow:0.4px 0.5px 0.5px #000;-webkit-text-stroke:0.12px #f4f4f4;">R</div><svg style="left:73.6px;top:455.6px" width="8" height="6"><circle cx="3" cy="3" r="1.9" stroke="#d01010" stroke-width="1.1" fill="none"/><path d="M5.2 1.7 L6.8 3 L5.2 4.3Z" fill="#d01010"/></svg><div class="t" style="right:628.1px;top:466.88px;font-size:5px;line-height:6.25px;color:#f4f4f4;font-weight:normal;transform:scaleX(0.86);transform-origin:100% 50%;text-shadow:0.4px 0.5px 0.5px #000;-webkit-text-stroke:0.12px #f4f4f4;">G</div><svg style="left:73.6px;top:467px" width="8" height="6"><circle cx="3" cy="3" r="1.9" stroke="#10c010" stroke-width="1.1" fill="none"/><path d="M5.2 1.7 L6.8 3 L5.2 4.3Z" fill="#10c010"/></svg><div class="t" style="right:628.1px;top:477.77px;font-size:5px;line-height:6.25px;color:#f4f4f4;font-weight:normal;transform:scaleX(0.86);transform-origin:100% 50%;text-shadow:0.4px 0.5px 0.5px #000;-webkit-text-stroke:0.12px #f4f4f4;">B</div><svg style="left:73.6px;top:477.9px" width="8" height="6"><circle cx="3" cy="3" r="1.9" stroke="#2020d8" stroke-width="1.1" fill="none"/><path d="M5.2 1.7 L6.8 3 L5.2 4.3Z" fill="#2020d8"/></svg><div class="t" style="right:628.1px;top:488.88px;font-size:5px;line-height:6.25px;color:#f4f4f4;font-weight:normal;transform:scaleX(0.86);transform-origin:100% 50%;text-shadow:0.4px 0.5px 0.5px #000;-webkit-text-stroke:0.12px #f4f4f4;">A</div><svg style="left:73.6px;top:489px" width="8" height="6"><circle cx="3" cy="3" r="1.9" stroke="#e0e0e0" stroke-width="1.1" fill="none"/><path d="M5.2 1.7 L6.8 3 L5.2 4.3Z" fill="#e0e0e0"/></svg><div class="t" style="right:628.1px;top:499.77px;font-size:5px;line-height:6.25px;color:#f4f4f4;font-weight:normal;transform:scaleX(0.86);transform-origin:100% 50%;text-shadow:0.4px 0.5px 0.5px #000;-webkit-text-stroke:0.12px #f4f4f4;">RGBA</div><svg style="left:73.6px;top:499.9px" width="8" height="6"><circle cx="3" cy="3" r="1.9" stroke="#e0e0e0" stroke-width="1.1" fill="none"/><path d="M5.2 1.7 L6.8 3 L5.2 4.3Z" fill="#e0e0e0"/></svg><svg style="left:44.65px;top:508.9px" width="6" height="5"><path d="M1 1.4 L3 3.4 L5 1.4" stroke="#eee" stroke-width="1.2" fill="none"/></svg><div style="left:95.1px;top:426.5px;width:78.4px;height:72.3px;background:#080808;border-radius:3px;box-shadow:0 1px 2px rgba(0,0,0,.5)"></div><div style="left:95.7px;top:427.1px;width:77.2px;height:70.9px;background:#1e1e1e;border-radius:2.5px"></div><div style="left:96.2px;top:427.6px;width:76.2px;height:13.8px;border-radius:2px 2px 0 0;background:linear-gradient(to bottom,rgba(255,255,255,.16),rgba(255,255,255,.04) 50%,rgba(0,0,0,.12)),linear-gradient(to right,#2e7378 0%,#1c4a4e 68%,#2a2a2a 100%)"></div><div class="t" style="left:100.7px;top:429.23px;font-size:4.75px;line-height:5.94px;color:#f4f4f4;font-weight:normal;text-shadow:0.4px 0.5px 0.5px #000;-webkit-text-stroke:0.12px #f4f4f4;">Roughness Texture Channel</div><div class="t" style="left:100.7px;top:435.71px;font-size:4.3px;line-height:5.38px;color:#98b088;font-weight:normal;">Mask Param</div><svg style="left:164.9px;top:430.9px" width="6" height="5"><path d="M1 3.6 L3 1.6 L5 3.6" stroke="#eee" stroke-width="1.2" fill="none"/></svg><svg style="left:98.2px;top:445.8px" width="8" height="6"><path d="M0.7 3 A2.4 2.3 0 0 1 4.9 1.4 L6.8 3 L4.9 4.6 A2.4 2.3 0 0 1 0.7 3Z" fill="#f8f8f8" stroke="rgba(0,0,0,.55)" stroke-width=".7"/></svg><svg style="left:162.5px;top:445.8px" width="8" height="6"><path d="M0.7 3 A2.4 2.3 0 0 1 4.9 1.4 L6.8 3 L4.9 4.6 A2.4 2.3 0 0 1 0.7 3Z" fill="#f8f8f8" stroke="rgba(0,0,0,.55)" stroke-width=".7"/></svg><svg style="left:97.1px;top:455.7px" width="34.3" height="34.3"><filter id="fn4" x="0" y="0" width="100%" height="100%" color-interpolation-filters="sRGB"><feTurbulence type="fractalNoise" baseFrequency="0.25" numOctaves="3" seed="20"/><feColorMatrix type="matrix" values="0.9 0 0 0 0.42  0 0 0 0 0.0  0 0 0 0 0.0  0 0 0 0 1"/></filter><rect width="100%" height="100%" filter="url(#fn4)"/></svg><svg style="left:131px;top:491.8px" width="6" height="5"><path d="M1 1.4 L3 3.4 L5 1.4" stroke="#eee" stroke-width="1.2" fill="none"/></svg><div style="left:100.8px;top:506.5px;width:64.9px;height:30.6px;background:#080808;border-radius:3px;box-shadow:0 1px 2px rgba(0,0,0,.5)"></div><div style="left:101.4px;top:507.1px;width:63.7px;height:29.2px;background:#1e1e1e;border-radius:2.5px"></div><div style="left:101.9px;top:507.6px;width:62.7px;height:13.8px;border-radius:2px 2px 0 0;background:linear-gradient(to bottom,rgba(255,255,255,.16),rgba(255,255,255,.04) 50%,rgba(0,0,0,.12)),linear-gradient(to right,#5c9a40 0%,#3c6a2a 68%,#2a2a2a 100%)"></div><div class="t" style="left:106.4px;top:509.23px;font-size:4.75px;line-height:5.94px;color:#f4f4f4;font-weight:normal;text-shadow:0.4px 0.5px 0.5px #000;-webkit-text-stroke:0.12px #f4f4f4;">Roughness Contrast</div><div class="t" style="left:106.4px;top:515.71px;font-size:4.3px;line-height:5.38px;color:#a8d888;font-weight:normal;">Param (1)</div><svg style="left:157.1px;top:510.9px" width="6" height="5"><path d="M1 1.4 L3 3.4 L5 1.4" stroke="#eee" stroke-width="1.2" fill="none"/></svg><div class="t" style="right:563px;top:525.48px;font-size:5px;line-height:6.25px;color:#f4f4f4;font-weight:normal;transform:scaleX(0.86);transform-origin:100% 50%;text-shadow:0.4px 0.5px 0.5px #000;-webkit-text-stroke:0.12px #f4f4f4;">Default Value</div><div style="left:139px;top:525px;width:11.6px;height:7.2px;border:0.7px solid #b8b8b8;border-radius:1px;box-sizing:border-box;background:#151515"></div><div class="t" style="left:44.8px;width:200px;text-align:center;top:525.45px;font-size:5.2px;line-height:6.5px;color:#f0f0f0;font-weight:normal;transform:scaleX(0.92);transform-origin:50% 50%;-webkit-text-stroke:0.15px #f0f0f0;">1.0</div><svg style="left:155.4px;top:525.8px" width="8" height="6"><path d="M0.7 3 A2.4 2.3 0 0 1 4.9 1.4 L6.8 3 L4.9 4.6 A2.4 2.3 0 0 1 0.7 3Z" fill="#f8f8f8" stroke="rgba(0,0,0,.55)" stroke-width=".7"/></svg><div style="left:186.3px;top:460.7px;width:37.2px;height:33.5px;background:#080808;border-radius:3px;box-shadow:0 1px 2px rgba(0,0,0,.5)"></div><div style="left:186.9px;top:461.3px;width:36px;height:32.1px;background:#1e1e1e;border-radius:2.5px"></div><div style="left:187.4px;top:461.8px;width:35px;height:8.5px;border-radius:2px 2px 0 0;background:linear-gradient(to bottom,rgba(255,255,255,.16),rgba(255,255,255,.04) 50%,rgba(0,0,0,.12)),linear-gradient(to right,#5c9a40 0%,#3c6a2a 68%,#2a2a2a 100%)"></div><div style="left:189.4px;top:463.1px;width:24.5px;height:5.6px;background:rgba(0,0,0,.32);border-radius:3px;box-shadow:inset 0 0 0 0.5px rgba(255,255,255,.12)"></div><div class="t" style="left:192.1px;top:463.59px;font-size:4.5px;line-height:5.62px;color:#f4f4f4;font-weight:normal;text-shadow:0.4px 0.5px 0.5px #000;-webkit-text-stroke:0.12px #f4f4f4;">Power</div><svg style="left:214.9px;top:463.3px" width="6" height="5"><path d="M1 1.4 L3 3.4 L5 1.4" stroke="#eee" stroke-width="1.2" fill="none"/></svg><svg style="left:189.1px;top:473.4px" width="8" height="6"><path d="M0.7 3 A2.4 2.3 0 0 1 4.9 1.4 L6.8 3 L4.9 4.6 A2.4 2.3 0 0 1 0.7 3Z" fill="#f8f8f8" stroke="rgba(0,0,0,.55)" stroke-width=".7"/></svg><div class="t" style="left:196.3px;top:473.07px;font-size:5px;line-height:6.25px;color:#f4f4f4;font-weight:normal;transform:scaleX(0.86);transform-origin:0 50%;text-shadow:0.4px 0.5px 0.5px #000;-webkit-text-stroke:0.12px #f4f4f4;">Base</div><svg style="left:212.8px;top:473.4px" width="8" height="6"><path d="M0.7 3 A2.4 2.3 0 0 1 4.9 1.4 L6.8 3 L4.9 4.6 A2.4 2.3 0 0 1 0.7 3Z" fill="#f8f8f8" stroke="rgba(0,0,0,.55)" stroke-width=".7"/></svg><svg style="left:188.8px;top:484.8px" width="8" height="6"><ellipse cx="3.5" cy="3" rx="2.9" ry="2.4" fill="#434343"/></svg><div class="t" style="left:196.3px;top:484.68px;font-size:5px;line-height:6.25px;color:#f4f4f4;font-weight:normal;transform:scaleX(0.86);transform-origin:0 50%;text-shadow:0.4px 0.5px 0.5px #000;-webkit-text-stroke:0.12px #f4f4f4;">Exp</div><div style="left:237.8px;top:431.9px;width:27.7px;height:23.2px;background:#080808;border-radius:3px;box-shadow:0 1px 2px rgba(0,0,0,.5)"></div><div style="left:238.4px;top:432.5px;width:26.5px;height:21.8px;background:#1e1e1e;border-radius:2.5px"></div><div style="left:238.9px;top:433px;width:25.5px;height:8.5px;border-radius:2px 2px 0 0;background:linear-gradient(to bottom,rgba(255,255,255,.16),rgba(255,255,255,.04) 50%,rgba(0,0,0,.12)),linear-gradient(to right,#5c9a40 0%,#3c6a2a 68%,#2a2a2a 100%)"></div><div style="left:240.9px;top:434.3px;width:15px;height:5.6px;background:rgba(0,0,0,.32);border-radius:3px;box-shadow:inset 0 0 0 0.5px rgba(255,255,255,.12)"></div><div class="t" style="left:243.6px;top:434.79px;font-size:4.5px;line-height:5.62px;color:#f4f4f4;font-weight:normal;text-shadow:0.4px 0.5px 0.5px #000;-webkit-text-stroke:0.12px #f4f4f4;">1-x</div><svg style="left:256.9px;top:434.5px" width="6" height="5"><path d="M1 1.4 L3 3.4 L5 1.4" stroke="#eee" stroke-width="1.2" fill="none"/></svg><svg style="left:241.1px;top:445.1px" width="8" height="6"><path d="M0.7 3 A2.4 2.3 0 0 1 4.9 1.4 L6.8 3 L4.9 4.6 A2.4 2.3 0 0 1 0.7 3Z" fill="#f8f8f8" stroke="rgba(0,0,0,.55)" stroke-width=".7"/></svg><svg style="left:255.2px;top:445.1px" width="8" height="6"><path d="M0.7 3 A2.4 2.3 0 0 1 4.9 1.4 L6.8 3 L4.9 4.6 A2.4 2.3 0 0 1 0.7 3Z" fill="#f8f8f8" stroke="rgba(0,0,0,.55)" stroke-width=".7"/></svg><div style="left:277.9px;top:386.1px;width:65.2px;height:30.5px;background:#080808;border-radius:3px;box-shadow:0 1px 2px rgba(0,0,0,.5)"></div><div style="left:278.5px;top:386.7px;width:64px;height:29.1px;background:#1e1e1e;border-radius:2.5px"></div><div style="left:279px;top:387.2px;width:63px;height:14.9px;border-radius:2px 2px 0 0;background:linear-gradient(to bottom,rgba(255,255,255,.16),rgba(255,255,255,.04) 50%,rgba(0,0,0,.12)),linear-gradient(to right,#5c9a40 0%,#3c6a2a 68%,#2a2a2a 100%)"></div><div class="t" style="left:283.5px;top:388.83px;font-size:4.75px;line-height:5.94px;color:#f4f4f4;font-weight:normal;text-shadow:0.4px 0.5px 0.5px #000;-webkit-text-stroke:0.12px #f4f4f4;">Roughness Min</div><div class="t" style="left:283.5px;top:396.41px;font-size:4.3px;line-height:5.38px;color:#a8d888;font-weight:normal;">Param (0)</div><svg style="left:334.5px;top:390.5px" width="6" height="5"><path d="M1 1.4 L3 3.4 L5 1.4" stroke="#eee" stroke-width="1.2" fill="none"/></svg><div class="t" style="right:385px;top:405.98px;font-size:5px;line-height:6.25px;color:#f4f4f4;font-weight:normal;transform:scaleX(0.86);transform-origin:100% 50%;text-shadow:0.4px 0.5px 0.5px #000;-webkit-text-stroke:0.12px #f4f4f4;">Default Value</div><div style="left:316.8px;top:405.5px;width:11.1px;height:7.2px;border:0.7px solid #b8b8b8;border-radius:1px;box-sizing:border-box;background:#151515"></div><div class="t" style="left:222.35px;width:200px;text-align:center;top:405.95px;font-size:5.2px;line-height:6.5px;color:#f0f0f0;font-weight:normal;transform:scaleX(0.92);transform-origin:50% 50%;-webkit-text-stroke:0.15px #f0f0f0;">0.0</div><svg style="left:332.4px;top:406.3px" width="8" height="6"><path d="M0.7 3 A2.4 2.3 0 0 1 4.9 1.4 L6.8 3 L4.9 4.6 A2.4 2.3 0 0 1 0.7 3Z" fill="#f8f8f8" stroke="rgba(0,0,0,.55)" stroke-width=".7"/></svg><div style="left:277.9px;top:420.3px;width:65.2px;height:30.2px;background:#080808;border-radius:3px;box-shadow:0 1px 2px rgba(0,0,0,.5)"></div><div style="left:278.5px;top:420.9px;width:64px;height:28.8px;background:#1e1e1e;border-radius:2.5px"></div><div style="left:279px;top:421.4px;width:63px;height:14.9px;border-radius:2px 2px 0 0;background:linear-gradient(to bottom,rgba(255,255,255,.16),rgba(255,255,255,.04) 50%,rgba(0,0,0,.12)),linear-gradient(to right,#5c9a40 0%,#3c6a2a 68%,#2a2a2a 100%)"></div><div class="t" style="left:283.5px;top:423.03px;font-size:4.75px;line-height:5.94px;color:#f4f4f4;font-weight:normal;text-shadow:0.4px 0.5px 0.5px #000;-webkit-text-stroke:0.12px #f4f4f4;">Roughness Max</div><div class="t" style="left:283.5px;top:430.61px;font-size:4.3px;line-height:5.38px;color:#a8d888;font-weight:normal;">Param (1)</div><svg style="left:334.5px;top:424.7px" width="6" height="5"><path d="M1 1.4 L3 3.4 L5 1.4" stroke="#eee" stroke-width="1.2" fill="none"/></svg><div class="t" style="right:385px;top:440.18px;font-size:5px;line-height:6.25px;color:#f4f4f4;font-weight:normal;transform:scaleX(0.86);transform-origin:100% 50%;text-shadow:0.4px 0.5px 0.5px #000;-webkit-text-stroke:0.12px #f4f4f4;">Default Value</div><div style="left:316.8px;top:439.7px;width:11.1px;height:7.2px;border:0.7px solid #b8b8b8;border-radius:1px;box-sizing:border-box;background:#151515"></div><div class="t" style="left:222.35px;width:200px;text-align:center;top:440.15px;font-size:5.2px;line-height:6.5px;color:#f0f0f0;font-weight:normal;transform:scaleX(0.92);transform-origin:50% 50%;-webkit-text-stroke:0.15px #f0f0f0;">1.0</div><svg style="left:332.4px;top:440.5px" width="8" height="6"><path d="M0.7 3 A2.4 2.3 0 0 1 4.9 1.4 L6.8 3 L4.9 4.6 A2.4 2.3 0 0 1 0.7 3Z" fill="#f8f8f8" stroke="rgba(0,0,0,.55)" stroke-width=".7"/></svg><div style="left:272px;top:460.7px;width:73.2px;height:51.5px;background:#080808;border-radius:3px;box-shadow:0 1px 2px rgba(0,0,0,.5)"></div><div style="left:272.6px;top:461.3px;width:72px;height:50.1px;background:#1e1e1e;border-radius:2.5px"></div><div style="left:273.1px;top:461.8px;width:71px;height:14.9px;border-radius:2px 2px 0 0;background:linear-gradient(to bottom,rgba(255,255,255,.16),rgba(255,255,255,.04) 50%,rgba(0,0,0,.12)),linear-gradient(to right,#2a9fa6 0%,#17686e 68%,#2a2a2a 100%)"></div><div class="t" style="left:277.6px;top:463.43px;font-size:4.75px;line-height:5.94px;color:#f4f4f4;font-weight:normal;text-shadow:0.4px 0.5px 0.5px #000;-webkit-text-stroke:0.12px #f4f4f4;">Invert Roughness Texture</div><div class="t" style="left:277.6px;top:471.01px;font-size:4.3px;line-height:5.38px;color:#90e0e6;font-weight:normal;">Switch Param (False)</div><svg style="left:275.3px;top:479.6px" width="8" height="6"><path d="M0.7 3 A2.4 2.3 0 0 1 4.9 1.4 L6.8 3 L4.9 4.6 A2.4 2.3 0 0 1 0.7 3Z" fill="#f8f8f8" stroke="rgba(0,0,0,.55)" stroke-width=".7"/></svg><div class="t" style="left:282.5px;top:479.27px;font-size:5px;line-height:6.25px;color:#f4f4f4;font-weight:normal;transform:scaleX(0.86);transform-origin:0 50%;text-shadow:0.4px 0.5px 0.5px #000;-webkit-text-stroke:0.12px #f4f4f4;">True</div><svg style="left:275.3px;top:490.6px" width="8" height="6"><path d="M0.7 3 A2.4 2.3 0 0 1 4.9 1.4 L6.8 3 L4.9 4.6 A2.4 2.3 0 0 1 0.7 3Z" fill="#f8f8f8" stroke="rgba(0,0,0,.55)" stroke-width=".7"/></svg><div class="t" style="left:282.5px;top:490.27px;font-size:5px;line-height:6.25px;color:#f4f4f4;font-weight:normal;transform:scaleX(0.86);transform-origin:0 50%;text-shadow:0.4px 0.5px 0.5px #000;-webkit-text-stroke:0.12px #f4f4f4;">False</div><div class="t" style="left:283.1px;top:501.38px;font-size:5px;line-height:6.25px;color:#f4f4f4;font-weight:normal;transform:scaleX(0.86);transform-origin:0 50%;text-shadow:0.4px 0.5px 0.5px #000;-webkit-text-stroke:0.12px #f4f4f4;">Default Value</div><div style="left:312.1px;top:501.2px;width:4.5px;height:6.4px;background:#080808;border:0.5px solid #333;box-sizing:border-box"></div><svg style="left:334.2px;top:479.6px" width="8" height="6"><path d="M0.7 3 A2.4 2.3 0 0 1 4.9 1.4 L6.8 3 L4.9 4.6 A2.4 2.3 0 0 1 0.7 3Z" fill="#f8f8f8" stroke="rgba(0,0,0,.55)" stroke-width=".7"/></svg><div style="left:358.2px;top:414.6px;width:39.2px;height:45px;background:#080808;border-radius:3px;box-shadow:0 1px 2px rgba(0,0,0,.5)"></div><div style="left:358.8px;top:415.2px;width:38px;height:43.6px;background:#1e1e1e;border-radius:2.5px"></div><div style="left:359.3px;top:415.7px;width:37px;height:8.3px;border-radius:2px 2px 0 0;background:linear-gradient(to bottom,rgba(255,255,255,.16),rgba(255,255,255,.04) 50%,rgba(0,0,0,.12)),linear-gradient(to right,#5c9a40 0%,#3c6a2a 68%,#2a2a2a 100%)"></div><div style="left:361.3px;top:417px;width:26.5px;height:5.4px;background:rgba(0,0,0,.32);border-radius:3px;box-shadow:inset 0 0 0 0.5px rgba(255,255,255,.12)"></div><div class="t" style="left:364px;top:417.39px;font-size:4.5px;line-height:5.62px;color:#f4f4f4;font-weight:normal;text-shadow:0.4px 0.5px 0.5px #000;-webkit-text-stroke:0.12px #f4f4f4;">Lerp</div><svg style="left:388.8px;top:417.1px" width="6" height="5"><path d="M1 1.4 L3 3.4 L5 1.4" stroke="#eee" stroke-width="1.2" fill="none"/></svg><svg style="left:361.3px;top:428.2px" width="8" height="6"><ellipse cx="3.5" cy="3" rx="2.9" ry="2.4" fill="#434343"/></svg><div class="t" style="left:368.8px;top:428.07px;font-size:5px;line-height:6.25px;color:#f4f4f4;font-weight:normal;transform:scaleX(0.86);transform-origin:0 50%;text-shadow:0.4px 0.5px 0.5px #000;-webkit-text-stroke:0.12px #f4f4f4;">A</div><svg style="left:361.3px;top:439px" width="8" height="6"><ellipse cx="3.5" cy="3" rx="2.9" ry="2.4" fill="#434343"/></svg><div class="t" style="left:368.8px;top:438.88px;font-size:5px;line-height:6.25px;color:#f4f4f4;font-weight:normal;transform:scaleX(0.86);transform-origin:0 50%;text-shadow:0.4px 0.5px 0.5px #000;-webkit-text-stroke:0.12px #f4f4f4;">B</div><svg style="left:361.3px;top:449.8px" width="8" height="6"><ellipse cx="3.5" cy="3" rx="2.9" ry="2.4" fill="#434343"/></svg><div class="t" style="left:368.8px;top:449.68px;font-size:5px;line-height:6.25px;color:#f4f4f4;font-weight:normal;transform:scaleX(0.86);transform-origin:0 50%;text-shadow:0.4px 0.5px 0.5px #000;-webkit-text-stroke:0.12px #f4f4f4;">Alpha</div><svg style="left:386.8px;top:428.4px" width="8" height="6"><path d="M0.7 3 A2.4 2.3 0 0 1 4.9 1.4 L6.8 3 L4.9 4.6 A2.4 2.3 0 0 1 0.7 3Z" fill="#f8f8f8" stroke="rgba(0,0,0,.55)" stroke-width=".7"/></svg><div style="left:358.2px;top:478.2px;width:65.2px;height:29.8px;background:#080808;border-radius:3px;box-shadow:0 1px 2px rgba(0,0,0,.5)"></div><div style="left:358.8px;top:478.8px;width:64px;height:28.4px;background:#1e1e1e;border-radius:2.5px"></div><div style="left:359.3px;top:479.3px;width:63px;height:14.7px;border-radius:2px 2px 0 0;background:linear-gradient(to bottom,rgba(255,255,255,.16),rgba(255,255,255,.04) 50%,rgba(0,0,0,.12)),linear-gradient(to right,#5c9a40 0%,#3c6a2a 68%,#2a2a2a 100%)"></div><div class="t" style="left:363.8px;top:480.93px;font-size:4.75px;line-height:5.94px;color:#f4f4f4;font-weight:normal;text-shadow:0.4px 0.5px 0.5px #000;-webkit-text-stroke:0.12px #f4f4f4;">Roughness</div><div class="t" style="left:363.8px;top:488.31px;font-size:4.3px;line-height:5.38px;color:#a8d888;font-weight:normal;">Param (0.5)</div><svg style="left:414.8px;top:482.6px" width="6" height="5"><path d="M1 1.4 L3 3.4 L5 1.4" stroke="#eee" stroke-width="1.2" fill="none"/></svg><div class="t" style="right:305px;top:497.68px;font-size:5px;line-height:6.25px;color:#f4f4f4;font-weight:normal;transform:scaleX(0.86);transform-origin:100% 50%;text-shadow:0.4px 0.5px 0.5px #000;-webkit-text-stroke:0.12px #f4f4f4;">Default Value</div><div style="left:396.8px;top:497.2px;width:11.2px;height:7.2px;border:0.7px solid #b8b8b8;border-radius:1px;box-sizing:border-box;background:#151515"></div><div class="t" style="left:302.4px;width:200px;text-align:center;top:497.65px;font-size:5.2px;line-height:6.5px;color:#f0f0f0;font-weight:normal;transform:scaleX(0.92);transform-origin:50% 50%;-webkit-text-stroke:0.15px #f0f0f0;">0.5</div><svg style="left:412px;top:498px" width="8" height="6"><path d="M0.7 3 A2.4 2.3 0 0 1 4.9 1.4 L6.8 3 L4.9 4.6 A2.4 2.3 0 0 1 0.7 3Z" fill="#f8f8f8" stroke="rgba(0,0,0,.55)" stroke-width=".7"/></svg><div style="left:432.2px;top:426.2px;width:69.2px;height:51.4px;background:#080808;border-radius:3px;box-shadow:0 1px 2px rgba(0,0,0,.5)"></div><div style="left:432.8px;top:426.8px;width:68px;height:50px;background:#1e1e1e;border-radius:2.5px"></div><div style="left:433.3px;top:427.3px;width:67px;height:14.7px;border-radius:2px 2px 0 0;background:linear-gradient(to bottom,rgba(255,255,255,.16),rgba(255,255,255,.04) 50%,rgba(0,0,0,.12)),linear-gradient(to right,#2a9fa6 0%,#17686e 68%,#2a2a2a 100%)"></div><div class="t" style="left:437.8px;top:428.93px;font-size:4.75px;line-height:5.94px;color:#f4f4f4;font-weight:normal;text-shadow:0.4px 0.5px 0.5px #000;-webkit-text-stroke:0.12px #f4f4f4;">Use Roughness Texture</div><div class="t" style="left:437.8px;top:436.31px;font-size:4.3px;line-height:5.38px;color:#90e0e6;font-weight:normal;">Switch Param (False)</div><svg style="left:435.6px;top:445.2px" width="8" height="6"><path d="M0.7 3 A2.4 2.3 0 0 1 4.9 1.4 L6.8 3 L4.9 4.6 A2.4 2.3 0 0 1 0.7 3Z" fill="#f8f8f8" stroke="rgba(0,0,0,.55)" stroke-width=".7"/></svg><div class="t" style="left:442.8px;top:444.88px;font-size:5px;line-height:6.25px;color:#f4f4f4;font-weight:normal;transform:scaleX(0.86);transform-origin:0 50%;text-shadow:0.4px 0.5px 0.5px #000;-webkit-text-stroke:0.12px #f4f4f4;">True</div><svg style="left:435.6px;top:456px" width="8" height="6"><path d="M0.7 3 A2.4 2.3 0 0 1 4.9 1.4 L6.8 3 L4.9 4.6 A2.4 2.3 0 0 1 0.7 3Z" fill="#f8f8f8" stroke="rgba(0,0,0,.55)" stroke-width=".7"/></svg><div class="t" style="left:442.8px;top:455.68px;font-size:5px;line-height:6.25px;color:#f4f4f4;font-weight:normal;transform:scaleX(0.86);transform-origin:0 50%;text-shadow:0.4px 0.5px 0.5px #000;-webkit-text-stroke:0.12px #f4f4f4;">False</div><div class="t" style="left:443.3px;top:466.88px;font-size:5px;line-height:6.25px;color:#f4f4f4;font-weight:normal;transform:scaleX(0.86);transform-origin:0 50%;text-shadow:0.4px 0.5px 0.5px #000;-webkit-text-stroke:0.12px #f4f4f4;">Default Value</div><div style="left:472.3px;top:466.7px;width:4.5px;height:6.4px;background:#080808;border:0.5px solid #333;box-sizing:border-box"></div><svg style="left:490.8px;top:445.2px" width="8" height="6"><path d="M0.7 3 A2.4 2.3 0 0 1 4.9 1.4 L6.8 3 L4.9 4.6 A2.4 2.3 0 0 1 0.7 3Z" fill="#f8f8f8" stroke="rgba(0,0,0,.55)" stroke-width=".7"/></svg><div style="left:541.4px;top:380.6px;width:50px;height:25px;background:#080808;border-radius:3px;box-shadow:0 1px 2px rgba(0,0,0,.5)"></div><div style="left:542px;top:381.2px;width:48.8px;height:23.6px;background:#1e1e1e;border-radius:2.5px"></div><div style="left:542.5px;top:381.7px;width:47.8px;height:8.3px;border-radius:2px 2px 0 0;background:linear-gradient(to bottom,rgba(255,255,255,.16),rgba(255,255,255,.04) 50%,rgba(0,0,0,.12)),linear-gradient(to right,#5c9a40 0%,#3c6a2a 68%,#2a2a2a 100%)"></div><div style="left:544.5px;top:383px;width:37.3px;height:5.4px;background:rgba(0,0,0,.32);border-radius:3px;box-shadow:inset 0 0 0 0.5px rgba(255,255,255,.12)"></div><div class="t" style="left:547.2px;top:383.39px;font-size:4.5px;line-height:5.62px;color:#f4f4f4;font-weight:normal;text-shadow:0.4px 0.5px 0.5px #000;-webkit-text-stroke:0.12px #f4f4f4;">1</div><svg style="left:582.8px;top:383.1px" width="6" height="5"><path d="M1 1.4 L3 3.4 L5 1.4" stroke="#eee" stroke-width="1.2" fill="none"/></svg><div class="t" style="right:137px;top:394.07px;font-size:5px;line-height:6.25px;color:#f4f4f4;font-weight:normal;transform:scaleX(0.86);transform-origin:100% 50%;text-shadow:0.4px 0.5px 0.5px #000;-webkit-text-stroke:0.12px #f4f4f4;">Value</div><div style="left:565.2px;top:393.6px;width:10.6px;height:7.2px;border:0.7px solid #b8b8b8;border-radius:1px;box-sizing:border-box;background:#151515"></div><div class="t" style="left:470.5px;width:200px;text-align:center;top:394.05px;font-size:5.2px;line-height:6.5px;color:#f0f0f0;font-weight:normal;transform:scaleX(0.92);transform-origin:50% 50%;-webkit-text-stroke:0.15px #f0f0f0;">1.0</div><svg style="left:580.8px;top:394.4px" width="8" height="6"><path d="M0.7 3 A2.4 2.3 0 0 1 4.9 1.4 L6.8 3 L4.9 4.6 A2.4 2.3 0 0 1 0.7 3Z" fill="#f8f8f8" stroke="rgba(0,0,0,.55)" stroke-width=".7"/></svg><div style="left:609.4px;top:363.8px;width:78.7px;height:229.5px;background:#080808;border-radius:3px;box-shadow:0 1px 2px rgba(0,0,0,.5)"></div><div style="left:610px;top:364.4px;width:77.5px;height:228.1px;background:#1e1e1e;border-radius:2.5px"></div><div style="left:610.5px;top:364.9px;width:76.5px;height:7.4px;border-radius:2px 2px 0 0;background:linear-gradient(to bottom,rgba(255,255,255,.16),rgba(255,255,255,.04) 50%,rgba(0,0,0,.12)),linear-gradient(to right,#94785f 0%,#5e4c3c 68%,#2a2a2a 100%)"></div><div class="t" style="left:615.2px;top:366.14px;font-size:4.5px;line-height:5.62px;color:#f4f4f4;font-weight:normal;text-shadow:0.4px 0.5px 0.5px #000;-webkit-text-stroke:0.12px #f4f4f4;">M_Glass_Advanced</div><svg style="left:614.3px;top:376.6px" width="8" height="6"><path d="M0.7 3 A2.4 2.3 0 0 1 4.9 1.4 L6.8 3 L4.9 4.6 A2.4 2.3 0 0 1 0.7 3Z" fill="#f8f8f8" stroke="rgba(0,0,0,.55)" stroke-width=".7"/></svg><div class="t" style="left:622px;top:376.27px;font-size:5px;line-height:6.25px;color:#e8e8e8;font-weight:normal;transform:scaleX(0.86);transform-origin:0 50%;text-shadow:0.4px 0.5px 0.5px #000;-webkit-text-stroke:0.12px #e8e8e8;">Base Color</div><svg style="left:614.3px;top:387.55px" width="8" height="6"><path d="M0.7 3 A2.4 2.3 0 0 1 4.9 1.4 L6.8 3 L4.9 4.6 A2.4 2.3 0 0 1 0.7 3Z" fill="#f8f8f8" stroke="rgba(0,0,0,.55)" stroke-width=".7"/></svg><div class="t" style="left:622px;top:387.22px;font-size:5px;line-height:6.25px;color:#e8e8e8;font-weight:normal;transform:scaleX(0.86);transform-origin:0 50%;text-shadow:0.4px 0.5px 0.5px #000;-webkit-text-stroke:0.12px #e8e8e8;">Metallic</div><svg style="left:614px;top:398.3px" width="8" height="6"><circle cx="3" cy="3" r="1.9" stroke="#e8e8e8" stroke-width="1.1" fill="none"/><path d="M5.2 1.7 L6.8 3 L5.2 4.3Z" fill="#e8e8e8"/></svg><div class="t" style="left:622px;top:398.17px;font-size:5px;line-height:6.25px;color:#e8e8e8;font-weight:normal;transform:scaleX(0.86);transform-origin:0 50%;text-shadow:0.4px 0.5px 0.5px #000;-webkit-text-stroke:0.12px #e8e8e8;">Specular</div><svg style="left:614.3px;top:409.45px" width="8" height="6"><path d="M0.7 3 A2.4 2.3 0 0 1 4.9 1.4 L6.8 3 L4.9 4.6 A2.4 2.3 0 0 1 0.7 3Z" fill="#f8f8f8" stroke="rgba(0,0,0,.55)" stroke-width=".7"/></svg><div class="t" style="left:622px;top:409.12px;font-size:5px;line-height:6.25px;color:#e8e8e8;font-weight:normal;transform:scaleX(0.86);transform-origin:0 50%;text-shadow:0.4px 0.5px 0.5px #000;-webkit-text-stroke:0.12px #e8e8e8;">Roughness</div><svg style="left:614px;top:420.2px" width="8" height="6"><circle cx="3" cy="3" r="1.9" stroke="#e8e8e8" stroke-width="1.1" fill="none"/><path d="M5.2 1.7 L6.8 3 L5.2 4.3Z" fill="#e8e8e8"/></svg><div class="t" style="left:622px;top:420.07px;font-size:5px;line-height:6.25px;color:#e8e8e8;font-weight:normal;transform:scaleX(0.86);transform-origin:0 50%;text-shadow:0.4px 0.5px 0.5px #000;-webkit-text-stroke:0.12px #e8e8e8;">Anisotropy</div><svg style="left:614px;top:431.15px" width="8" height="6"><circle cx="3" cy="3" r="1.9" stroke="#e8e8e8" stroke-width="1.1" fill="none"/><path d="M5.2 1.7 L6.8 3 L5.2 4.3Z" fill="#e8e8e8"/></svg><div class="t" style="left:622px;top:431.02px;font-size:5px;line-height:6.25px;color:#e8e8e8;font-weight:normal;transform:scaleX(0.86);transform-origin:0 50%;text-shadow:0.4px 0.5px 0.5px #000;-webkit-text-stroke:0.12px #e8e8e8;">Emissive Color</div><svg style="left:614.3px;top:442.3px" width="8" height="6"><path d="M0.7 3 A2.4 2.3 0 0 1 4.9 1.4 L6.8 3 L4.9 4.6 A2.4 2.3 0 0 1 0.7 3Z" fill="#f8f8f8" stroke="rgba(0,0,0,.55)" stroke-width=".7"/></svg><div class="t" style="left:622px;top:441.97px;font-size:5px;line-height:6.25px;color:#e8e8e8;font-weight:normal;transform:scaleX(0.86);transform-origin:0 50%;text-shadow:0.4px 0.5px 0.5px #000;-webkit-text-stroke:0.12px #e8e8e8;">Opacity</div><svg style="left:614px;top:453.05px" width="8" height="6"><circle cx="3" cy="3" r="1.9" stroke="#3c3c3c" stroke-width="1.1" fill="none"/><path d="M5.2 1.7 L6.8 3 L5.2 4.3Z" fill="#3c3c3c"/></svg><div class="t" style="left:622px;top:452.92px;font-size:5px;line-height:6.25px;color:#3e3e3e;font-weight:normal;transform:scaleX(0.86);transform-origin:0 50%;text-shadow:0.4px 0.5px 0.5px #000;-webkit-text-stroke:0.12px #3e3e3e;">Opacity Mask</div><svg style="left:614.3px;top:464.2px" width="8" height="6"><path d="M0.7 3 A2.4 2.3 0 0 1 4.9 1.4 L6.8 3 L4.9 4.6 A2.4 2.3 0 0 1 0.7 3Z" fill="#f8f8f8" stroke="rgba(0,0,0,.55)" stroke-width=".7"/></svg><div class="t" style="left:622px;top:463.88px;font-size:5px;line-height:6.25px;color:#e8e8e8;font-weight:normal;transform:scaleX(0.86);transform-origin:0 50%;text-shadow:0.4px 0.5px 0.5px #000;-webkit-text-stroke:0.12px #e8e8e8;">Normal</div><svg style="left:614px;top:474.95px" width="8" height="6"><circle cx="3" cy="3" r="1.9" stroke="#e8e8e8" stroke-width="1.1" fill="none"/><path d="M5.2 1.7 L6.8 3 L5.2 4.3Z" fill="#e8e8e8"/></svg><div class="t" style="left:622px;top:474.82px;font-size:5px;line-height:6.25px;color:#e8e8e8;font-weight:normal;transform:scaleX(0.86);transform-origin:0 50%;text-shadow:0.4px 0.5px 0.5px #000;-webkit-text-stroke:0.12px #e8e8e8;">Tangent</div><svg style="left:614px;top:485.9px" width="8" height="6"><circle cx="3" cy="3" r="1.9" stroke="#e8e8e8" stroke-width="1.1" fill="none"/><path d="M5.2 1.7 L6.8 3 L5.2 4.3Z" fill="#e8e8e8"/></svg><div class="t" style="left:622px;top:485.77px;font-size:5px;line-height:6.25px;color:#e8e8e8;font-weight:normal;transform:scaleX(0.86);transform-origin:0 50%;text-shadow:0.4px 0.5px 0.5px #000;-webkit-text-stroke:0.12px #e8e8e8;">World Position Offset</div><svg style="left:614px;top:496.85px" width="8" height="6"><circle cx="3" cy="3" r="1.9" stroke="#3c3c3c" stroke-width="1.1" fill="none"/><path d="M5.2 1.7 L6.8 3 L5.2 4.3Z" fill="#3c3c3c"/></svg><div class="t" style="left:622px;top:496.72px;font-size:5px;line-height:6.25px;color:#3e3e3e;font-weight:normal;transform:scaleX(0.86);transform-origin:0 50%;text-shadow:0.4px 0.5px 0.5px #000;-webkit-text-stroke:0.12px #3e3e3e;">Subsurface Color</div><svg style="left:614px;top:507.8px" width="8" height="6"><circle cx="3" cy="3" r="1.9" stroke="#3c3c3c" stroke-width="1.1" fill="none"/><path d="M5.2 1.7 L6.8 3 L5.2 4.3Z" fill="#3c3c3c"/></svg><div class="t" style="left:622px;top:507.67px;font-size:5px;line-height:6.25px;color:#3e3e3e;font-weight:normal;transform:scaleX(0.86);transform-origin:0 50%;text-shadow:0.4px 0.5px 0.5px #000;-webkit-text-stroke:0.12px #3e3e3e;">Custom Data 0</div><svg style="left:614px;top:518.75px" width="8" height="6"><circle cx="3" cy="3" r="1.9" stroke="#3c3c3c" stroke-width="1.1" fill="none"/><path d="M5.2 1.7 L6.8 3 L5.2 4.3Z" fill="#3c3c3c"/></svg><div class="t" style="left:622px;top:518.62px;font-size:5px;line-height:6.25px;color:#3e3e3e;font-weight:normal;transform:scaleX(0.86);transform-origin:0 50%;text-shadow:0.4px 0.5px 0.5px #000;-webkit-text-stroke:0.12px #3e3e3e;">Custom Data 1</div><svg style="left:614px;top:529.7px" width="8" height="6"><circle cx="3" cy="3" r="1.9" stroke="#e8e8e8" stroke-width="1.1" fill="none"/><path d="M5.2 1.7 L6.8 3 L5.2 4.3Z" fill="#e8e8e8"/></svg><div class="t" style="left:622px;top:529.57px;font-size:5px;line-height:6.25px;color:#e8e8e8;font-weight:normal;transform:scaleX(0.86);transform-origin:0 50%;text-shadow:0.4px 0.5px 0.5px #000;-webkit-text-stroke:0.12px #e8e8e8;">Ambient Occlusion</div><svg style="left:614.3px;top:540.85px" width="8" height="6"><path d="M0.7 3 A2.4 2.3 0 0 1 4.9 1.4 L6.8 3 L4.9 4.6 A2.4 2.3 0 0 1 0.7 3Z" fill="#f8f8f8" stroke="rgba(0,0,0,.55)" stroke-width=".7"/></svg><div class="t" style="left:622px;top:540.52px;font-size:5px;line-height:6.25px;color:#e8e8e8;font-weight:normal;transform:scaleX(0.86);transform-origin:0 50%;text-shadow:0.4px 0.5px 0.5px #000;-webkit-text-stroke:0.12px #e8e8e8;">Refraction (Index Of Refraction)</div><svg style="left:614px;top:551.6px" width="8" height="6"><circle cx="3" cy="3" r="1.9" stroke="#3c3c3c" stroke-width="1.1" fill="none"/><path d="M5.2 1.7 L6.8 3 L5.2 4.3Z" fill="#3c3c3c"/></svg><div class="t" style="left:622px;top:551.47px;font-size:5px;line-height:6.25px;color:#3e3e3e;font-weight:normal;transform:scaleX(0.86);transform-origin:0 50%;text-shadow:0.4px 0.5px 0.5px #000;-webkit-text-stroke:0.12px #3e3e3e;">Pixel Depth Offset</div><svg style="left:614px;top:562.55px" width="8" height="6"><circle cx="3" cy="3" r="1.9" stroke="#3c3c3c" stroke-width="1.1" fill="none"/><path d="M5.2 1.7 L6.8 3 L5.2 4.3Z" fill="#3c3c3c"/></svg><div class="t" style="left:622px;top:562.42px;font-size:5px;line-height:6.25px;color:#3e3e3e;font-weight:normal;transform:scaleX(0.86);transform-origin:0 50%;text-shadow:0.4px 0.5px 0.5px #000;-webkit-text-stroke:0.12px #3e3e3e;">Shading Model</div><svg style="left:614px;top:573.5px" width="8" height="6"><circle cx="3" cy="3" r="1.9" stroke="#3c3c3c" stroke-width="1.1" fill="none"/><path d="M5.2 1.7 L6.8 3 L5.2 4.3Z" fill="#3c3c3c"/></svg><div class="t" style="left:622px;top:573.38px;font-size:5px;line-height:6.25px;color:#3e3e3e;font-weight:normal;transform:scaleX(0.86);transform-origin:0 50%;text-shadow:0.4px 0.5px 0.5px #000;-webkit-text-stroke:0.12px #3e3e3e;">Surface Thickness</div><svg style="left:614px;top:584.45px" width="8" height="6"><circle cx="3" cy="3" r="1.9" stroke="#3c3c3c" stroke-width="1.1" fill="none"/><path d="M5.2 1.7 L6.8 3 L5.2 4.3Z" fill="#3c3c3c"/></svg><div class="t" style="left:622px;top:584.32px;font-size:5px;line-height:6.25px;color:#3e3e3e;font-weight:normal;transform:scaleX(0.86);transform-origin:0 50%;text-shadow:0.4px 0.5px 0.5px #000;-webkit-text-stroke:0.12px #3e3e3e;">Front Material</div><div style="left:181.5px;top:582.1px;width:75px;height:89.4px;background:#080808;border-radius:3px;box-shadow:0 1px 2px rgba(0,0,0,.5)"></div><div style="left:182.1px;top:582.7px;width:73.8px;height:88px;background:#1e1e1e;border-radius:2.5px"></div><div style="left:182.6px;top:583.2px;width:72.8px;height:13.2px;border-radius:2px 2px 0 0;background:linear-gradient(to bottom,rgba(255,255,255,.16),rgba(255,255,255,.04) 50%,rgba(0,0,0,.12)),linear-gradient(to right,#2f8cc6 0%,#1d5b88 68%,#2a2a2a 100%)"></div><div class="t" style="left:187.1px;top:584.83px;font-size:4.75px;line-height:5.94px;color:#f4f4f4;font-weight:normal;text-shadow:0.4px 0.5px 0.5px #000;-webkit-text-stroke:0.12px #f4f4f4;">Normal Map</div><div class="t" style="left:187.1px;top:590.71px;font-size:4.3px;line-height:5.38px;color:#7cc0ee;font-weight:normal;">Param2D</div><svg style="left:247.9px;top:586.5px" width="6" height="5"><path d="M1 3.6 L3 1.6 L5 3.6" stroke="#eee" stroke-width="1.2" fill="none"/></svg><svg style="left:184.6px;top:602.1px" width="4" height="4"><circle cx="2" cy="2" r="1.1" fill="#0c0c0c"/></svg><div class="t" style="left:192.3px;top:600.98px;font-size:5px;line-height:6.25px;color:#f4f4f4;font-weight:normal;transform:scaleX(0.86);transform-origin:0 50%;text-shadow:0.4px 0.5px 0.5px #000;-webkit-text-stroke:0.12px #f4f4f4;">UVs</div><div style="left:202.6px;top:600.5px;width:6.6px;height:7.2px;border:0.7px solid #b8b8b8;border-radius:1px;box-sizing:border-box;background:#151515"></div><div class="t" style="left:105.9px;width:200px;text-align:center;top:600.95px;font-size:5.2px;line-height:6.5px;color:#f0f0f0;font-weight:normal;transform:scaleX(0.92);transform-origin:50% 50%;-webkit-text-stroke:0.15px #f0f0f0;">0</div><svg style="left:184.6px;top:614.4px" width="4" height="4"><circle cx="2" cy="2" r="1.1" fill="#0c0c0c"/></svg><div class="t" style="left:192.3px;top:613.27px;font-size:5px;line-height:6.25px;color:#f4f4f4;font-weight:normal;transform:scaleX(0.86);transform-origin:0 50%;text-shadow:0.4px 0.5px 0.5px #000;-webkit-text-stroke:0.12px #f4f4f4;">Apply View MipBias</div><svg style="left:183.6px;top:623px" width="34.8" height="34.9"><rect width="100%" height="100%" fill="#1c22f2"/><path d="M0 -4 L-3.46 -2 L-6.93 -4 L-6.93 -8 L-3.46 -10 L-0 -8Z M6.93 -4 L3.46 -2 L-0 -4 L0 -8 L3.46 -10 L6.93 -8Z M13.86 -4 L10.39 -2 L6.93 -4 L6.93 -8 L10.39 -10 L13.86 -8Z M20.78 -4 L17.32 -2 L13.86 -4 L13.86 -8 L17.32 -10 L20.78 -8Z M27.71 -4 L24.25 -2 L20.78 -4 L20.78 -8 L24.25 -10 L27.71 -8Z M34.64 -4 L31.18 -2 L27.71 -4 L27.71 -8 L31.18 -10 L34.64 -8Z M41.57 -4 L38.11 -2 L34.64 -4 L34.64 -8 L38.11 -10 L41.57 -8Z M48.5 -4 L45.03 -2 L41.57 -4 L41.57 -8 L45.03 -10 L48.5 -8Z M-3.46 2 L-6.93 4 L-10.39 2 L-10.39 -2 L-6.93 -4 L-3.46 -2Z M3.46 2 L0 4 L-3.46 2 L-3.46 -2 L-0 -4 L3.46 -2Z M10.39 2 L6.93 4 L3.46 2 L3.46 -2 L6.93 -4 L10.39 -2Z M17.32 2 L13.86 4 L10.39 2 L10.39 -2 L13.86 -4 L17.32 -2Z M24.25 2 L20.78 4 L17.32 2 L17.32 -2 L20.78 -4 L24.25 -2Z M31.18 2 L27.71 4 L24.25 2 L24.25 -2 L27.71 -4 L31.18 -2Z M38.11 2 L34.64 4 L31.18 2 L31.18 -2 L34.64 -4 L38.11 -2Z M45.03 2 L41.57 4 L38.11 2 L38.11 -2 L41.57 -4 L45.03 -2Z M0 8 L-3.46 10 L-6.93 8 L-6.93 4 L-3.46 2 L-0 4Z M6.93 8 L3.46 10 L-0 8 L0 4 L3.46 2 L6.93 4Z M13.86 8 L10.39 10 L6.93 8 L6.93 4 L10.39 2 L13.86 4Z M20.78 8 L17.32 10 L13.86 8 L13.86 4 L17.32 2 L20.78 4Z M27.71 8 L24.25 10 L20.78 8 L20.78 4 L24.25 2 L27.71 4Z M34.64 8 L31.18 10 L27.71 8 L27.71 4 L31.18 2 L34.64 4Z M41.57 8 L38.11 10 L34.64 8 L34.64 4 L38.11 2 L41.57 4Z M48.5 8 L45.03 10 L41.57 8 L41.57 4 L45.03 2 L48.5 4Z M-3.46 14 L-6.93 16 L-10.39 14 L-10.39 10 L-6.93 8 L-3.46 10Z M3.46 14 L0 16 L-3.46 14 L-3.46 10 L-0 8 L3.46 10Z M10.39 14 L6.93 16 L3.46 14 L3.46 10 L6.93 8 L10.39 10Z M17.32 14 L13.86 16 L10.39 14 L10.39 10 L13.86 8 L17.32 10Z M24.25 14 L20.78 16 L17.32 14 L17.32 10 L20.78 8 L24.25 10Z M31.18 14 L27.71 16 L24.25 14 L24.25 10 L27.71 8 L31.18 10Z M38.11 14 L34.64 16 L31.18 14 L31.18 10 L34.64 8 L38.11 10Z M45.03 14 L41.57 16 L38.11 14 L38.11 10 L41.57 8 L45.03 10Z M0 20 L-3.46 22 L-6.93 20 L-6.93 16 L-3.46 14 L-0 16Z M6.93 20 L3.46 22 L-0 20 L0 16 L3.46 14 L6.93 16Z M13.86 20 L10.39 22 L6.93 20 L6.93 16 L10.39 14 L13.86 16Z M20.78 20 L17.32 22 L13.86 20 L13.86 16 L17.32 14 L20.78 16Z M27.71 20 L24.25 22 L20.78 20 L20.78 16 L24.25 14 L27.71 16Z M34.64 20 L31.18 22 L27.71 20 L27.71 16 L31.18 14 L34.64 16Z M41.57 20 L38.11 22 L34.64 20 L34.64 16 L38.11 14 L41.57 16Z M48.5 20 L45.03 22 L41.57 20 L41.57 16 L45.03 14 L48.5 16Z M-3.46 26 L-6.93 28 L-10.39 26 L-10.39 22 L-6.93 20 L-3.46 22Z M3.46 26 L0 28 L-3.46 26 L-3.46 22 L-0 20 L3.46 22Z M10.39 26 L6.93 28 L3.46 26 L3.46 22 L6.93 20 L10.39 22Z M17.32 26 L13.86 28 L10.39 26 L10.39 22 L13.86 20 L17.32 22Z M24.25 26 L20.78 28 L17.32 26 L17.32 22 L20.78 20 L24.25 22Z M31.18 26 L27.71 28 L24.25 26 L24.25 22 L27.71 20 L31.18 22Z M38.11 26 L34.64 28 L31.18 26 L31.18 22 L34.64 20 L38.11 22Z M45.03 26 L41.57 28 L38.11 26 L38.11 22 L41.57 20 L45.03 22Z M0 32 L-3.46 34 L-6.93 32 L-6.93 28 L-3.46 26 L-0 28Z M6.93 32 L3.46 34 L-0 32 L0 28 L3.46 26 L6.93 28Z M13.86 32 L10.39 34 L6.93 32 L6.93 28 L10.39 26 L13.86 28Z M20.78 32 L17.32 34 L13.86 32 L13.86 28 L17.32 26 L20.78 28Z M27.71 32 L24.25 34 L20.78 32 L20.78 28 L24.25 26 L27.71 28Z M34.64 32 L31.18 34 L27.71 32 L27.71 28 L31.18 26 L34.64 28Z M41.57 32 L38.11 34 L34.64 32 L34.64 28 L38.11 26 L41.57 28Z M48.5 32 L45.03 34 L41.57 32 L41.57 28 L45.03 26 L48.5 28Z M-3.46 38 L-6.93 40 L-10.39 38 L-10.39 34 L-6.93 32 L-3.46 34Z M3.46 38 L0 40 L-3.46 38 L-3.46 34 L-0 32 L3.46 34Z M10.39 38 L6.93 40 L3.46 38 L3.46 34 L6.93 32 L10.39 34Z M17.32 38 L13.86 40 L10.39 38 L10.39 34 L13.86 32 L17.32 34Z M24.25 38 L20.78 40 L17.32 38 L17.32 34 L20.78 32 L24.25 34Z M31.18 38 L27.71 40 L24.25 38 L24.25 34 L27.71 32 L31.18 34Z M38.11 38 L34.64 40 L31.18 38 L31.18 34 L34.64 32 L38.11 34Z M45.03 38 L41.57 40 L38.11 38 L38.11 34 L41.57 32 L45.03 34Z" stroke="#3f9cff" stroke-width="0.9" fill="#2224f0" fill-opacity="0"/></svg><div class="t" style="right:455.9px;top:600.98px;font-size:5px;line-height:6.25px;color:#f4f4f4;font-weight:normal;transform:scaleX(0.86);transform-origin:100% 50%;text-shadow:0.4px 0.5px 0.5px #000;-webkit-text-stroke:0.12px #f4f4f4;">RGB</div><svg style="left:246.1px;top:601.3px" width="8" height="6"><path d="M0.7 3 A2.4 2.3 0 0 1 4.9 1.4 L6.8 3 L4.9 4.6 A2.4 2.3 0 0 1 0.7 3Z" fill="#f8f8f8" stroke="rgba(0,0,0,.55)" stroke-width=".7"/></svg><div class="t" style="right:455.9px;top:610.98px;font-size:5px;line-height:6.25px;color:#f4f4f4;font-weight:normal;transform:scaleX(0.86);transform-origin:100% 50%;text-shadow:0.4px 0.5px 0.5px #000;-webkit-text-stroke:0.12px #f4f4f4;">R</div><svg style="left:245.8px;top:611.1px" width="8" height="6"><circle cx="3" cy="3" r="1.9" stroke="#d01010" stroke-width="1.1" fill="none"/><path d="M5.2 1.7 L6.8 3 L5.2 4.3Z" fill="#d01010"/></svg><div class="t" style="right:455.9px;top:621.88px;font-size:5px;line-height:6.25px;color:#f4f4f4;font-weight:normal;transform:scaleX(0.86);transform-origin:100% 50%;text-shadow:0.4px 0.5px 0.5px #000;-webkit-text-stroke:0.12px #f4f4f4;">G</div><svg style="left:245.8px;top:622px" width="8" height="6"><circle cx="3" cy="3" r="1.9" stroke="#10c010" stroke-width="1.1" fill="none"/><path d="M5.2 1.7 L6.8 3 L5.2 4.3Z" fill="#10c010"/></svg><div class="t" style="right:455.9px;top:632.77px;font-size:5px;line-height:6.25px;color:#f4f4f4;font-weight:normal;transform:scaleX(0.86);transform-origin:100% 50%;text-shadow:0.4px 0.5px 0.5px #000;-webkit-text-stroke:0.12px #f4f4f4;">B</div><svg style="left:245.8px;top:632.9px" width="8" height="6"><circle cx="3" cy="3" r="1.9" stroke="#2020d8" stroke-width="1.1" fill="none"/><path d="M5.2 1.7 L6.8 3 L5.2 4.3Z" fill="#2020d8"/></svg><div class="t" style="right:455.9px;top:643.88px;font-size:5px;line-height:6.25px;color:#f4f4f4;font-weight:normal;transform:scaleX(0.86);transform-origin:100% 50%;text-shadow:0.4px 0.5px 0.5px #000;-webkit-text-stroke:0.12px #f4f4f4;">A</div><svg style="left:245.8px;top:644px" width="8" height="6"><circle cx="3" cy="3" r="1.9" stroke="#e0e0e0" stroke-width="1.1" fill="none"/><path d="M5.2 1.7 L6.8 3 L5.2 4.3Z" fill="#e0e0e0"/></svg><div class="t" style="right:455.9px;top:654.77px;font-size:5px;line-height:6.25px;color:#f4f4f4;font-weight:normal;transform:scaleX(0.86);transform-origin:100% 50%;text-shadow:0.4px 0.5px 0.5px #000;-webkit-text-stroke:0.12px #f4f4f4;">RGBA</div><svg style="left:245.8px;top:654.9px" width="8" height="6"><circle cx="3" cy="3" r="1.9" stroke="#e0e0e0" stroke-width="1.1" fill="none"/><path d="M5.2 1.7 L6.8 3 L5.2 4.3Z" fill="#e0e0e0"/></svg><svg style="left:216.5px;top:663.9px" width="6" height="5"><path d="M1 1.4 L3 3.4 L5 1.4" stroke="#eee" stroke-width="1.2" fill="none"/></svg><div style="left:301.5px;top:582.1px;width:42.1px;height:28.8px;background:#080808;border-radius:3px;box-shadow:0 1px 2px rgba(0,0,0,.5)"></div><div style="left:302.1px;top:582.7px;width:40.9px;height:27.4px;background:#1e1e1e;border-radius:2.5px"></div><div style="left:302.6px;top:583.2px;width:39.9px;height:8.1px;border-radius:2px 2px 0 0;background:linear-gradient(to bottom,rgba(255,255,255,.16),rgba(255,255,255,.04) 50%,rgba(0,0,0,.12)),linear-gradient(to right,#5c9a40 0%,#3c6a2a 68%,#2a2a2a 100%)"></div><div style="left:304.6px;top:584.5px;width:29.4px;height:5.2px;background:rgba(0,0,0,.32);border-radius:3px;box-shadow:inset 0 0 0 0.5px rgba(255,255,255,.12)"></div><div class="t" style="left:307.3px;top:584.79px;font-size:4.5px;line-height:5.62px;color:#f4f4f4;font-weight:normal;text-shadow:0.4px 0.5px 0.5px #000;-webkit-text-stroke:0.12px #f4f4f4;">Mask ( R G )</div><svg style="left:335px;top:584.5px" width="6" height="5"><path d="M1 1.4 L3 3.4 L5 1.4" stroke="#eee" stroke-width="1.2" fill="none"/></svg><svg style="left:305.2px;top:595.1px" width="8" height="6"><path d="M0.7 3 A2.4 2.3 0 0 1 4.9 1.4 L6.8 3 L4.9 4.6 A2.4 2.3 0 0 1 0.7 3Z" fill="#f8f8f8" stroke="rgba(0,0,0,.55)" stroke-width=".7"/></svg><svg style="left:333.2px;top:595.1px" width="8" height="6"><path d="M0.7 3 A2.4 2.3 0 0 1 4.9 1.4 L6.8 3 L4.9 4.6 A2.4 2.3 0 0 1 0.7 3Z" fill="#f8f8f8" stroke="rgba(0,0,0,.55)" stroke-width=".7"/></svg><svg style="left:319.5px;top:603.9px" width="6" height="5"><path d="M1 1.4 L3 3.4 L5 1.4" stroke="#eee" stroke-width="1.2" fill="none"/></svg><div style="left:284.4px;top:627.3px;width:65.5px;height:29.9px;background:#080808;border-radius:3px;box-shadow:0 1px 2px rgba(0,0,0,.5)"></div><div style="left:285px;top:627.9px;width:64.3px;height:28.5px;background:#1e1e1e;border-radius:2.5px"></div><div style="left:285.5px;top:628.4px;width:63.3px;height:13.7px;border-radius:2px 2px 0 0;background:linear-gradient(to bottom,rgba(255,255,255,.16),rgba(255,255,255,.04) 50%,rgba(0,0,0,.12)),linear-gradient(to right,#5c9a40 0%,#3c6a2a 68%,#2a2a2a 100%)"></div><div class="t" style="left:290px;top:630.03px;font-size:4.75px;line-height:5.94px;color:#f4f4f4;font-weight:normal;text-shadow:0.4px 0.5px 0.5px #000;-webkit-text-stroke:0.12px #f4f4f4;">Normal Map Intensity</div><div class="t" style="left:290px;top:636.41px;font-size:4.3px;line-height:5.38px;color:#a8d888;font-weight:normal;">Param (0)</div><svg style="left:341.3px;top:631.7px" width="6" height="5"><path d="M1 1.4 L3 3.4 L5 1.4" stroke="#eee" stroke-width="1.2" fill="none"/></svg><div class="t" style="right:378.2px;top:646.77px;font-size:5px;line-height:6.25px;color:#f4f4f4;font-weight:normal;transform:scaleX(0.86);transform-origin:100% 50%;text-shadow:0.4px 0.5px 0.5px #000;-webkit-text-stroke:0.12px #f4f4f4;">Default Value</div><div style="left:323.6px;top:646.3px;width:10.8px;height:7.2px;border:0.7px solid #b8b8b8;border-radius:1px;box-sizing:border-box;background:#151515"></div><div class="t" style="left:229px;width:200px;text-align:center;top:646.75px;font-size:5.2px;line-height:6.5px;color:#f0f0f0;font-weight:normal;transform:scaleX(0.92);transform-origin:50% 50%;-webkit-text-stroke:0.15px #f0f0f0;">0.0</div><svg style="left:338.9px;top:647.1px" width="8" height="6"><path d="M0.7 3 A2.4 2.3 0 0 1 4.9 1.4 L6.8 3 L4.9 4.6 A2.4 2.3 0 0 1 0.7 3Z" fill="#f8f8f8" stroke="rgba(0,0,0,.55)" stroke-width=".7"/></svg><div style="left:376.2px;top:587.1px;width:35.9px;height:33px;background:#080808;border-radius:3px;box-shadow:0 1px 2px rgba(0,0,0,.5)"></div><div style="left:376.8px;top:587.7px;width:34.7px;height:31.6px;background:#1e1e1e;border-radius:2.5px"></div><div style="left:377.3px;top:588.2px;width:33.7px;height:8.5px;border-radius:2px 2px 0 0;background:linear-gradient(to bottom,rgba(255,255,255,.16),rgba(255,255,255,.04) 50%,rgba(0,0,0,.12)),linear-gradient(to right,#5c9a40 0%,#3c6a2a 68%,#2a2a2a 100%)"></div><div style="left:379.3px;top:589.5px;width:23.2px;height:5.6px;background:rgba(0,0,0,.32);border-radius:3px;box-shadow:inset 0 0 0 0.5px rgba(255,255,255,.12)"></div><div class="t" style="left:382px;top:589.99px;font-size:4.5px;line-height:5.62px;color:#f4f4f4;font-weight:normal;text-shadow:0.4px 0.5px 0.5px #000;-webkit-text-stroke:0.12px #f4f4f4;">Multiply</div><svg style="left:403.5px;top:589.7px" width="6" height="5"><path d="M1 1.4 L3 3.4 L5 1.4" stroke="#eee" stroke-width="1.2" fill="none"/></svg><svg style="left:378.4px;top:600.3px" width="8" height="6"><ellipse cx="3.5" cy="3" rx="2.9" ry="2.4" fill="#434343"/></svg><div class="t" style="left:385.9px;top:600.17px;font-size:5px;line-height:6.25px;color:#f4f4f4;font-weight:normal;transform:scaleX(0.86);transform-origin:0 50%;text-shadow:0.4px 0.5px 0.5px #000;-webkit-text-stroke:0.12px #f4f4f4;">A</div><svg style="left:378.4px;top:611.7px" width="8" height="6"><ellipse cx="3.5" cy="3" rx="2.9" ry="2.4" fill="#434343"/></svg><div class="t" style="left:385.9px;top:611.58px;font-size:5px;line-height:6.25px;color:#f4f4f4;font-weight:normal;transform:scaleX(0.86);transform-origin:0 50%;text-shadow:0.4px 0.5px 0.5px #000;-webkit-text-stroke:0.12px #f4f4f4;">B</div><svg style="left:401.1px;top:600.5px" width="8" height="6"><path d="M0.7 3 A2.4 2.3 0 0 1 4.9 1.4 L6.8 3 L4.9 4.6 A2.4 2.3 0 0 1 0.7 3Z" fill="#f8f8f8" stroke="rgba(0,0,0,.55)" stroke-width=".7"/></svg><div style="left:456.4px;top:604.5px;width:33.9px;height:33.6px;background:#080808;border-radius:3px;box-shadow:0 1px 2px rgba(0,0,0,.5)"></div><div style="left:457px;top:605.1px;width:32.7px;height:32.2px;background:#1e1e1e;border-radius:2.5px"></div><div style="left:457.5px;top:605.6px;width:31.7px;height:8px;border-radius:2px 2px 0 0;background:linear-gradient(to bottom,rgba(255,255,255,.16),rgba(255,255,255,.04) 50%,rgba(0,0,0,.12)),linear-gradient(to right,#5c9a40 0%,#3c6a2a 68%,#2a2a2a 100%)"></div><div style="left:459.5px;top:606.9px;width:21.2px;height:5.1px;background:rgba(0,0,0,.32);border-radius:3px;box-shadow:inset 0 0 0 0.5px rgba(255,255,255,.12)"></div><div class="t" style="left:462.2px;top:607.14px;font-size:4.5px;line-height:5.62px;color:#f4f4f4;font-weight:normal;text-shadow:0.4px 0.5px 0.5px #000;-webkit-text-stroke:0.12px #f4f4f4;">Append</div><svg style="left:481.7px;top:606.85px" width="6" height="5"><path d="M1 1.4 L3 3.4 L5 1.4" stroke="#eee" stroke-width="1.2" fill="none"/></svg><svg style="left:458.9px;top:617.8px" width="8" height="6"><path d="M0.7 3 A2.4 2.3 0 0 1 4.9 1.4 L6.8 3 L4.9 4.6 A2.4 2.3 0 0 1 0.7 3Z" fill="#f8f8f8" stroke="rgba(0,0,0,.55)" stroke-width=".7"/></svg><div class="t" style="left:466.1px;top:617.48px;font-size:5px;line-height:6.25px;color:#f4f4f4;font-weight:normal;transform:scaleX(0.86);transform-origin:0 50%;text-shadow:0.4px 0.5px 0.5px #000;-webkit-text-stroke:0.12px #f4f4f4;">A</div><svg style="left:458.9px;top:628.6px" width="8" height="6"><path d="M0.7 3 A2.4 2.3 0 0 1 4.9 1.4 L6.8 3 L4.9 4.6 A2.4 2.3 0 0 1 0.7 3Z" fill="#f8f8f8" stroke="rgba(0,0,0,.55)" stroke-width=".7"/></svg><div class="t" style="left:466.1px;top:628.27px;font-size:5px;line-height:6.25px;color:#f4f4f4;font-weight:normal;transform:scaleX(0.86);transform-origin:0 50%;text-shadow:0.4px 0.5px 0.5px #000;-webkit-text-stroke:0.12px #f4f4f4;">B</div><svg style="left:480px;top:617.8px" width="8" height="6"><path d="M0.7 3 A2.4 2.3 0 0 1 4.9 1.4 L6.8 3 L4.9 4.6 A2.4 2.3 0 0 1 0.7 3Z" fill="#f8f8f8" stroke="rgba(0,0,0,.55)" stroke-width=".7"/></svg><div style="left:381.8px;top:662.4px;width:50.1px;height:23.3px;background:#080808;border-radius:3px;box-shadow:0 1px 2px rgba(0,0,0,.5)"></div><div style="left:382.4px;top:663px;width:48.9px;height:21.9px;background:#1e1e1e;border-radius:2.5px"></div><div style="left:382.9px;top:663.5px;width:47.9px;height:7.7px;border-radius:2px 2px 0 0;background:linear-gradient(to bottom,rgba(255,255,255,.16),rgba(255,255,255,.04) 50%,rgba(0,0,0,.12)),linear-gradient(to right,#5c9a40 0%,#3c6a2a 68%,#2a2a2a 100%)"></div><div style="left:384.9px;top:664.8px;width:37.4px;height:4.8px;background:rgba(0,0,0,.32);border-radius:3px;box-shadow:inset 0 0 0 0.5px rgba(255,255,255,.12)"></div><div class="t" style="left:387.6px;top:664.89px;font-size:4.5px;line-height:5.62px;color:#f4f4f4;font-weight:normal;text-shadow:0.4px 0.5px 0.5px #000;-webkit-text-stroke:0.12px #f4f4f4;">1</div><svg style="left:423.3px;top:664.6px" width="6" height="5"><path d="M1 1.4 L3 3.4 L5 1.4" stroke="#eee" stroke-width="1.2" fill="none"/></svg><div class="t" style="right:296.2px;top:675.27px;font-size:5px;line-height:6.25px;color:#f4f4f4;font-weight:normal;transform:scaleX(0.86);transform-origin:100% 50%;text-shadow:0.4px 0.5px 0.5px #000;-webkit-text-stroke:0.12px #f4f4f4;">Value</div><div style="left:405.6px;top:674.8px;width:10.8px;height:7.2px;border:0.7px solid #b8b8b8;border-radius:1px;box-sizing:border-box;background:#151515"></div><div class="t" style="left:311px;width:200px;text-align:center;top:675.25px;font-size:5.2px;line-height:6.5px;color:#f0f0f0;font-weight:normal;transform:scaleX(0.92);transform-origin:50% 50%;-webkit-text-stroke:0.15px #f0f0f0;">1.0</div><svg style="left:421.1px;top:675.6px" width="8" height="6"><path d="M0.7 3 A2.4 2.3 0 0 1 4.9 1.4 L6.8 3 L4.9 4.6 A2.4 2.3 0 0 1 0.7 3Z" fill="#f8f8f8" stroke="rgba(0,0,0,.55)" stroke-width=".7"/></svg><div style="left:331.5px;top:722.7px;width:50.5px;height:24.3px;background:#080808;border-radius:3px;box-shadow:0 1px 2px rgba(0,0,0,.5)"></div><div style="left:332.1px;top:723.3px;width:49.3px;height:22.9px;background:#1e1e1e;border-radius:2.5px"></div><div style="left:332.6px;top:723.8px;width:48.3px;height:8px;border-radius:2px 2px 0 0;background:linear-gradient(to bottom,rgba(255,255,255,.16),rgba(255,255,255,.04) 50%,rgba(0,0,0,.12)),linear-gradient(to right,#5c9a40 0%,#3c6a2a 68%,#2a2a2a 100%)"></div><div style="left:334.6px;top:725.1px;width:37.8px;height:5.1px;background:rgba(0,0,0,.32);border-radius:3px;box-shadow:inset 0 0 0 0.5px rgba(255,255,255,.12)"></div><div class="t" style="left:337.3px;top:725.34px;font-size:4.5px;line-height:5.62px;color:#f4f4f4;font-weight:normal;text-shadow:0.4px 0.5px 0.5px #000;-webkit-text-stroke:0.12px #f4f4f4;">1</div><svg style="left:373.4px;top:725.05px" width="6" height="5"><path d="M1 1.4 L3 3.4 L5 1.4" stroke="#eee" stroke-width="1.2" fill="none"/></svg><div class="t" style="right:346px;top:736.48px;font-size:5px;line-height:6.25px;color:#f4f4f4;font-weight:normal;transform:scaleX(0.86);transform-origin:100% 50%;text-shadow:0.4px 0.5px 0.5px #000;-webkit-text-stroke:0.12px #f4f4f4;">Value</div><div style="left:355.7px;top:736px;width:11px;height:7.2px;border:0.7px solid #b8b8b8;border-radius:1px;box-sizing:border-box;background:#151515"></div><div class="t" style="left:261.2px;width:200px;text-align:center;top:736.45px;font-size:5.2px;line-height:6.5px;color:#f0f0f0;font-weight:normal;transform:scaleX(0.92);transform-origin:50% 50%;-webkit-text-stroke:0.15px #f0f0f0;">1.0</div><svg style="left:371px;top:736.8px" width="8" height="6"><path d="M0.7 3 A2.4 2.3 0 0 1 4.9 1.4 L6.8 3 L4.9 4.6 A2.4 2.3 0 0 1 0.7 3Z" fill="#f8f8f8" stroke="rgba(0,0,0,.55)" stroke-width=".7"/></svg><div style="left:325.8px;top:762.9px;width:67.8px;height:29.7px;background:#080808;border-radius:3px;box-shadow:0 1px 2px rgba(0,0,0,.5)"></div><div style="left:326.4px;top:763.5px;width:66.6px;height:28.3px;background:#1e1e1e;border-radius:2.5px"></div><div style="left:326.9px;top:764px;width:65.6px;height:13.3px;border-radius:2px 2px 0 0;background:linear-gradient(to bottom,rgba(255,255,255,.16),rgba(255,255,255,.04) 50%,rgba(0,0,0,.12)),linear-gradient(to right,#5c9a40 0%,#3c6a2a 68%,#2a2a2a 100%)"></div><div class="t" style="left:331.4px;top:765.63px;font-size:4.75px;line-height:5.94px;color:#f4f4f4;font-weight:normal;text-shadow:0.4px 0.5px 0.5px #000;-webkit-text-stroke:0.12px #f4f4f4;">Refraction</div><div class="t" style="left:331.4px;top:771.61px;font-size:4.3px;line-height:5.38px;color:#a8d888;font-weight:normal;">Param (1.52)</div><svg style="left:385px;top:767.3px" width="6" height="5"><path d="M1 1.4 L3 3.4 L5 1.4" stroke="#eee" stroke-width="1.2" fill="none"/></svg><div class="t" style="right:337px;top:782.08px;font-size:5px;line-height:6.25px;color:#f4f4f4;font-weight:normal;transform:scaleX(0.86);transform-origin:100% 50%;text-shadow:0.4px 0.5px 0.5px #000;-webkit-text-stroke:0.12px #f4f4f4;">Default Value</div><div style="left:364.8px;top:781.6px;width:13.5px;height:7.2px;border:0.7px solid #b8b8b8;border-radius:1px;box-sizing:border-box;background:#151515"></div><div class="t" style="left:271.55px;width:200px;text-align:center;top:782.05px;font-size:5.2px;line-height:6.5px;color:#f0f0f0;font-weight:normal;transform:scaleX(0.92);transform-origin:50% 50%;-webkit-text-stroke:0.15px #f0f0f0;">1.52</div><svg style="left:382.9px;top:782.4px" width="8" height="6"><path d="M0.7 3 A2.4 2.3 0 0 1 4.9 1.4 L6.8 3 L4.9 4.6 A2.4 2.3 0 0 1 0.7 3Z" fill="#f8f8f8" stroke="rgba(0,0,0,.55)" stroke-width=".7"/></svg><div style="left:320.2px;top:809.1px;width:69.7px;height:52.6px;background:#080808;border-radius:3px;box-shadow:0 1px 2px rgba(0,0,0,.5)"></div><div style="left:320.8px;top:809.7px;width:68.5px;height:51.2px;background:#1e1e1e;border-radius:2.5px"></div><div style="left:321.3px;top:810.2px;width:67.5px;height:6.7px;border-radius:2px 2px 0 0;background:linear-gradient(to bottom,rgba(255,255,255,.16),rgba(255,255,255,.04) 50%,rgba(0,0,0,.12)),linear-gradient(to right,#5c9a40 0%,#3c6a2a 68%,#2a2a2a 100%)"></div><div style="left:323.3px;top:811.5px;width:57px;height:3.8px;background:rgba(0,0,0,.32);border-radius:3px;box-shadow:inset 0 0 0 0.5px rgba(255,255,255,.12)"></div><div class="t" style="left:326px;top:811.09px;font-size:4.5px;line-height:5.62px;color:#f4f4f4;font-weight:normal;text-shadow:0.4px 0.5px 0.5px #000;-webkit-text-stroke:0.12px #f4f4f4;">Fresnel</div><svg style="left:381.3px;top:810.8px" width="6" height="5"><path d="M1 1.4 L3 3.4 L5 1.4" stroke="#eee" stroke-width="1.2" fill="none"/></svg><svg style="left:324.5px;top:823.6px" width="4" height="4"><circle cx="2" cy="2" r="1.1" fill="#0c0c0c"/></svg><div class="t" style="left:331.5px;top:822.48px;font-size:5px;line-height:6.25px;color:#f4f4f4;font-weight:normal;transform:scaleX(0.86);transform-origin:0 50%;text-shadow:0.4px 0.5px 0.5px #000;-webkit-text-stroke:0.12px #f4f4f4;">ExponentIn</div><div style="left:355px;top:821.8px;width:11.1px;height:7.2px;border:0.7px solid #b8b8b8;border-radius:1px;box-sizing:border-box;background:#151515"></div><div class="t" style="left:260.55px;width:200px;text-align:center;top:822.25px;font-size:5.2px;line-height:6.5px;color:#f0f0f0;font-weight:normal;transform:scaleX(0.92);transform-origin:50% 50%;-webkit-text-stroke:0.15px #f0f0f0;">5.0</div><svg style="left:379.5px;top:822px" width="8" height="6"><path d="M0.7 3 A2.4 2.3 0 0 1 4.9 1.4 L6.8 3 L4.9 4.6 A2.4 2.3 0 0 1 0.7 3Z" fill="#f8f8f8" stroke="rgba(0,0,0,.55)" stroke-width=".7"/></svg><svg style="left:324.5px;top:838.5px" width="4" height="4"><circle cx="2" cy="2" r="1.1" fill="#0c0c0c"/></svg><div class="t" style="left:331.5px;top:834.67px;font-size:5px;line-height:6.25px;color:#f4f4f4;font-weight:normal;transform:scaleX(0.86);transform-origin:0 50%;text-shadow:0.4px 0.5px 0.5px #000;-webkit-text-stroke:0.12px #f4f4f4;">BaseReflectFractionIn</div><div style="left:333.3px;top:840.3px;width:13.2px;height:7.2px;border:0.7px solid #b8b8b8;border-radius:1px;box-sizing:border-box;background:#151515"></div><div class="t" style="left:239.9px;width:200px;text-align:center;top:840.75px;font-size:5.2px;line-height:6.5px;color:#f0f0f0;font-weight:normal;transform:scaleX(0.92);transform-origin:50% 50%;-webkit-text-stroke:0.15px #f0f0f0;">0.04</div><svg style="left:324.5px;top:853.7px" width="4" height="4"><circle cx="2" cy="2" r="1.1" fill="#0c0c0c"/></svg><div class="t" style="left:331.5px;top:852.58px;font-size:5px;line-height:6.25px;color:#f4f4f4;font-weight:normal;transform:scaleX(0.86);transform-origin:0 50%;text-shadow:0.4px 0.5px 0.5px #000;-webkit-text-stroke:0.12px #f4f4f4;">Normal</div><div style="left:451.5px;top:740px;width:39.6px;height:44.4px;background:#080808;border-radius:3px;box-shadow:0 1px 2px rgba(0,0,0,.5)"></div><div style="left:452.1px;top:740.6px;width:38.4px;height:43px;background:#1e1e1e;border-radius:2.5px"></div><div style="left:452.6px;top:741.1px;width:37.4px;height:7.3px;border-radius:2px 2px 0 0;background:linear-gradient(to bottom,rgba(255,255,255,.16),rgba(255,255,255,.04) 50%,rgba(0,0,0,.12)),linear-gradient(to right,#5c9a40 0%,#3c6a2a 68%,#2a2a2a 100%)"></div><div style="left:454.6px;top:742.4px;width:26.9px;height:4.4px;background:rgba(0,0,0,.32);border-radius:3px;box-shadow:inset 0 0 0 0.5px rgba(255,255,255,.12)"></div><div class="t" style="left:457.3px;top:742.29px;font-size:4.5px;line-height:5.62px;color:#f4f4f4;font-weight:normal;text-shadow:0.4px 0.5px 0.5px #000;-webkit-text-stroke:0.12px #f4f4f4;">Lerp</div><svg style="left:482.5px;top:742px" width="6" height="5"><path d="M1 1.4 L3 3.4 L5 1.4" stroke="#eee" stroke-width="1.2" fill="none"/></svg><svg style="left:454.3px;top:752.7px" width="8" height="6"><ellipse cx="3.5" cy="3" rx="2.9" ry="2.4" fill="#434343"/></svg><div class="t" style="left:461.8px;top:752.58px;font-size:5px;line-height:6.25px;color:#f4f4f4;font-weight:normal;transform:scaleX(0.86);transform-origin:0 50%;text-shadow:0.4px 0.5px 0.5px #000;-webkit-text-stroke:0.12px #f4f4f4;">A</div><svg style="left:454.3px;top:763.7px" width="8" height="6"><ellipse cx="3.5" cy="3" rx="2.9" ry="2.4" fill="#434343"/></svg><div class="t" style="left:461.8px;top:763.58px;font-size:5px;line-height:6.25px;color:#f4f4f4;font-weight:normal;transform:scaleX(0.86);transform-origin:0 50%;text-shadow:0.4px 0.5px 0.5px #000;-webkit-text-stroke:0.12px #f4f4f4;">B</div><svg style="left:454.3px;top:775.3px" width="8" height="6"><ellipse cx="3.5" cy="3" rx="2.9" ry="2.4" fill="#434343"/></svg><div class="t" style="left:461.8px;top:775.17px;font-size:5px;line-height:6.25px;color:#f4f4f4;font-weight:normal;transform:scaleX(0.86);transform-origin:0 50%;text-shadow:0.4px 0.5px 0.5px #000;-webkit-text-stroke:0.12px #f4f4f4;">Alpha</div><svg style="left:480.4px;top:752.9px" width="8" height="6"><path d="M0.7 3 A2.4 2.3 0 0 1 4.9 1.4 L6.8 3 L4.9 4.6 A2.4 2.3 0 0 1 0.7 3Z" fill="#f8f8f8" stroke="rgba(0,0,0,.55)" stroke-width=".7"/></svg></div>
</body></html>
